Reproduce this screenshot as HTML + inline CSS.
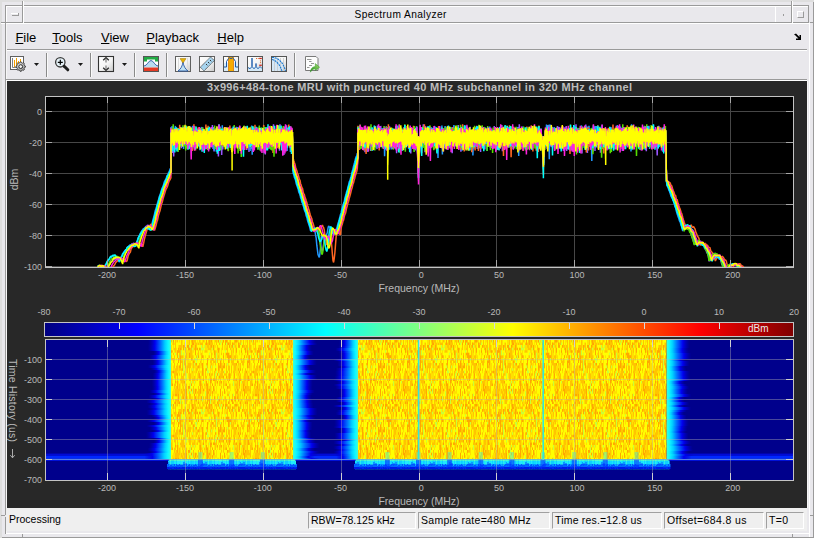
<!DOCTYPE html><html><head><meta charset="utf-8"><style>
*{margin:0;padding:0;box-sizing:border-box}
html,body{width:814px;height:538px;overflow:hidden;background:#e9e8ec;font-family:"Liberation Sans", sans-serif}
.a{position:absolute}
.menu{position:absolute;top:31px;font-size:13px;color:#000;line-height:13px}
.menu u{text-decoration:underline;text-underline-offset:1px}
.st{position:absolute;top:512px;height:17px;border-top:1px solid #a0a0a0;border-left:1px solid #a0a0a0;border-right:1px solid #fff;border-bottom:1px solid #fff;font-size:10.5px;line-height:15px;padding-left:2px;color:#000;white-space:nowrap;overflow:hidden}
</style></head><body>
<div class="a" style="left:0;top:0;width:814px;height:2px;background:#dedede"></div>
<div class="a" style="left:0;top:0;width:2px;height:538px;background:#dedede"></div>
<div class="a" style="left:5px;top:5px;width:804px;height:18px;border-top:1px solid #9a9a9a;border-left:1px solid #9a9a9a;border-bottom:1px solid #9a9a9a;"></div>
<div class="a" style="left:6px;top:6px;width:803px;height:1px;background:#fff"></div>
<div class="a" style="left:6px;top:6px;width:1px;height:16px;background:#fff"></div>
<div class="a" style="left:22px;top:1px;width:1px;height:22px;background:#9a9a9a"></div>
<div class="a" style="left:23px;top:1px;width:1px;height:22px;background:#fff"></div>
<div class="a" style="left:1px;top:22px;width:5px;height:1px;background:#9a9a9a"></div>
<div class="a" style="left:1px;top:23px;width:5px;height:1px;background:#fff"></div>
<div class="a" style="left:12px;top:15px;width:7px;height:1px;background:#9a9a9a"></div>
<div class="a" style="left:11px;top:13px;width:7px;height:1px;background:#fff"></div>
<div class="a" style="left:18px;top:13px;width:1px;height:2px;background:#9a9a9a"></div>
<div class="a" style="left:775px;top:6px;width:1px;height:16px;background:#fff"></div>
<div class="a" style="left:791px;top:1px;width:1px;height:22px;background:#9a9a9a"></div>
<div class="a" style="left:792px;top:1px;width:1px;height:22px;background:#fff"></div>
<div class="a" style="left:808px;top:5px;width:1px;height:18px;background:#9a9a9a"></div>
<div class="a" style="left:783px;top:14px;width:1px;height:2px;background:#9a9a9a"></div>
<div class="a" style="left:797px;top:11px;width:7px;height:7px;border-top:1px solid #fff;border-left:1px solid #fff;border-right:1px solid #9a9a9a;border-bottom:1px solid #9a9a9a"></div>
<div class="a" style="left:813px;top:2px;width:1px;height:536px;background:#9a9a9a"></div>
<div class="a" style="left:809px;top:23px;width:1px;height:515px;background:#fff"></div>
<div class="a" style="left:810px;top:22px;width:3px;height:1px;background:#9a9a9a"></div>
<div class="a" style="left:810px;top:515px;width:3px;height:1px;background:#9a9a9a"></div>
<div class="a" style="left:6px;top:23px;width:803px;height:1px;background:#fff"></div>
<div class="a" style="left:6px;top:24px;width:1px;height:509px;background:#f6f6f6"></div>
<div class="a" style="left:807px;top:81px;width:1px;height:427px;background:#f6f6f6"></div>
<div class="a" style="left:354.5px;top:8.5px;font-size:10.2px;line-height:11px;letter-spacing:0.4px;color:#000;white-space:nowrap">Spectrum Analyzer</div>
<div class="a" style="left:5px;top:23px;width:1px;height:492px;background:#9a9a9a"></div>
<div class="a" style="left:5px;top:517px;width:1px;height:17px;background:#9a9a9a"></div>
<div class="a" style="left:1px;top:515px;width:4px;height:1px;background:#9a9a9a"></div>
<div class="a" style="left:2px;top:537px;width:812px;height:1px;background:#9a9a9a"></div>
<div class="a" style="left:6px;top:533px;width:803px;height:1px;background:#fff"></div>
<div class="a" style="left:22px;top:534px;width:1px;height:4px;background:#9a9a9a"></div>
<div class="a" style="left:792px;top:534px;width:1px;height:4px;background:#9a9a9a"></div>
<div class="menu" style="left:15.4px"><u>F</u>ile</div>
<div class="menu" style="left:52.2px"><u>T</u>ools</div>
<div class="menu" style="left:101px"><u>V</u>iew</div>
<div class="menu" style="left:146.3px"><u>P</u>layback</div>
<div class="menu" style="left:217.3px"><u>H</u>elp</div>
<svg class="a" style="left:793px;top:33px" width="10" height="8" viewBox="0 0 10 8"><path d="M1 1.5 L3 0.5 L6.5 4 L6.5 2 L8 2 L8 7 L3 7 L3 5.5 L5.5 5.5 L2.5 2.5 Z" fill="#000"/></svg>
<div class="a" style="left:7px;top:49px;width:800px;height:1px;background:#9a9a9a"></div>
<div class="a" style="left:7px;top:50px;width:800px;height:1px;background:#fff"></div>
<div class="a" style="left:6px;top:79px;width:801px;height:1px;background:#9a9a9a"></div>
<div class="a" style="left:6px;top:80px;width:801px;height:1px;background:#fff"></div>
<div class="a" style="left:46px;top:53px;width:1px;height:24px;background:#8a8a8a"></div>
<div class="a" style="left:47px;top:53px;width:1px;height:24px;background:#fafafa"></div>
<div class="a" style="left:90px;top:53px;width:1px;height:24px;background:#8a8a8a"></div>
<div class="a" style="left:91px;top:53px;width:1px;height:24px;background:#fafafa"></div>
<div class="a" style="left:134px;top:53px;width:1px;height:24px;background:#8a8a8a"></div>
<div class="a" style="left:135px;top:53px;width:1px;height:24px;background:#fafafa"></div>
<div class="a" style="left:166px;top:53px;width:1px;height:24px;background:#8a8a8a"></div>
<div class="a" style="left:167px;top:53px;width:1px;height:24px;background:#fafafa"></div>
<div class="a" style="left:294px;top:53px;width:1px;height:24px;background:#8a8a8a"></div>
<div class="a" style="left:295px;top:53px;width:1px;height:24px;background:#fafafa"></div>
<svg class="a" style="left:0;top:51px" width="330" height="28" viewBox="0 51 330 28">
<defs><linearGradient id="bg1" x1="0" y1="0" x2="1" y2="1"><stop offset="0" stop-color="#ffffff"/><stop offset="0.55" stop-color="#f4f4f4"/><stop offset="1" stop-color="#c8c8c8"/></linearGradient></defs>
<rect x="10.5" y="56.5" width="13" height="13" fill="#fff" stroke="#606060"/>
<path d="M12.5 58V67.5H22" stroke="#808080" fill="none"/>
<path d="M14.5 60V67M16.5 58V66M18.5 61V64M20.5 59V62" stroke="#f5a000" stroke-width="1"/>
<defs><radialGradient id="gg" cx="0.4" cy="0.35" r="0.7"><stop offset="0" stop-color="#e8e8e8"/><stop offset="1" stop-color="#8a8a8a"/></radialGradient></defs>
<path d="M24.60 65.73L25.42 66.03L25.42 67.17L24.60 67.47L24.08 68.74L24.44 69.53L23.63 70.34L22.84 69.98L21.57 70.50L21.27 71.32L20.13 71.32L19.83 70.50L18.56 69.98L17.77 70.34L16.96 69.53L17.32 68.74L16.80 67.47L15.98 67.17L15.98 66.03L16.80 65.73L17.32 64.46L16.96 63.67L17.77 62.86L18.56 63.22L19.83 62.70L20.13 61.88L21.27 61.88L21.57 62.70L22.84 63.22L23.63 62.86L24.44 63.67L24.08 64.46Z" fill="url(#gg)" stroke="#2e2e2e" stroke-width="0.8" stroke-linejoin="round"/>
<circle cx="20.7" cy="66.6" r="1.9" fill="#f4f4f4" stroke="#2a2a2a" stroke-width="1"/>
<path d="M34 63H39L36.5 66Z" fill="#1a1a1a"/>
<path d="M78 63H83L80.5 66Z" fill="#1a1a1a"/>
<path d="M122 63H127L124.5 66Z" fill="#1a1a1a"/>
<circle cx="60.3" cy="62.3" r="4.7" fill="#e6f2f8" stroke="#3a3a3a" stroke-width="1.3"/>
<path d="M57.8 62.3H62.8M60.3 59.8V64.8" stroke="#000" stroke-width="1.2"/>
<path d="M64.2 66.2L67.8 69.8" stroke="#1e1e1e" stroke-width="3" stroke-linecap="round"/>
<rect x="98.5" y="56.5" width="15" height="15" fill="url(#bg1)" stroke="#333" stroke-width="1.1"/>
<path d="M106 59V62.5M106 65.5V69" stroke="#9a9a9a" stroke-width="1.6"/>
<path d="M103.2 60.2L106 57.6L108.8 60.2M103.2 67.8L106 70.4L108.8 67.8" stroke="#2a2a2a" stroke-width="1.3" fill="none"/>
<rect x="143.5" y="56.5" width="15" height="15" fill="#fff" stroke="#555"/>
<path d="M144 57H158V61.5H155V59.5H147V61.5H144Z" fill="#22aa44"/>
<path d="M144 67.5V66C147 66 148.5 60.5 151 60.5S155 66 158 66V67.5Z" fill="#b8dcf0"/>
<path d="M144 66C147 66 148.5 60.5 151 60.5S155 66 158 66" fill="none" stroke="#2a55a5" stroke-width="0.9"/>
<rect x="144" y="67.5" width="14" height="3.5" fill="#e53a25"/>
<rect x="175.5" y="56.5" width="15" height="15" fill="url(#bg1)" stroke="#606060"/>
<path d="M178.5 58V71M187.5 58V71" stroke="#dcdcdc"/>
<path d="M178 71C181 69 182.3 66 183 62C183.7 66 185 69 188 71Z" fill="#c0e2f5" stroke="#2a5aa8" stroke-width="0.9"/>
<path d="M180 58.6H186L183.4 62.5H182.6Z" fill="#e8b400" stroke="#9a6a00" stroke-width="0.5"/>
<rect x="199.5" y="56.5" width="15" height="15" fill="url(#bg1)" stroke="#606060"/>
<path d="M200.3 67.2L210.6 56.9L214.3 60.6L204 70.9Z" fill="#a8d4ee" stroke="#1a1a1a" stroke-width="0.8" stroke-dasharray="1 0.6"/>
<path d="M206 64L207.3 65.3M208 62L209.3 63.3M210 60L211.3 61.3" stroke="#222" stroke-width="0.9"/>
<rect x="223.5" y="56.5" width="15" height="15" fill="url(#bg1)" stroke="#555"/>
<rect x="224" y="63" width="14" height="8" fill="#d8ecf8"/>
<rect x="228.5" y="57" width="5" height="14" fill="#f6ab00"/>
<path d="M228.5 57V71M233.5 57V71" stroke="#e07800" stroke-width="0.8"/>
<path d="M224 67H226.5V61.5L228.5 58.5L229.5 57.8L231 58.6L232.5 57.8L233.5 58.5L235.5 61.5V67H238" stroke="#1a55a5" stroke-width="1" fill="none"/>
<rect x="247.5" y="56.5" width="15" height="15" fill="url(#bg1)" stroke="#555"/>
<rect x="248" y="67" width="14" height="4" fill="#d4e8f6"/>
<path d="M248 67.5L250 68.8L252 66.5V58V66.5L254 68.8L256 66.5V63.5V66.5L258 68.8L260 66.5L262 68.5" stroke="#1a5aaa" stroke-width="0.9" fill="none"/>
<path d="M256 58.5H257M257.8 58.5H258.8" stroke="#e07030"/>
<rect x="259.2" y="57.8" width="2.6" height="1.3" fill="#d02a20"/>
<rect x="259.2" y="64.6" width="2.6" height="1.3" fill="#d02a20"/>
<circle cx="260.5" cy="60.8" r="0.6" fill="#e07030"/><circle cx="260.5" cy="62.6" r="0.6" fill="#e07030"/>
<rect x="271.5" y="56.5" width="15" height="15" fill="url(#bg1)" stroke="#555"/>
<path d="M272 57H277C281 60 283 64 284 71H272Z" fill="#cfe6f7" opacity="0.9"/>
<path d="M274.5 58V71M277.5 58V71M280.5 58V71M283.5 58V71" stroke="#c8c8c8" stroke-width="0.8"/>
<path d="M272 57.5H274C279 58.5 283.5 63 285.5 71" stroke="#1a78d0" stroke-width="1.1" fill="none" stroke-dasharray="2 0.8"/>
<path d="M272 59.5C277 61 280 65 282 71" stroke="#1a78d0" stroke-width="1.1" fill="none" stroke-dasharray="2 0.8"/>
<path d="M305.5 56.5H316L318 58.5V70.5H305.5Z" fill="#fdfdfd" stroke="#7a7a7a"/>
<path d="M307 59.5H311.5M309 61.5H311.5M311 63.5H314M309 65.5H312M307 67.5H309.5" stroke="#8a8a8a" stroke-width="0.9"/>
<defs><linearGradient id="ga" x1="0" y1="1" x2="1" y2="0"><stop offset="0" stop-color="#1a8a1a"/><stop offset="1" stop-color="#a8e070"/></linearGradient></defs>
<path d="M310.3 72.2C310.8 68.5 312.5 66.8 315.3 66.5V63.6L319.6 67.2L315.3 70.6V68.8C313.3 68.9 311.8 70 310.3 72.2Z" fill="url(#ga)" stroke="#3a9a2a" stroke-width="0.5"/>
</svg>
<svg class="a" style="left:7px;top:81px" width="800" height="427" viewBox="7 81 800 427">
<defs>
<clipPath id="cax"><rect x="45" y="96" width="748" height="171"/></clipPath>
<clipPath id="csp"><rect x="45" y="340" width="748" height="140"/></clipPath>
<linearGradient id="jet" x1="0" x2="1" y1="0" y2="0"><stop offset="0" stop-color="#000080"/><stop offset="0.125" stop-color="#0000ff"/><stop offset="0.375" stop-color="#00ffff"/><stop offset="0.5" stop-color="#80ff80"/><stop offset="0.625" stop-color="#ffff00"/><stop offset="0.875" stop-color="#ff0000"/><stop offset="1" stop-color="#800000"/></linearGradient>
</defs>
<rect x="7" y="81" width="800" height="427" fill="#282828"/>
<text x="207" y="91" font-family='"Liberation Sans", sans-serif' font-size="11" font-weight="bold" fill="#bdbdbd" textLength="425" lengthAdjust="spacing">3x996+484-tone MRU with punctured 40 MHz subchannel in 320 MHz channel</text>
<rect x="45" y="96" width="748" height="171" fill="#000"/>
<path d="M107.5 96V267M185.5 96V267M263.5 96V267M341.5 96V267M419.5 96V267M496.5 96V267M574.5 96V267M652.5 96V267M730.5 96V267M45 111.5H793M45 142.5H793M45 173.5H793M45 204.5H793M45 235.5H793M45 266.5H793" stroke="#474747" stroke-width="1" fill="none"/>
<g clip-path="url(#cax)" fill="none" stroke-width="1.5" stroke-linejoin="bevel">
<path d="M97.7 266.3 98.4 266.7 99.2 265.3 100 266.2 100.8 266.2 101.5 266.7 102.3 266.4 103.1 267.5 103.9 268.2 104.7 268.5 105.4 269.4 106.2 271.7 107 269.9 107.8 268 108.6 265.3 109.3 265.2 110.1 262.5 110.9 262.2 111.7 261.1 112.5 260.8 113.2 259.2 114 259.4 114.8 258.7 115.6 258.9 116.3 258.3 117.1 257.3 117.9 257.4 118.7 258 119.5 259.6 120.2 258.8 121 259.8 121.8 261.5 122.6 260.9 123.4 258.5 124.1 255.9 124.9 253.3 125.7 252.1 126.5 250.4 127.2 249.8 128 248.2 128.8 246.8 129.6 245.7 130.4 245 131.1 245.2 131.9 243.7 132.7 244.4 133.5 243.2 134.3 243.5 135 244.1 135.8 243.7 136.6 244.3 137.4 244.4 138.1 247.2 138.9 244.3 139.7 239.5 140.5 236.9 141.3 235.5 142 233.2 142.8 231 143.6 230 144.4 228.5 145.2 227.9 145.9 226.2 146.7 226.7 147.5 225.1 148.3 225.4 149.1 226.1 149.8 227 150.6 229.3 151.4 229.9 152.2 226.6 152.9 223.8 153.7 221.3 154.5 217.3 155.3 214.8 156.1 211.3 156.8 208.7 157.6 205 158.4 203.4 159.2 199.9 160 197.4 160.7 195.1 161.5 193.5 162.3 191 163.1 187.6 163.8 186.6 164.6 184.6 165.4 182.5 166.2 180.1 167 178.3 167.7 177.3 168.5 175.5 169.3 172.9 170.1 171.6 170.9 169.2 171 171 171 127.4 171.6 144.9 172.1 128.2 172.6 152.9 173.2 129.6 173.7 156.4 174.3 131 174.8 143.5 175.4 131.7 175.9 142.1 176.5 130.6 177 145.6 177.6 131.4 178.1 142.5 178.6 129.4 179.2 144.1 179.7 130.8 180.3 145.1 180.8 131.1 181.4 148.2 181.9 130 182.5 146.6 183 133 183.6 142.4 184.1 127.6 184.6 143.6 185.2 125.8 185.7 143.4 186.3 132 186.8 144.7 187.4 130 187.9 147 188.5 127.5 189 142.5 189.5 131.3 190.1 147.6 190.6 126.5 191.2 142.9 191.7 131 192.3 143.5 192.8 126.5 193.4 146.1 193.9 127.9 194.5 143.5 195 128.2 195.5 142.5 196.1 129 196.6 144.8 197.2 128.6 197.7 141.9 198.3 129.2 198.8 145.8 199.4 128.7 199.9 142.3 200.4 128.9 201 147.5 201.5 127.8 202.1 142.3 202.6 127.2 203.2 144.8 203.7 131.2 204.3 145.7 204.8 129.5 205.4 144.4 205.9 133.5 206.4 146 207 130.3 207.5 142.3 208.1 128.2 208.6 144.9 209.2 130 209.7 142.4 210.3 127.7 210.8 142.9 211.4 127.5 211.9 146 212.4 125.1 213 149 213.5 127.1 214.1 151.5 214.6 129.6 215.2 143.8 215.7 128.2 216.3 142.9 216.8 129.8 217.3 144.5 217.9 129.4 218.4 156.5 219 125.1 219.5 146.3 220.1 126.6 220.6 144.5 221.2 130.3 221.7 155 222.3 128.9 222.8 149.5 223.3 128.4 223.9 144.3 224.4 128 225 142.1 225.5 131.2 226.1 148.1 226.6 132.7 227.2 149.3 227.7 129.3 228.3 142.4 228.8 127.8 229.3 144.1 229.9 130.8 230.4 146.2 231 129.8 231.5 145.7 232.1 127.9 232.6 148.3 233.2 132.2 233.7 145.7 234.2 128.8 234.8 148 235.3 129.9 235.9 142.7 236.4 126.7 237 146 237.5 130.2 238.1 142.5 238.6 129.1 239.2 147.6 239.7 126.1 240.2 146.3 240.8 130.2 241.3 142 241.9 128.7 242.4 149.6 243 127.4 243.5 146.3 244.1 130.2 244.6 144.8 245.2 130.8 245.7 146 246.2 130.4 246.8 150.1 247.3 126.9 247.9 142.1 248.4 133.4 249 152.1 249.5 128.5 250.1 143.1 250.6 131 251.1 149 251.7 130 252.2 145.7 252.8 130.6 253.3 143 253.9 132.3 254.4 147.7 255 132.8 255.5 147.1 256.1 128.3 256.6 142 257.1 127.7 257.7 144.1 258.2 131.3 258.8 144.6 259.3 129.7 259.9 148 260.4 131.2 261 145.5 261.5 129.5 262 146.2 262.6 134.6 263.1 145.8 263.7 128 264.2 153.3 264.8 129 265.3 154.4 265.9 132.7 266.4 142 267 134 267.5 147.1 268 128.5 268.6 143.4 269.1 130.8 269.7 148.6 270.2 129.5 270.8 144.1 271.3 129.9 271.9 141.9 272.4 132.9 273 145.3 273.5 124.2 274 145.7 274.6 130 275.1 142.6 275.7 133.1 276.2 144.2 276.8 126.7 277.3 145.9 277.9 131.2 278.4 141.7 278.9 130.3 279.5 150.8 280 124.2 280.6 144.9 281.1 129.3 281.7 145 282.2 129.3 282.8 144.1 283.3 132.1 283.9 155 284.4 131.2 284.9 146.7 285.5 126.5 286 146.4 286.6 125.3 287.1 142.9 287.7 127.7 288.2 143.5 288.8 129 289.3 145.7 289.9 128.3 290.4 146.2 290.9 131 291.5 146.6 292 128.7 292.6 143.2 293.1 164.2 293.1 169.9 293.7 171.8 294.4 173.2 295 176.5 295.6 177.7 296.2 180.1 296.9 182.4 297.5 184.4 298.1 186.8 298.7 189 299.4 189.5 300 192.1 300.6 195 301.2 195.8 301.8 199 302.5 200.2 303.1 202.3 303.7 204 304.3 206.7 305 207.8 305.6 210.2 306.2 212.8 306.8 215.4 307.5 217.2 308.1 219.5 308.7 220.8 309.3 222.3 309.9 224.4 310.6 226.7 311.2 229.1 311.8 231.2 312.4 229.9 313.1 229.7 313.7 229.3 314.3 229.2 314.9 228.7 315.5 228.7 316.2 228.5 316.8 227.6 317.4 227.3 318 228.1 318.7 229.6 319.3 234.1 319.9 239.2 320.5 244.3 321.2 248.2 321.8 251.3 322.4 250.9 323 248.3 323.6 244.4 324.3 239.4 324.9 235.3 325.5 234.8 326.1 237.3 326.8 237.4 327.4 239.6 328 240.8 328.6 241 329.3 240.8 329.9 238.4 330.5 234.2 331.1 230.8 331.7 230 332.4 229.4 333 228.3 333.6 229.8 334.2 232.6 334.9 232.9 335.5 234.3 336.1 232.1 336.7 232 337.4 229.3 338 227.7 338.6 224.7 339.2 223.5 339.8 220.1 340.5 218.8 341.1 215.9 341.7 214.3 342.3 211.4 343 209.5 343.6 206.9 344.2 204.3 344.8 201.7 345.5 199.5 346.1 197.4 346.7 194.5 347.3 193 347.9 191.2 348.6 187.9 349.2 186.2 349.8 182.8 350.4 181.6 351.1 180 351.7 177 352.3 173.6 352.9 172.2 353.6 169.3 354.2 167.8 354.8 165.1 355.4 163.8 356 161.2 356.7 159.1 357.3 156.3 357.9 158 357.9 131.2 358.5 147 359 129.7 359.5 149.2 360.1 133.7 360.6 148.5 361.2 130.1 361.7 142.1 362.3 131.7 362.8 143.7 363.4 130.2 363.9 146.4 364.5 131.1 365 152.2 365.5 130 366.1 142.3 366.6 132.8 367.2 143.1 367.7 128.7 368.3 146.9 368.8 129.3 369.4 142.7 369.9 126.5 370.5 150.9 371 127.7 371.5 142.4 372.1 128.5 372.6 145.9 373.2 130 373.7 145.8 374.3 129.2 374.8 147 375.4 130.8 375.9 142.6 376.4 131.6 377 149.1 377.5 125.5 378.1 143.5 378.6 133.5 379.2 143.1 379.7 125.9 380.3 147.2 380.8 125.9 381.4 143.7 381.9 133.2 382.4 144.9 383 131.1 383.5 145 384.1 128.7 384.6 147.7 385.2 130.9 385.7 146.3 386.3 126.2 386.8 143.1 387.4 127.7 387.9 146.6 388.4 129.6 389 142.7 389.5 126.2 390.1 142 390.6 128.3 391.2 144.7 391.7 128.1 392.3 149.3 392.8 129.7 393.3 141.9 393.9 131.4 394.4 143.4 395 130.1 395.5 149.5 396.1 131.5 396.6 153.3 397.2 127.8 397.7 146 398.3 131.4 398.8 144.4 399.3 128.9 399.9 143.5 400.4 131 401 146.1 401.5 131.6 402.1 147.6 402.6 131.8 403.2 145 403.7 127.2 404.2 146.2 404.8 124.7 405.3 149.9 405.9 130.1 406.4 145.9 407 133 407.5 142 408.1 129.8 408.6 145.4 409.2 127.9 409.7 150.7 410.2 128.7 410.8 153.6 411.3 130.3 411.9 145.1 412.4 133.3 413 146.2 413.5 130.2 414.1 146.8 414.6 132 415.2 150.6 415.7 130.8 416.2 142.5 416.8 133.5 417.3 146.3 417.9 154.6 418.4 170.6 418.4 136.3 418.5 172.9 418.6 136.3 419 159.2 419.5 148.6 420.1 134.3 420.6 146.4 421.1 128.3 421.7 142.8 422.2 131.2 422.8 142.3 423.3 124.2 423.9 145.6 424.4 128.9 425 152.2 425.5 126.2 426.1 145.1 426.6 130.4 427.1 150.3 427.7 134.8 428.2 146.2 428.8 126.8 429.3 143.1 429.9 127.5 430.4 142 431 127.6 431.5 142 432.1 128.3 432.6 144 433.1 129 433.7 148.8 434.2 125.9 434.8 142.1 435.3 128.9 435.9 145.4 436.4 129 437 143.2 437.5 127.8 438 143.9 438.6 128.9 439.1 143.3 439.7 133.1 440.2 145.1 440.8 135.2 441.3 145.5 441.9 129.4 442.4 143.1 443 133.6 443.5 142.1 444 130.2 444.6 148.5 445.1 131.2 445.7 145.6 446.2 127.3 446.8 149.6 447.3 130.2 447.9 143.3 448.4 131.8 448.9 142.8 449.5 133.1 450 148 450.6 129.5 451.1 141.9 451.7 130.5 452.2 153.2 452.8 126.9 453.3 144.3 453.9 131.4 454.4 144 454.9 131.7 455.5 145.2 456 130.3 456.6 143.2 457.1 129.9 457.7 142.1 458.2 124.9 458.8 142.9 459.3 130.9 459.9 142.2 460.4 128.3 460.9 151.7 461.5 129.5 462 142.1 462.6 125 463.1 144.6 463.7 130.5 464.2 147.9 464.8 125.6 465.3 146.5 465.8 129.7 466.4 145.4 466.9 131.7 467.5 144.6 468 129.7 468.6 150.6 469.1 130 469.7 143.2 470.2 126.7 470.8 146.8 471.3 129.8 471.8 142 472.4 129.7 472.9 148.4 473.5 130.3 474 148.7 474.6 127.5 475.1 144.6 475.7 134.3 476.2 143.3 476.8 125.8 477.3 149 477.8 131.8 478.4 143.1 478.9 126.9 479.5 148.1 480 130.7 480.6 152 481.1 128.7 481.7 142 482.2 128.7 482.7 144.6 483.3 130 483.8 144.2 484.4 131.2 484.9 149.5 485.5 129.9 486 143.7 486.6 129.7 487.1 142.6 487.7 130.7 488.2 145.2 488.7 131.1 489.3 143.3 489.8 127.4 490.4 148 490.9 129.8 491.5 147.9 492 129.2 492.6 146.6 493.1 132.3 493.6 147.4 494.2 126.1 494.7 142.9 495.3 131.2 495.8 142 496.4 128.1 496.9 150 497.5 130.4 498 145.5 498.6 136.1 499.1 146.4 499.6 128.9 500.2 142.4 500.7 125.9 501.3 146.1 501.8 125.1 502.4 151.2 502.9 132.1 503.5 142.1 504 131.6 504.6 144.1 505.1 126 505.6 142.5 506.2 128.4 506.7 144.7 507.3 128.2 507.8 146 508.4 128 508.9 147.9 509.5 127.8 510 144.6 510.5 126.2 511.1 144.1 511.6 129.5 512.2 141.9 512.7 132.2 513.3 143.6 513.8 129.5 514.4 143 514.9 130.8 515.5 146.2 516 128.9 516.5 147.1 517.1 132.2 517.6 145.4 518.2 126.9 518.7 145.4 519.3 124.2 519.8 146.8 520.4 128.6 520.9 149.6 521.5 128.5 522 143.1 522.5 128.9 523.1 142 523.6 128.4 524.2 142.2 524.7 128.2 525.3 143.9 525.8 130.7 526.4 149.8 526.9 130.3 527.4 143 528 130.5 528.5 147.6 529.1 126.7 529.6 142.5 530.2 132.9 530.7 142.2 531.3 128.7 531.8 147.2 532.4 129.3 532.9 141.8 533.4 128.9 534 145 534.5 129.8 535.1 145.3 535.6 136 536.2 141.8 536.7 129.4 537.3 142.9 537.8 128.8 538.3 150.3 538.9 133.2 539.4 144.2 540 130 540.5 144.8 541.1 132.6 541.6 145.2 542.2 136.3 542.7 148.4 543.3 160.4 543.3 136.3 543.4 163.9 543.5 136.3 543.8 155.3 544.3 143.2 544.9 148.3 545.4 130.9 546 144.8 546.5 132.2 547.1 149.2 547.6 124.9 548.2 143.9 548.7 129.3 549.3 149.9 549.8 125.5 550.3 144.3 550.9 124.7 551.4 145.4 552 126.7 552.5 143.9 553.1 127.6 553.6 142.2 554.2 133.8 554.7 149.3 555.2 128.2 555.8 148.5 556.3 128.4 556.9 144.6 557.4 125.9 558 144 558.5 126.8 559.1 148.2 559.6 131.4 560.2 143 560.7 128.3 561.2 145.5 561.8 131.7 562.3 145.8 562.9 133.3 563.4 151.1 564 127.5 564.5 142.3 565.1 127.2 565.6 149.6 566.2 126.1 566.7 151 567.2 132.2 567.8 143.5 568.3 132.8 568.9 147.6 569.4 129.5 570 142.4 570.5 133 571.1 144.5 571.6 130.5 572.1 150.1 572.7 130.6 573.2 143.7 573.8 132.9 574.3 146.5 574.9 132 575.4 143.5 576 124.3 576.5 146.9 577.1 129.4 577.6 144.7 578.1 128 578.7 142.5 579.2 132.3 579.8 143.1 580.3 132.1 580.9 146.2 581.4 129.2 582 153.6 582.5 128.8 583 144.2 583.6 129.6 584.1 145 584.7 127.5 585.2 143.9 585.8 124.5 586.3 150.1 586.9 126.8 587.4 153 588 130.8 588.5 144.1 589 129.5 589.6 146.7 590.1 133.4 590.7 149.4 591.2 130.6 591.8 145 592.3 128.6 592.9 151.7 593.4 128 594 144.3 594.5 126.3 595 151 595.6 129.1 596.1 142.1 596.7 130.9 597.2 143.7 597.8 125.3 598.3 147.8 598.9 131.4 599.4 141.8 599.9 129.9 600.5 152.7 601 130.4 601.6 147.6 602.1 127.8 602.7 144 603.2 129.2 603.8 145.6 604.3 129.7 604.9 141.9 605.4 128 605.9 149.4 606.5 132.8 607 143.3 607.6 130.1 608.1 149.6 608.7 128.9 609.2 144.5 609.8 132.1 610.3 145.2 610.9 127.7 611.4 142.9 611.9 132.2 612.5 144.2 613 130.1 613.6 144.3 614.1 130.7 614.7 141.7 615.2 130 615.8 142.3 616.3 129.5 616.8 143.8 617.4 132.1 617.9 143.3 618.5 128.1 619 144.8 619.6 128.3 620.1 144 620.7 132.1 621.2 142.1 621.8 128.6 622.3 150.9 622.8 130.7 623.4 149.5 623.9 130.2 624.5 146.7 625 131.5 625.6 142.2 626.1 129.9 626.7 143.7 627.2 130.8 627.8 145.3 628.3 129.6 628.8 145.3 629.4 130.2 629.9 141.8 630.5 128.1 631 143.6 631.6 136.8 632.1 144.4 632.7 130.7 633.2 144.6 633.7 129.3 634.3 147.9 634.8 134.8 635.4 142.9 635.9 126.5 636.5 144.8 637 130.6 637.6 143.7 638.1 129 638.7 143.1 639.2 131.9 639.7 149.8 640.3 130.9 640.8 150.2 641.4 132.8 641.9 143.3 642.5 132.6 643 143 643.6 128.4 644.1 142.4 644.6 128.7 645.2 144.1 645.7 129.3 646.3 151.2 646.8 126.9 647.4 142.4 647.9 129.7 648.5 144.1 649 125.7 649.6 141.9 650.1 130.6 650.6 142.5 651.2 127 651.7 148.1 652.3 128.9 652.8 146.8 653.4 125.6 653.9 148.1 654.5 129.9 655 142.6 655.6 131 656.1 147.1 656.6 134 657.2 155.6 657.7 129 658.3 144 658.8 130.8 659.4 144.9 659.9 128.6 660.5 142.7 661 131.6 661.5 142.1 662.1 128 662.6 144.6 663.2 130.4 663.7 142 664.3 130.1 664.8 149.6 665.4 130.2 665.9 144.6 666.3 170.4 666.5 181.2 667.1 185.1 667.9 186 668.6 187 669.4 190.2 670.2 191.5 671 192.4 671.7 195.7 672.5 196.6 673.3 200.2 674.1 201.8 674.9 202.9 675.6 204.9 676.4 208.5 677.2 210.5 678 213.1 678.8 215.8 679.5 218 680.3 219.4 681.1 222.6 681.9 224.5 682.7 227.7 683.4 230.1 684.2 227.9 685 228.1 685.8 227.4 686.5 228 687.3 228.7 688.1 229.3 688.9 229 689.7 230.2 690.4 231.6 691.2 234.3 692 236.9 692.8 239 693.6 241.9 694.3 244.2 695.1 242.9 695.9 241.9 696.7 241.9 697.4 241.6 698.2 240.9 699 240.6 699.8 241.2 700.6 241.2 701.3 242.5 702.1 242.8 702.9 244.3 703.7 245.6 704.5 246.3 705.2 248.6 706 249.5 706.8 252.7 707.6 253.3 708.4 256.4 709.1 261.3 709.9 258.1 710.7 257.3 711.5 256.6 712.2 255.8 713 254.6 713.8 253.2 714.6 254.6 715.4 254.1 716.1 254.7 716.9 255.8 717.7 255.4 718.5 257.2 719.3 258.9 720 258.6 720.8 260.3 721.6 263.7 722.4 265 723.1 267.9 723.9 271 724.7 270.4 725.5 268.2 726.3 268.6 727 265.9 727.8 265.8 728.6 265.8 729.4 264.5 730.2 264.3 730.9 265 731.7 265.3 732.5 264.1 733.3 264.5 734 263.7 734.8 265.4 735.6 264.2 736.4 264.5 737.2 266.3 737.9 266.7 738.7 266.5 739.5 267.9 740.3 268.2 741.1 268.9 741.8 270.2 742.6 271.1 743.4 271.1 744.2 271.1 745 271.1 745.7 271.1 746.5 271.1 747.3 271.1 748.1 271.1" stroke="#9955ff"/>
<path d="M97.7 265.1 98.4 265.8 99.2 266.2 100 266.7 100.8 267 101.5 267.7 102.3 268.1 103.1 271 103.9 270.8 104.7 267 105.4 265.2 106.2 263.9 107 262 107.8 261.4 108.6 260.1 109.3 259.3 110.1 257.2 110.9 257.6 111.7 256.8 112.5 256.5 113.2 255.8 114 256.8 114.8 257.1 115.6 257.2 116.3 257.2 117.1 258.3 117.9 259.8 118.7 261.2 119.5 262.1 120.2 259 121 257.1 121.8 256.5 122.6 253.7 123.4 253.4 124.1 251.7 124.9 250.6 125.7 250.1 126.5 249.1 127.2 247.3 128 246.7 128.8 246 129.6 245.2 130.4 245 131.1 245.6 131.9 244.9 132.7 244.9 133.5 245.7 134.3 245.3 135 245.8 135.8 245.6 136.6 242.2 137.4 240.6 138.1 237.6 138.9 236.6 139.7 234.9 140.5 233.1 141.3 231.7 142 230.8 142.8 229.3 143.6 228.6 144.4 228.4 145.2 227.3 145.9 227.8 146.7 227.7 147.5 226.9 148.3 228.3 149.1 229.2 149.8 229.4 150.6 229.5 151.4 226.9 152.2 223 152.9 220.1 153.7 217.3 154.5 214.1 155.3 210.5 156.1 208.2 156.8 206.1 157.6 202.8 158.4 200.3 159.2 196.8 160 195.1 160.7 192.8 161.5 189.9 162.3 187.7 163.1 186.6 163.8 183.6 164.6 181.3 165.4 179.9 166.2 178.5 167 175.6 167.7 175.2 168.5 172.7 169.3 171.4 170.1 169.1 170.9 167.5 171 170.8 171 127.3 171.6 144 172.1 126.1 172.6 147.4 173.2 131.6 173.7 146.3 174.3 127.7 174.8 143.3 175.4 125.9 175.9 147 176.5 129.9 177 142.6 177.6 128.1 178.1 143.2 178.6 132.2 179.2 144 179.7 127 180.3 144.7 180.8 127.1 181.4 144.1 181.9 128.2 182.5 146.1 183 130.8 183.6 149 184.1 126.8 184.6 142.1 185.2 129.1 185.7 146.6 186.3 127 186.8 143 187.4 129.2 187.9 145.1 188.5 129.5 189 142.9 189.5 131 190.1 146.1 190.6 130.3 191.2 145.4 191.7 128.7 192.3 150.2 192.8 125.8 193.4 143.7 193.9 130.8 194.5 148.7 195 133.4 195.5 144.9 196.1 132.8 196.6 143 197.2 131.6 197.7 142.1 198.3 131 198.8 142 199.4 133.8 199.9 150.3 200.4 129.5 201 148.7 201.5 126.9 202.1 143 202.6 130.1 203.2 143.6 203.7 134.6 204.3 151.8 204.8 132.6 205.4 146 205.9 129.2 206.4 143.3 207 129.5 207.5 144 208.1 130.2 208.6 143.1 209.2 128.2 209.7 149.2 210.3 129.8 210.8 144.5 211.4 131.4 211.9 147.6 212.4 131.6 213 142.5 213.5 132.5 214.1 150.6 214.6 133.2 215.2 146.7 215.7 128.9 216.3 151.7 216.8 127.4 217.3 144 217.9 126.9 218.4 141.9 219 126.1 219.5 143.8 220.1 132.9 220.6 146.2 221.2 132.6 221.7 141.8 222.3 125.3 222.8 143.9 223.3 132.5 223.9 146.9 224.4 132.7 225 144.2 225.5 133.2 226.1 144.1 226.6 129.1 227.2 145.3 227.7 132.7 228.3 144.7 228.8 131 229.3 145.7 229.9 128.9 230.4 147.2 231 129.3 231.5 146.6 232.1 131.6 232.6 142 233.2 130.3 233.7 144.8 234.2 128.3 234.8 144.9 235.3 132.8 235.9 142.1 236.4 127.6 237 147.6 237.5 127.1 238.1 143.9 238.6 137.2 239.2 142 239.7 131.1 240.2 149.3 240.8 134.6 241.3 145.5 241.9 129.4 242.4 142.1 243 128.1 243.5 142.9 244.1 132.4 244.6 144.1 245.2 127.3 245.7 145.8 246.2 127.5 246.8 144.5 247.3 133.4 247.9 142.7 248.4 129.9 249 146.2 249.5 131.4 250.1 150.9 250.6 129 251.1 141.9 251.7 125.6 252.2 154.7 252.8 128.1 253.3 151.2 253.9 126.7 254.4 143.9 255 132.3 255.5 142.7 256.1 129.8 256.6 142.3 257.1 127.6 257.7 144.7 258.2 129.7 258.8 149.5 259.3 128.1 259.9 145.2 260.4 131.9 261 143 261.5 130.4 262 142.7 262.6 131.5 263.1 143.9 263.7 134.9 264.2 142.5 264.8 131 265.3 147.6 265.9 130.4 266.4 148.1 267 127.1 267.5 148.2 268 130.5 268.6 142.4 269.1 130 269.7 147.6 270.2 133.9 270.8 142.5 271.3 132 271.9 141.9 272.4 130.1 273 143.6 273.5 127.3 274 146.8 274.6 132.1 275.1 142.8 275.7 132.3 276.2 144.9 276.8 128.3 277.3 144.2 277.9 132.2 278.4 146.7 278.9 133.4 279.5 144 280 129.3 280.6 142.1 281.1 130.9 281.7 146.3 282.2 130.4 282.8 144.9 283.3 131.1 283.9 145.9 284.4 126.6 284.9 146.8 285.5 129.7 286 146.7 286.6 130 287.1 151.1 287.7 130 288.2 144.1 288.8 130 289.3 143 289.9 133.1 290.4 151.9 290.9 129.9 291.5 142.1 292 130 292.6 146.9 293.1 164.2 293.1 173.2 293.7 174.4 294.4 177.5 295 178.6 295.6 180.4 296.2 183.7 296.9 185.4 297.5 187.3 298.1 188.3 298.7 191.9 299.4 193.3 300 194.2 300.6 197.9 301.2 198.4 301.8 202 302.5 203.2 303.1 205.4 303.7 207 304.3 209.8 305 211.5 305.6 212.8 306.2 216.1 306.8 216.8 307.5 220.3 308.1 222.2 308.7 224.1 309.3 225.6 309.9 228 310.6 230.9 311.2 230.5 311.8 229.7 312.4 230.2 313.1 230 313.7 229 314.3 229.2 314.9 230.5 315.5 234.6 316.2 238.2 316.8 245.2 317.4 249.6 318 254.5 318.7 256.1 319.3 257.5 319.9 253.3 320.5 247.5 321.2 239.4 321.8 235.9 322.4 235.9 323 236.7 323.6 236.3 324.3 238.2 324.9 239.2 325.5 238.5 326.1 237.3 326.8 233.9 327.4 232.2 328 228.1 328.6 226 329.3 227 329.9 226.9 330.5 228.9 331.1 231.2 331.7 232.8 332.4 234 333 233.4 333.6 232.9 334.2 232.5 334.9 232.3 335.5 231 336.1 230.8 336.7 229 337.4 225.9 338 223.4 338.6 221.8 339.2 219.7 339.8 217.2 340.5 214.5 341.1 213 341.7 209.7 342.3 207.7 343 205.3 343.6 203.3 344.2 201.9 344.8 198.6 345.5 195.9 346.1 193.9 346.7 191.3 347.3 190.3 347.9 187.5 348.6 184.7 349.2 181.9 349.8 181.3 350.4 178.7 351.1 176.4 351.7 174.1 352.3 171 352.9 169.2 353.6 165.9 354.2 164.1 354.8 161.8 355.4 159.1 356 156.9 356.7 156.1 357.3 153.1 357.9 158 357.9 132.1 358.5 147.8 359 129 359.5 146.9 360.1 129.5 360.6 143 361.2 129.5 361.7 142.8 362.3 132.1 362.8 146.8 363.4 130.2 363.9 145.4 364.5 126.7 365 143.9 365.5 129.7 366.1 144 366.6 131.3 367.2 152.1 367.7 129.6 368.3 144.8 368.8 131.2 369.4 145.6 369.9 134.4 370.5 143.8 371 128.6 371.5 146.7 372.1 134.3 372.6 150.9 373.2 128.7 373.7 144 374.3 131.4 374.8 142 375.4 125.9 375.9 147.7 376.4 133.3 377 143.9 377.5 130.6 378.1 142.4 378.6 131.4 379.2 142.9 379.7 134.7 380.3 145.6 380.8 130.4 381.4 145.7 381.9 128 382.4 143.4 383 130.1 383.5 145.4 384.1 129.8 384.6 156.2 385.2 133 385.7 142.8 386.3 129.3 386.8 142.8 387.4 127.2 387.9 142 388.4 132.2 389 145.6 389.5 129.2 390.1 145.7 390.6 130.8 391.2 149.6 391.7 128.6 392.3 145.4 392.8 130.7 393.3 147 393.9 129.4 394.4 144.9 395 130.3 395.5 143.1 396.1 126.1 396.6 142.1 397.2 125.5 397.7 142.3 398.3 126.4 398.8 151.6 399.3 128.9 399.9 145.8 400.4 131.4 401 144.4 401.5 127.8 402.1 145.1 402.6 129.6 403.2 145.3 403.7 131.1 404.2 147.5 404.8 127.8 405.3 147.7 405.9 130.7 406.4 143.2 407 129.8 407.5 144.9 408.1 132 408.6 149 409.2 133.4 409.7 141.9 410.2 131.3 410.8 142.4 411.3 128.3 411.9 144.3 412.4 131 413 145.4 413.5 131.1 414.1 143.1 414.6 128.9 415.2 142.4 415.7 132.2 416.2 148.8 416.8 131.7 417.3 146.9 417.9 157.2 418.4 175.5 418.4 136.3 418.5 178.1 418.6 136.3 419 162.4 419.5 147.2 420.1 129.5 420.6 147.6 421.1 127.5 421.7 145.6 422.2 134.8 422.8 146.9 423.3 128.1 423.9 145.2 424.4 129.3 425 149 425.5 128.8 426.1 144.6 426.6 128.2 427.1 147.1 427.7 130.1 428.2 144.4 428.8 128.3 429.3 147.7 429.9 127.2 430.4 148.6 431 127 431.5 142.7 432.1 131.7 432.6 145.7 433.1 132.4 433.7 148.6 434.2 132.8 434.8 146.8 435.3 126.6 435.9 142.6 436.4 127 437 148.2 437.5 130.1 438 157.9 438.6 130.9 439.1 144.4 439.7 127.5 440.2 147.3 440.8 129.2 441.3 144.8 441.9 125.4 442.4 154.6 443 128.1 443.5 142.7 444 129.6 444.6 147 445.1 125.9 445.7 146.7 446.2 129.8 446.8 144.2 447.3 130.1 447.9 145.7 448.4 126.8 448.9 143.9 449.5 129.6 450 148.3 450.6 127.5 451.1 145.1 451.7 127.2 452.2 144.3 452.8 129.3 453.3 143.8 453.9 124.9 454.4 143.1 454.9 128.3 455.5 146.2 456 130.1 456.6 144.2 457.1 130.9 457.7 146.8 458.2 132.7 458.8 142.6 459.3 134.5 459.9 146.5 460.4 131.6 460.9 142.6 461.5 129.5 462 150.7 462.6 128.3 463.1 149.3 463.7 130.5 464.2 148.8 464.8 134.1 465.3 148.1 465.8 126.6 466.4 142 466.9 131.9 467.5 144.3 468 130.2 468.6 150.4 469.1 130.6 469.7 149.7 470.2 128.9 470.8 147.1 471.3 135.9 471.8 143 472.4 131.3 472.9 155.4 473.5 131.9 474 144 474.6 128.2 475.1 143.4 475.7 131.1 476.2 143 476.8 128.2 477.3 141.9 477.8 127.8 478.4 149.3 478.9 132 479.5 142.5 480 129.6 480.6 148.5 481.1 126.8 481.7 144.5 482.2 128.9 482.7 142.1 483.3 129.1 483.8 142.5 484.4 135.1 484.9 142.1 485.5 127.6 486 142.2 486.6 134.3 487.1 151.1 487.7 130.5 488.2 145.1 488.7 133 489.3 147 489.8 126.5 490.4 144.6 490.9 130.3 491.5 142.5 492 132.3 492.6 142.8 493.1 133.6 493.6 146.4 494.2 132.6 494.7 145.3 495.3 130.1 495.8 141.8 496.4 130.5 496.9 144.8 497.5 130.7 498 146.4 498.6 130.7 499.1 144.1 499.6 128.6 500.2 148.4 500.7 125.9 501.3 142.3 501.8 129.9 502.4 143.9 502.9 131.6 503.5 143 504 130.9 504.6 143.2 505.1 132.6 505.6 142.1 506.2 132.4 506.7 142.5 507.3 128.9 507.8 147.3 508.4 127.2 508.9 143.6 509.5 133.6 510 142.9 510.5 130.2 511.1 148.9 511.6 127.6 512.2 146.8 512.7 129.2 513.3 142.6 513.8 127.4 514.4 147.7 514.9 135.3 515.5 142.7 516 129 516.5 144.4 517.1 126.9 517.6 142 518.2 131.8 518.7 156 519.3 132.1 519.8 147.8 520.4 128.5 520.9 146.9 521.5 134.3 522 147.9 522.5 126.6 523.1 144.7 523.6 130.7 524.2 146.8 524.7 127.4 525.3 147.5 525.8 129.3 526.4 143.7 526.9 127.3 527.4 147.7 528 133.1 528.5 146.5 529.1 129.8 529.6 147.3 530.2 128.3 530.7 143.3 531.3 127.5 531.8 149.6 532.4 131.3 532.9 145.4 533.4 131.5 534 145.5 534.5 130.9 535.1 142.1 535.6 130.6 536.2 143.8 536.7 133.4 537.3 144.1 537.8 129.3 538.3 145.4 538.9 130.1 539.4 148.8 540 129.3 540.5 145.1 541.1 128.6 541.6 142.2 542.2 136.3 542.7 147.7 543.3 159.1 543.3 136.3 543.4 162.4 543.5 136.3 543.8 154.2 544.3 142.8 544.9 146.2 545.4 133.8 546 145.4 546.5 124.5 547.1 146.3 547.6 128.8 548.2 143.4 548.7 124.8 549.3 159.2 549.8 124.4 550.3 141.8 550.9 127.1 551.4 146.9 552 130.3 552.5 147.7 553.1 131.6 553.6 144.3 554.2 127 554.7 144.5 555.2 133.5 555.8 145.1 556.3 128 556.9 145.7 557.4 129.6 558 143.6 558.5 128.7 559.1 146.1 559.6 129.8 560.2 142.1 560.7 129.7 561.2 144.7 561.8 127 562.3 144.6 562.9 133 563.4 148.3 564 131.2 564.5 145.8 565.1 131.9 565.6 144 566.2 130.6 566.7 145.9 567.2 128.7 567.8 144.5 568.3 130.4 568.9 143.8 569.4 132.2 570 143.1 570.5 131.3 571.1 148.3 571.6 134.3 572.1 143.7 572.7 127.6 573.2 142 573.8 127.2 574.3 147 574.9 125.7 575.4 142.4 576 128.7 576.5 146.5 577.1 129.9 577.6 151 578.1 128.4 578.7 142.3 579.2 131.5 579.8 145.2 580.3 128.7 580.9 143.1 581.4 125.4 582 142.6 582.5 130.5 583 144.4 583.6 132.9 584.1 144.4 584.7 130 585.2 149.3 585.8 126 586.3 144.6 586.9 129.3 587.4 150.7 588 126.4 588.5 144 589 125.7 589.6 144.6 590.1 130.5 590.7 146.5 591.2 131.7 591.8 160.9 592.3 131.8 592.9 145.2 593.4 127.4 594 145.1 594.5 131.7 595 144.8 595.6 126 596.1 146.9 596.7 126.1 597.2 142.9 597.8 126.8 598.3 144.8 598.9 127.6 599.4 145.2 599.9 132.7 600.5 149.7 601 131.2 601.6 143.7 602.1 124.8 602.7 141.8 603.2 129.3 603.8 145.4 604.3 133.4 604.9 145.5 605.4 130.1 605.9 142.9 606.5 130.6 607 142.6 607.6 132.1 608.1 144.8 608.7 134.6 609.2 142.9 609.8 127.9 610.3 143.8 610.9 127.1 611.4 145.8 611.9 131.3 612.5 147.7 613 130.2 613.6 145.1 614.1 130.9 614.7 148.6 615.2 132 615.8 144.3 616.3 131.6 616.8 149.4 617.4 125.1 617.9 148.4 618.5 134.6 619 144.8 619.6 126.1 620.1 146.8 620.7 126.7 621.2 141.8 621.8 128.9 622.3 145.9 622.8 129.9 623.4 148.9 623.9 129.4 624.5 146.4 625 132 625.6 145.6 626.1 134.8 626.7 146 627.2 131.3 627.8 142.9 628.3 133 628.8 145.2 629.4 128.3 629.9 145 630.5 127.6 631 151.5 631.6 124.2 632.1 145.7 632.7 130.8 633.2 146.9 633.7 130.7 634.3 142.7 634.8 127.7 635.4 146.5 635.9 132.3 636.5 145 637 130 637.6 145.3 638.1 127.9 638.7 148.2 639.2 131.3 639.7 146.6 640.3 130 640.8 148.2 641.4 130.6 641.9 144.3 642.5 132.6 643 144.3 643.6 128.5 644.1 148.9 644.6 129.5 645.2 146.7 645.7 129 646.3 149.3 646.8 128.8 647.4 144.8 647.9 126.5 648.5 142.8 649 127.6 649.6 149 650.1 134.7 650.6 143.6 651.2 132.5 651.7 143.6 652.3 128 652.8 142.3 653.4 124.7 653.9 143.8 654.5 134.9 655 143.7 655.6 133 656.1 147.1 656.6 131 657.2 143.5 657.7 126.3 658.3 142.7 658.8 125.8 659.4 146.9 659.9 129 660.5 141.8 661 130.3 661.5 144.6 662.1 131.8 662.6 151.8 663.2 130.8 663.7 143.8 664.3 132.7 664.8 142 665.4 132.3 665.9 144.7 666.3 170.4 666.5 181.2 667.1 185.9 667.9 187 668.6 189.4 669.4 191.1 670.2 193.4 671 196.3 671.7 197.2 672.5 198.6 673.3 201 674.1 202.7 674.9 206.5 675.6 207.5 676.4 211.3 677.2 214 678 216.4 678.8 218.5 679.5 221 680.3 222.4 681.1 225.5 681.9 227.3 682.7 231 683.4 228.1 684.2 226.9 685 226.7 685.8 225.3 686.5 225.1 687.3 226.3 688.1 226.8 688.9 227.6 689.7 228.3 690.4 229.3 691.2 230.7 692 233.2 692.8 235 693.6 237.3 694.3 240.5 695.1 243.8 695.9 244.3 696.7 244 697.4 244 698.2 244.1 699 244.1 699.8 243.3 700.6 243.3 701.3 242.9 702.1 243.9 702.9 245.4 703.7 245.8 704.5 248.1 705.2 248.9 706 249.6 706.8 250.8 707.6 252.2 708.4 253.5 709.1 256.8 709.9 259.3 710.7 260.9 711.5 258.9 712.2 258.1 713 256 713.8 256 714.6 255.4 715.4 256.9 716.1 256.1 716.9 256 717.7 257.4 718.5 257.4 719.3 259.2 720 258.9 720.8 260.2 721.6 261.4 722.4 264.2 723.1 264.9 723.9 267.3 724.7 270.2 725.5 269.9 726.3 269.1 727 267.4 727.8 267 728.6 265.4 729.4 266.3 730.2 265.2 730.9 264.4 731.7 265.3 732.5 265.2 733.3 264.4 734 264.3 734.8 263.8 735.6 264.5 736.4 265.8 737.2 266 737.9 265.5 738.7 267.6 739.5 268 740.3 268.8 741.1 269.2 741.8 270 742.6 271.1 743.4 271.1 744.2 271.1 745 271.1 745.7 271.1 746.5 271.1 747.3 271.1 748.1 271.1" stroke="#2299ff"/>
<path d="M97.7 269 98.4 268 99.2 266.8 100 267.3 100.8 266.1 101.5 266.6 102.3 266.4 103.1 266.6 103.9 266 104.7 265.4 105.4 266.2 106.2 266.1 107 267.3 107.8 267.5 108.6 267.8 109.3 269.4 110.1 270 110.9 271 111.7 270.7 112.5 267.7 113.2 266.4 114 265.6 114.8 264.5 115.6 262.7 116.3 261.9 117.1 261.4 117.9 260 118.7 259.9 119.5 258.9 120.2 259.5 121 259.1 121.8 258.4 122.6 259.3 123.4 258.8 124.1 259.1 124.9 259.9 125.7 260.7 126.5 261.7 127.2 260.4 128 256.5 128.8 254.4 129.6 253.2 130.4 252 131.1 248.9 131.9 247.7 132.7 246.9 133.5 245.3 134.3 245.6 135 244.6 135.8 243.9 136.6 243.7 137.4 243.4 138.1 242.2 138.9 242.7 139.7 243 140.5 243.4 141.3 243.5 142 244.4 142.8 246.7 143.6 243.4 144.4 239.2 145.2 236.1 145.9 233.6 146.7 230.7 147.5 228.3 148.3 227.3 149.1 227 149.8 226.1 150.6 224.4 151.4 224.2 152.2 225.5 152.9 226.1 153.7 227.8 154.5 230.5 155.3 228 156.1 225.3 156.8 222 157.6 219.9 158.4 215.5 159.2 213 160 210.8 160.7 207.5 161.5 204 162.3 202.1 163.1 198.6 163.8 196.3 164.6 193.8 165.4 191.1 166.2 188.8 167 187.6 167.7 185.7 168.5 182.8 169.3 180.8 170.1 179.6 170.9 177.6 171 170.9 171 129.2 171.6 143.6 172.1 128.1 172.6 147.8 173.2 130.4 173.7 144.8 174.3 131.5 174.8 141.8 175.4 131.5 175.9 143.3 176.5 130.1 177 147.6 177.6 128.7 178.1 143.9 178.6 128 179.2 141.9 179.7 124.7 180.3 146.2 180.8 130 181.4 143 181.9 131.4 182.5 143.7 183 131.4 183.6 143 184.1 130.9 184.6 144.5 185.2 131.5 185.7 147.5 186.3 130.2 186.8 143.2 187.4 126.7 187.9 145.7 188.5 130.7 189 148 189.5 132.4 190.1 141.9 190.6 129.3 191.2 144 191.7 130 192.3 151 192.8 129.6 193.4 145.2 193.9 124.2 194.5 150 195 129.9 195.5 150.5 196.1 128.7 196.6 145.1 197.2 132.5 197.7 143.5 198.3 127.3 198.8 145.5 199.4 128.2 199.9 141.8 200.4 131.7 201 141.9 201.5 130.4 202.1 142.7 202.6 131.4 203.2 146 203.7 128.9 204.3 145.8 204.8 136.2 205.4 145.5 205.9 124.4 206.4 145.3 207 128.4 207.5 145 208.1 125.8 208.6 144.9 209.2 134 209.7 142.5 210.3 130.6 210.8 142.1 211.4 128.6 211.9 144.2 212.4 132.5 213 143.3 213.5 129 214.1 144.1 214.6 128.2 215.2 142.2 215.7 129.5 216.3 143.3 216.8 129 217.3 150 217.9 127.7 218.4 143.6 219 133.7 219.5 142.7 220.1 130.2 220.6 144.6 221.2 129.9 221.7 145.2 222.3 131 222.8 146.1 223.3 131.8 223.9 145.2 224.4 127.1 225 146 225.5 131 226.1 143.8 226.6 130.6 227.2 147.4 227.7 127.5 228.3 151.3 228.8 132.1 229.3 142.1 229.9 125.5 230.4 142.2 231 129.9 231.5 150 232.1 129.6 232.6 150.9 233.2 132.5 233.7 142.1 234.2 128.8 234.8 147.6 235.3 131.2 235.9 143.7 236.4 130.2 237 141.8 237.5 129.1 238.1 143.5 238.6 131.8 239.2 148.5 239.7 127.3 240.2 142.7 240.8 131.1 241.3 149.1 241.9 133.2 242.4 147.7 243 127 243.5 148.7 244.1 133.1 244.6 149.9 245.2 129.1 245.7 145.3 246.2 129.3 246.8 148.7 247.3 131.2 247.9 143.7 248.4 131.6 249 144.5 249.5 133.3 250.1 142.7 250.6 130.8 251.1 146.6 251.7 133.6 252.2 145.3 252.8 129.6 253.3 145.7 253.9 127.4 254.4 147.9 255 124.7 255.5 144 256.1 134.8 256.6 142.7 257.1 130.4 257.7 142.6 258.2 128.3 258.8 145.8 259.3 131.6 259.9 145.2 260.4 131.3 261 143 261.5 128.8 262 142.9 262.6 131 263.1 142.2 263.7 124.9 264.2 142.7 264.8 127.8 265.3 143.9 265.9 131.5 266.4 146.3 267 127.7 267.5 146.4 268 130 268.6 145.1 269.1 126.7 269.7 144.5 270.2 130.7 270.8 145.4 271.3 127 271.9 143.7 272.4 134.8 273 153 273.5 127.5 274 142.2 274.6 128.4 275.1 141.8 275.7 133.6 276.2 142.4 276.8 130.6 277.3 148.2 277.9 130.7 278.4 146.9 278.9 131 279.5 146.7 280 126.1 280.6 145.1 281.1 133.2 281.7 146.2 282.2 127.6 282.8 143.5 283.3 129.9 283.9 147.2 284.4 131.1 284.9 142.7 285.5 133.5 286 143.9 286.6 128.4 287.1 142.2 287.7 129.3 288.2 144.4 288.8 124.5 289.3 147.6 289.9 129.1 290.4 142.1 290.9 127.7 291.5 142.9 292 130.3 292.6 142.7 293.1 164.2 293.1 158.1 293.7 160.4 294.4 162.5 295 164.2 295.6 167.2 296.2 168.9 296.9 170.9 297.5 173.4 298.1 174.5 298.7 176.7 299.4 179.5 300 180.2 300.6 183.7 301.2 185.1 301.8 187.5 302.5 188.5 303.1 191.6 303.7 193.9 304.3 194.5 305 197.4 305.6 198.7 306.2 200.8 306.8 202.5 307.5 205.5 308.1 206.7 308.7 209.3 309.3 210.8 309.9 213.8 310.6 216.1 311.2 217.2 311.8 218.7 312.4 221.9 313.1 223.4 313.7 225.4 314.3 228.4 314.9 230.6 315.5 230.2 316.2 230.9 316.8 231.2 317.4 230.3 318 229.9 318.7 229.3 319.3 229.9 319.9 230.1 320.5 228 321.2 227.4 321.8 226.3 322.4 225 323 226.6 323.6 227.4 324.3 230.3 324.9 235 325.5 239 326.1 241.3 326.8 244.9 327.4 244.5 328 243.6 328.6 241.1 329.3 238 329.9 236 330.5 235.3 331.1 239.4 331.7 245.5 332.4 254.2 333 260.6 333.6 262.4 334.2 258.7 334.9 252.5 335.5 244.9 336.1 237.4 336.7 231.5 337.4 229.2 338 230.3 338.6 230.9 339.2 233.3 339.8 234.4 340.5 234.7 341.1 228.5 341.7 225.6 342.3 224.2 343 221.1 343.6 220.1 344.2 216.9 344.8 214.7 345.5 213.3 346.1 210.7 346.7 207.7 347.3 205.7 347.9 203.1 348.6 201.2 349.2 198.3 349.8 196.4 350.4 194.2 351.1 191.4 351.7 189.1 352.3 187.2 352.9 184.2 353.6 182.6 354.2 179.9 354.8 178.2 355.4 175.4 356 173.9 356.7 171.5 357.3 168.7 357.9 158 357.9 125.7 358.5 146.5 359 133.1 359.5 150 360.1 128.7 360.6 144.9 361.2 134.4 361.7 143.2 362.3 130.4 362.8 143 363.4 131.6 363.9 150.4 364.5 126.8 365 148 365.5 134.5 366.1 154 366.6 136.4 367.2 146.7 367.7 126.6 368.3 142.8 368.8 130 369.4 142.7 369.9 129.2 370.5 142.7 371 134.5 371.5 144.4 372.1 132.2 372.6 149.5 373.2 129.8 373.7 144.3 374.3 136 374.8 142.5 375.4 131.4 375.9 144.4 376.4 130.8 377 143.7 377.5 134.7 378.1 141.8 378.6 126.7 379.2 150.5 379.7 130.5 380.3 143 380.8 129.4 381.4 143.4 381.9 132.8 382.4 146.6 383 129.9 383.5 145.1 384.1 128.1 384.6 148.4 385.2 128.5 385.7 146 386.3 133.9 386.8 142.4 387.4 128.6 387.9 146.7 388.4 124.2 389 142.7 389.5 129 390.1 143.9 390.6 132.5 391.2 142.5 391.7 127.7 392.3 143.4 392.8 128.4 393.3 146.6 393.9 129.7 394.4 141.8 395 128.8 395.5 147.1 396.1 126.8 396.6 146.1 397.2 129.7 397.7 141.9 398.3 133.8 398.8 144.5 399.3 126 399.9 143.2 400.4 130.8 401 148.3 401.5 130.3 402.1 146.6 402.6 132 403.2 142.7 403.7 129.2 404.2 146.4 404.8 131.9 405.3 143.5 405.9 129 406.4 147.6 407 125.9 407.5 144.6 408.1 132.9 408.6 142.8 409.2 132.5 409.7 141.9 410.2 132.3 410.8 144.2 411.3 128.8 411.9 141.7 412.4 130.6 413 145.6 413.5 125.7 414.1 147.3 414.6 130.7 415.2 147.8 415.7 131.3 416.2 143.9 416.8 132.5 417.3 142.4 417.9 156.7 418.4 174.5 418.4 136.3 418.5 177 418.6 136.3 419 161.7 419.5 145.7 420.1 131 420.6 147.3 421.1 127.3 421.7 153.3 422.2 126.9 422.8 146.3 423.3 131.5 423.9 144.7 424.4 124.2 425 144.6 425.5 128.8 426.1 141.8 426.6 128 427.1 152.4 427.7 128.8 428.2 144.6 428.8 134.1 429.3 146.7 429.9 126.3 430.4 142.6 431 133.7 431.5 145.1 432.1 134.7 432.6 143.3 433.1 129.9 433.7 147.8 434.2 132.9 434.8 149.4 435.3 129.5 435.9 146 436.4 129.5 437 143.7 437.5 131.4 438 142.3 438.6 126 439.1 142.6 439.7 129.9 440.2 146.9 440.8 130.6 441.3 144 441.9 132.2 442.4 142.7 443 128.6 443.5 142.2 444 128.6 444.6 144.5 445.1 131.4 445.7 147.5 446.2 134.3 446.8 143 447.3 131.9 447.9 143.7 448.4 126.9 448.9 148.5 449.5 126.5 450 146.6 450.6 129 451.1 142.7 451.7 129.9 452.2 148.6 452.8 127.3 453.3 146.5 453.9 135.1 454.4 146.9 454.9 129.8 455.5 142.5 456 128.7 456.6 145.2 457.1 128 457.7 142.8 458.2 132.6 458.8 149.1 459.3 135 459.9 143.7 460.4 130.4 460.9 149.6 461.5 127.2 462 143.8 462.6 124.2 463.1 145.1 463.7 132.1 464.2 151.4 464.8 133.5 465.3 145.3 465.8 130.7 466.4 144.1 466.9 128.9 467.5 147.3 468 128.4 468.6 142.9 469.1 131.2 469.7 142 470.2 131.6 470.8 142.7 471.3 134.8 471.8 152.3 472.4 129.2 472.9 148.3 473.5 131 474 146 474.6 130.8 475.1 150.4 475.7 126.8 476.2 142.9 476.8 130.1 477.3 142.8 477.8 131.1 478.4 150.9 478.9 127.4 479.5 143.7 480 136.5 480.6 149 481.1 132.5 481.7 143.8 482.2 131.2 482.7 143.3 483.3 130.6 483.8 142 484.4 134.3 484.9 143.8 485.5 130.7 486 145.3 486.6 130.9 487.1 146.2 487.7 134.9 488.2 143.9 488.7 132.2 489.3 145.4 489.8 129.3 490.4 142 490.9 129.3 491.5 142.6 492 129.7 492.6 142 493.1 130 493.6 142.8 494.2 129.9 494.7 148.5 495.3 127.2 495.8 145.2 496.4 128.2 496.9 150 497.5 132.1 498 148.1 498.6 131 499.1 143.7 499.6 132.9 500.2 144.7 500.7 127.8 501.3 144.4 501.8 128.1 502.4 145.2 502.9 129.8 503.5 156 504 126.7 504.6 143.7 505.1 126.7 505.6 148.8 506.2 131 506.7 142.4 507.3 128.5 507.8 145.5 508.4 131.1 508.9 143.5 509.5 125.3 510 146.8 510.5 127.2 511.1 157.3 511.6 130.9 512.2 144.8 512.7 127.4 513.3 142.8 513.8 126.8 514.4 146.6 514.9 128.2 515.5 142.6 516 129.3 516.5 141.9 517.1 128.9 517.6 144 518.2 135.1 518.7 150.9 519.3 128.2 519.8 142.7 520.4 132.5 520.9 148.9 521.5 131.2 522 146.6 522.5 132.2 523.1 151.1 523.6 129.7 524.2 144.6 524.7 131.9 525.3 146.3 525.8 133.1 526.4 145.3 526.9 126.5 527.4 144.7 528 127.9 528.5 144.4 529.1 129.6 529.6 147.8 530.2 136.5 530.7 143.2 531.3 125.3 531.8 146.7 532.4 132.4 532.9 151.6 533.4 130.4 534 145.5 534.5 129.1 535.1 147.7 535.6 132.6 536.2 150.8 536.7 133.2 537.3 142.6 537.8 129.5 538.3 152.1 538.9 125.5 539.4 143.4 540 129.9 540.5 143.2 541.1 130.9 541.6 144 542.2 136.3 542.7 153.3 543.3 170.2 543.3 136.3 543.4 175.1 543.5 136.3 543.8 162.9 544.3 146 544.9 146.3 545.4 130.2 546 147.3 546.5 131.6 547.1 144.1 547.6 126.7 548.2 146.9 548.7 131.7 549.3 145 549.8 130.2 550.3 141.8 550.9 129.5 551.4 145.2 552 127.3 552.5 144.4 553.1 129.1 553.6 144.5 554.2 133.5 554.7 147.7 555.2 131 555.8 145 556.3 129.8 556.9 146 557.4 131.9 558 148.6 558.5 127.2 559.1 142.1 559.6 130.5 560.2 145 560.7 128.2 561.2 149.2 561.8 128.5 562.3 147.1 562.9 132.8 563.4 146.3 564 132 564.5 148.9 565.1 130.2 565.6 141.9 566.2 128.2 566.7 146.3 567.2 132.4 567.8 148.3 568.3 129.7 568.9 147.4 569.4 131.2 570 154 570.5 131.5 571.1 145.9 571.6 128.4 572.1 142.9 572.7 130.1 573.2 142.4 573.8 128.5 574.3 144.6 574.9 131.6 575.4 149.3 576 131.9 576.5 148.3 577.1 129.5 577.6 151.4 578.1 129.9 578.7 146.2 579.2 130.5 579.8 143 580.3 130.4 580.9 142.8 581.4 129.3 582 143.4 582.5 128.9 583 144.7 583.6 128.7 584.1 144 584.7 126.1 585.2 146.6 585.8 129.6 586.3 152.4 586.9 131.6 587.4 144.9 588 127.3 588.5 150.6 589 128.4 589.6 146.2 590.1 130.9 590.7 143.2 591.2 130.1 591.8 145.3 592.3 131.2 592.9 148.8 593.4 133 594 142.7 594.5 132.4 595 143.3 595.6 131.5 596.1 146.6 596.7 130.4 597.2 142.3 597.8 129.8 598.3 149.2 598.9 132.6 599.4 145.8 599.9 132.4 600.5 145.5 601 129.9 601.6 143.3 602.1 129.5 602.7 149 603.2 130 603.8 153.4 604.3 128.3 604.9 145.3 605.4 133.9 605.9 143.8 606.5 133.2 607 144.9 607.6 128.6 608.1 142.9 608.7 127.7 609.2 149.2 609.8 129.5 610.3 143.3 610.9 128.5 611.4 147.6 611.9 132.9 612.5 143 613 124.6 613.6 149.9 614.1 131.3 614.7 147.3 615.2 127.7 615.8 142.1 616.3 130.2 616.8 143.1 617.4 128.4 617.9 143.4 618.5 126.5 619 141.9 619.6 130.2 620.1 147.9 620.7 129.3 621.2 145.4 621.8 130 622.3 148.6 622.8 127 623.4 143.2 623.9 130 624.5 149.2 625 128.8 625.6 146.6 626.1 129.8 626.7 141.8 627.2 125.2 627.8 142.9 628.3 131.9 628.8 145 629.4 132.2 629.9 141.9 630.5 129.1 631 143 631.6 126.5 632.1 143.2 632.7 130.6 633.2 149.5 633.7 130.3 634.3 142.5 634.8 127.1 635.4 142.2 635.9 129.2 636.5 143.6 637 130.3 637.6 144.9 638.1 131.5 638.7 144.2 639.2 128.6 639.7 143.5 640.3 133.1 640.8 145.5 641.4 127.6 641.9 144.4 642.5 130.4 643 148.8 643.6 129.7 644.1 147.2 644.6 129 645.2 143.6 645.7 128 646.3 142.1 646.8 128.1 647.4 146.3 647.9 131 648.5 144 649 134.9 649.6 142.3 650.1 130.7 650.6 143.6 651.2 134.2 651.7 142.6 652.3 133.7 652.8 148.9 653.4 131.2 653.9 144.6 654.5 131.5 655 147.8 655.6 131.7 656.1 145.8 656.6 129.1 657.2 142.7 657.7 127.5 658.3 144.2 658.8 132.5 659.4 144.3 659.9 127.1 660.5 144.1 661 127.4 661.5 143.3 662.1 132.9 662.6 143.9 663.2 131.9 663.7 146.9 664.3 127.4 664.8 146.9 665.4 129.9 665.9 152.2 666.3 170.4 667.1 181.2 667.1 181.5 667.9 181.5 668.6 182 669.4 182.2 670.2 183.1 671 185.2 671.7 185.8 672.5 188.5 673.3 190.8 674.1 192.6 674.9 195.2 675.6 195.5 676.4 199.3 677.2 199.7 678 203.3 678.8 205.4 679.5 207.4 680.3 209.6 681.1 212.3 681.9 214.1 682.7 217.3 683.4 219.8 684.2 222.3 685 224.4 685.8 227.5 686.5 228.8 687.3 228.3 688.1 226.1 688.9 227.1 689.7 225.4 690.4 226.4 691.2 224.8 692 226.9 692.8 227.4 693.6 226.6 694.3 227.8 695.1 229.2 695.9 232.4 696.7 234 697.4 236 698.2 237.1 699 238.7 699.8 243.5 700.6 245.5 701.3 244 702.1 243.4 702.9 242.3 703.7 243.7 704.5 243.7 705.2 243.3 706 244.4 706.8 245.1 707.6 245.3 708.4 247 709.1 247.6 709.9 247.4 710.7 250.6 711.5 251.8 712.2 252.5 713 255 713.8 256.6 714.6 258.6 715.4 261 716.1 259.3 716.9 258.2 717.7 256.4 718.5 256.3 719.3 255.2 720 256.6 720.8 256.4 721.6 257.3 722.4 256.1 723.1 257.3 723.9 258.2 724.7 260.2 725.5 259.9 726.3 261.2 727 264.2 727.8 265.9 728.6 266.4 729.4 269.6 730.2 270.5 730.9 268.2 731.7 267.3 732.5 267.7 733.3 266.9 734 265.1 734.8 264.8 735.6 264 736.4 264 737.2 264.8 737.9 264.1 738.7 264.2 739.5 263.6 740.3 263.9 741.1 265.2 741.8 265.9 742.6 266 743.4 267 744.2 267.9 745 269.4 745.7 270.4 746.5 270.7 747.3 271.1 748.1 271.1" stroke="#ff6622"/>
<path d="M97.7 265.8 98.4 266.5 99.2 266.2 100 265.4 100.8 266.3 101.5 266.5 102.3 266 103.1 267.9 103.9 268.1 104.7 269.4 105.4 269.5 106.2 270.4 107 267.5 107.8 266 108.6 264.2 109.3 262.6 110.1 261.1 110.9 259.9 111.7 258.8 112.5 258.4 113.2 258.6 114 257.1 114.8 257.2 115.6 256.8 116.3 256.4 117.1 256.3 117.9 257 118.7 257.6 119.5 257.7 120.2 260.2 121 260.5 121.8 262.6 122.6 259.1 123.4 257.6 124.1 255.6 124.9 253.3 125.7 252.6 126.5 250.4 127.2 249.6 128 248.1 128.8 247.6 129.6 246.8 130.4 246.2 131.1 245.1 131.9 246 132.7 245.5 133.5 245.1 134.3 244 135 243.9 135.8 245.3 136.6 245.6 137.4 246.1 138.1 246.4 138.9 242.8 139.7 240.2 140.5 237 141.3 236 142 233.5 142.8 231.6 143.6 231.2 144.4 229.7 145.2 229.4 145.9 228.5 146.7 227.5 147.5 226.9 148.3 227.4 149.1 226.4 149.8 227.3 150.6 227.4 151.4 229.5 152.2 230 152.9 226.7 153.7 223.6 154.5 220.5 155.3 217.4 156.1 214.9 156.8 211.2 157.6 208.2 158.4 205.6 159.2 203.2 160 200.5 160.7 198.1 161.5 195.9 162.3 192.8 163.1 189.9 163.8 188.2 164.6 185.4 165.4 184 166.2 182.8 167 180 167.7 179.1 168.5 176.7 169.3 173.9 170.1 172.4 170.9 171.3 171 172.9 171 128.6 171.6 142.8 172.1 128.5 172.6 145.2 173.2 124.2 173.7 147.6 174.3 129.5 174.8 148.7 175.4 129.1 175.9 148.1 176.5 131.6 177 143.6 177.6 129.6 178.1 151.9 178.6 130.4 179.2 145.5 179.7 130.2 180.3 146.4 180.8 128.8 181.4 144.5 181.9 131 182.5 143.1 183 125.3 183.6 146.2 184.1 129.6 184.6 146.3 185.2 131 185.7 150.4 186.3 125.4 186.8 148.8 187.4 130.9 187.9 146.2 188.5 127.9 189 149.1 189.5 129.3 190.1 144.5 190.6 130.3 191.2 143.6 191.7 129.9 192.3 141.9 192.8 127.8 193.4 144 193.9 127.9 194.5 144.7 195 126.2 195.5 142.2 196.1 134.5 196.6 148.3 197.2 132.6 197.7 142.4 198.3 132.3 198.8 142.1 199.4 133.1 199.9 141.8 200.4 129.3 201 142.4 201.5 127.8 202.1 144.1 202.6 127.6 203.2 142.5 203.7 129.7 204.3 150 204.8 133.9 205.4 145.5 205.9 129.5 206.4 143.4 207 129.5 207.5 150.1 208.1 129.1 208.6 144.3 209.2 128.8 209.7 143.2 210.3 135 210.8 146.7 211.4 130.6 211.9 144 212.4 130.8 213 144 213.5 133.5 214.1 144.6 214.6 125.6 215.2 148.9 215.7 130.4 216.3 142.1 216.8 128.6 217.3 143.5 217.9 130.8 218.4 142.5 219 131.6 219.5 149.2 220.1 128.1 220.6 150.3 221.2 130.3 221.7 142 222.3 128.2 222.8 141.9 223.3 132.1 223.9 147.1 224.4 133.3 225 146.4 225.5 129.9 226.1 141.7 226.6 129.8 227.2 143.6 227.7 135.7 228.3 151 228.8 128.9 229.3 143.7 229.9 130.2 230.4 142.6 231 134.3 231.5 150 232.1 128.4 232.6 147.8 233.2 131.6 233.7 142.5 234.2 125.1 234.8 147.6 235.3 130.8 235.9 142.2 236.4 129.7 237 146.6 237.5 130.1 238.1 153.5 238.6 131 239.2 143.9 239.7 129.9 240.2 142.1 240.8 131.3 241.3 156.9 241.9 130.6 242.4 144.3 243 130.7 243.5 146.2 244.1 125.5 244.6 146.2 245.2 129.8 245.7 142.7 246.2 126.1 246.8 141.9 247.3 131.9 247.9 141.7 248.4 129.7 249 145.2 249.5 134.4 250.1 147.3 250.6 126.8 251.1 146.8 251.7 129.3 252.2 145.5 252.8 126.2 253.3 145.8 253.9 128.2 254.4 141.9 255 129.6 255.5 145.4 256.1 130.4 256.6 144.8 257.1 134 257.7 149.8 258.2 127.4 258.8 145.5 259.3 125.4 259.9 150.6 260.4 129.6 261 144.6 261.5 127.4 262 141.9 262.6 134.7 263.1 142.5 263.7 126.7 264.2 150.2 264.8 127 265.3 147.6 265.9 131.9 266.4 143.9 267 128.6 267.5 142.3 268 128.7 268.6 148.7 269.1 133.9 269.7 145.9 270.2 125.7 270.8 149.7 271.3 134.8 271.9 150.4 272.4 127.3 273 142.4 273.5 130 274 156.7 274.6 129.1 275.1 145 275.7 130.3 276.2 144.6 276.8 128.6 277.3 144.3 277.9 128.3 278.4 145.4 278.9 128.3 279.5 144.3 280 126.7 280.6 143.7 281.1 132.9 281.7 143.4 282.2 129.7 282.8 142.7 283.3 126 283.9 141.9 284.4 130.1 284.9 143.1 285.5 129.3 286 144.2 286.6 131.4 287.1 144.5 287.7 133.5 288.2 144.8 288.8 132 289.3 142 289.9 129.9 290.4 144.8 290.9 132.2 291.5 144.6 292 129.5 292.6 141.7 293.1 164.2 293.1 166.8 293.7 168.9 294.4 171.9 295 172.7 295.6 175.7 296.2 177.4 296.9 179.2 297.5 182.4 298.1 184.3 298.7 185.1 299.4 188.2 300 189.3 300.6 191.9 301.2 194.2 301.8 195.1 302.5 197.7 303.1 200.7 303.7 202.4 304.3 204.5 305 205.2 305.6 207.8 306.2 210.7 306.8 212.3 307.5 214.9 308.1 217.2 308.7 218.2 309.3 220.5 309.9 222.6 310.6 223.7 311.2 225.9 311.8 227.8 312.4 230.5 313.1 229.6 313.7 229.2 314.3 229.6 314.9 228.9 315.5 229.5 316.2 229.3 316.8 228.9 317.4 227.9 318 229 318.7 231.7 319.3 235.6 319.9 242.2 320.5 246.3 321.2 251.2 321.8 254.4 322.4 253.9 323 250.6 323.6 246.5 324.3 239.8 324.9 235.6 325.5 236.1 326.1 236.2 326.8 240.1 327.4 242.7 328 244.1 328.6 245.3 329.3 243.1 329.9 239.3 330.5 235.8 331.1 232.2 331.7 228.2 332.4 227.4 333 229 333.6 230.3 334.2 232.5 334.9 233.4 335.5 233.3 336.1 233.1 336.7 231.6 337.4 230.8 338 230.3 338.6 228.3 339.2 226.3 339.8 222.9 340.5 221.2 341.1 219.5 341.7 216.6 342.3 213.3 343 211.5 343.6 209.6 344.2 208 344.8 204.4 345.5 202.5 346.1 200.9 346.7 197.7 347.3 195.2 347.9 193.9 348.6 190.3 349.2 188.7 349.8 185.6 350.4 184.7 351.1 181.7 351.7 179.6 352.3 178 352.9 175.7 353.6 173.5 354.2 169.7 354.8 167.3 355.4 166.7 356 163.7 356.7 161.1 357.3 158.9 357.9 158 357.9 132.9 358.5 145.4 359 125.9 359.5 142.2 360.1 124.6 360.6 148.8 361.2 129.5 361.7 148.6 362.3 131.5 362.8 142.6 363.4 130 363.9 147.6 364.5 134.6 365 146.5 365.5 130.6 366.1 146.8 366.6 127.7 367.2 143.5 367.7 130 368.3 144 368.8 126.6 369.4 146 369.9 129.7 370.5 143.4 371 124.2 371.5 151.1 372.1 129.4 372.6 142.9 373.2 130.6 373.7 148.6 374.3 130.4 374.8 150.5 375.4 129.8 375.9 142.1 376.4 128.8 377 144.5 377.5 131.1 378.1 146 378.6 128.7 379.2 146.6 379.7 136.5 380.3 142.2 380.8 131.1 381.4 142.9 381.9 128.8 382.4 148.4 383 133.2 383.5 147.7 384.1 126.1 384.6 141.8 385.2 132.6 385.7 144.3 386.3 126.7 386.8 143.1 387.4 127.9 387.9 142.2 388.4 132.8 389 146 389.5 132 390.1 145.3 390.6 132.3 391.2 147.1 391.7 127.8 392.3 144 392.8 132.2 393.3 149.6 393.9 134.9 394.4 146.6 395 131.1 395.5 144.4 396.1 129.7 396.6 145.5 397.2 129.6 397.7 146.2 398.3 127.7 398.8 142 399.3 124.3 399.9 152.7 400.4 127.1 401 146 401.5 128.1 402.1 145.8 402.6 129.1 403.2 147.8 403.7 127.8 404.2 145.7 404.8 124.2 405.3 151.8 405.9 131.8 406.4 145.4 407 135.6 407.5 143.4 408.1 127.2 408.6 142.1 409.2 129.4 409.7 145.7 410.2 126.8 410.8 143.8 411.3 129.8 411.9 142.4 412.4 128.5 413 149 413.5 130.5 414.1 152 414.6 126 415.2 148.1 415.7 132 416.2 141.9 416.8 131.4 417.3 142 417.9 152.7 418.4 167.1 418.4 136.3 418.5 169.2 418.6 136.3 419 156.8 419.5 142.5 420.1 132.2 420.6 147.8 421.1 129.6 421.7 149 422.2 132.7 422.8 145 423.3 126.6 423.9 147.9 424.4 133.5 425 151.1 425.5 134.3 426.1 146.1 426.6 128.3 427.1 143.2 427.7 130.4 428.2 143 428.8 129.6 429.3 142.4 429.9 125.3 430.4 143.8 431 133.1 431.5 148.1 432.1 129.9 432.6 142.5 433.1 133 433.7 150.2 434.2 129.6 434.8 148.2 435.3 130.7 435.9 143.3 436.4 130.7 437 152.4 437.5 129 438 145.5 438.6 128.7 439.1 143.6 439.7 130.6 440.2 141.9 440.8 131.3 441.3 145.5 441.9 127.8 442.4 142.5 443 131.5 443.5 146 444 130.8 444.6 142.2 445.1 127.6 445.7 143.2 446.2 129.8 446.8 145.1 447.3 126.6 447.9 142.5 448.4 129.9 448.9 143.5 449.5 132.2 450 146.3 450.6 127 451.1 149 451.7 131.1 452.2 142.1 452.8 130.8 453.3 143.5 453.9 128.1 454.4 145.3 454.9 130.9 455.5 143 456 125.2 456.6 146.6 457.1 125.4 457.7 146.3 458.2 133.1 458.8 146.4 459.3 130.9 459.9 147.9 460.4 124.7 460.9 144.7 461.5 130.4 462 147.3 462.6 126.2 463.1 145.7 463.7 128 464.2 142.8 464.8 131.8 465.3 142.7 465.8 127.3 466.4 141.9 466.9 131.5 467.5 149.2 468 130.7 468.6 144.2 469.1 131.7 469.7 150.8 470.2 128.4 470.8 143.7 471.3 131.2 471.8 148.2 472.4 131.7 472.9 144.3 473.5 132.3 474 144.2 474.6 125.7 475.1 146.6 475.7 128.7 476.2 145.1 476.8 132.2 477.3 144.5 477.8 130.1 478.4 144.3 478.9 124.8 479.5 142.7 480 129.8 480.6 144.8 481.1 131.4 481.7 143.1 482.2 125.3 482.7 145.8 483.3 133.6 483.8 144 484.4 126.9 484.9 143.1 485.5 130.3 486 145.6 486.6 128 487.1 151.1 487.7 125.9 488.2 146.2 488.7 129.6 489.3 147 489.8 133.2 490.4 150.1 490.9 132.5 491.5 145 492 131.2 492.6 153.1 493.1 127.4 493.6 147.7 494.2 130.3 494.7 143.7 495.3 129.5 495.8 145.3 496.4 130.7 496.9 142.7 497.5 129.5 498 149.6 498.6 131.6 499.1 145.3 499.6 130.9 500.2 143.2 500.7 125.5 501.3 147.1 501.8 132.4 502.4 143.8 502.9 135.2 503.5 144 504 127.8 504.6 147 505.1 128.2 505.6 143.4 506.2 125.8 506.7 148.2 507.3 130.1 507.8 147.9 508.4 132.7 508.9 142.4 509.5 129.1 510 142.6 510.5 132.5 511.1 145.5 511.6 126.5 512.2 146.9 512.7 130.9 513.3 144.6 513.8 128.8 514.4 148.4 514.9 129.8 515.5 145.9 516 126.8 516.5 149.2 517.1 131.3 517.6 142.1 518.2 128.2 518.7 147.4 519.3 131.7 519.8 149 520.4 130.4 520.9 143.6 521.5 134.3 522 144.6 522.5 132.9 523.1 145.2 523.6 126.6 524.2 146.3 524.7 128.8 525.3 150.5 525.8 134.2 526.4 146.6 526.9 128 527.4 149.7 528 127.6 528.5 149.2 529.1 130.5 529.6 142.4 530.2 128.4 530.7 142.8 531.3 129.3 531.8 145 532.4 126.4 532.9 146 533.4 128.2 534 145.9 534.5 135.2 535.1 148.7 535.6 127.9 536.2 146.6 536.7 130.5 537.3 144.9 537.8 127.6 538.3 147.4 538.9 125.9 539.4 144.7 540 128.5 540.5 143.8 541.1 130.5 541.6 146.8 542.2 136.3 542.7 150.4 543.3 164.5 543.3 136.3 543.4 168.6 543.5 136.3 543.8 158.5 544.3 144.4 544.9 150.1 545.4 132.3 546 141.9 546.5 128.3 547.1 143 547.6 130.1 548.2 148.2 548.7 128.2 549.3 144.3 549.8 130.2 550.3 144.7 550.9 129.7 551.4 144 552 130.7 552.5 147 553.1 133.2 553.6 143.1 554.2 129.1 554.7 143.4 555.2 131 555.8 149.7 556.3 127.5 556.9 147 557.4 133.3 558 148.8 558.5 129.7 559.1 148.3 559.6 131.6 560.2 142.8 560.7 131.3 561.2 146 561.8 130.5 562.3 146.2 562.9 128 563.4 145.9 564 132.5 564.5 141.7 565.1 129.5 565.6 143.3 566.2 131 566.7 143.4 567.2 129.5 567.8 142.6 568.3 128.1 568.9 143 569.4 131.1 570 142.1 570.5 124.6 571.1 141.7 571.6 130.7 572.1 144.3 572.7 132.3 573.2 143.4 573.8 132.6 574.3 141.9 574.9 127.5 575.4 144 576 128.9 576.5 154.6 577.1 127.9 577.6 142.4 578.1 131.7 578.7 142.1 579.2 127.7 579.8 148.6 580.3 127.7 580.9 142.6 581.4 126.5 582 150 582.5 127.7 583 144 583.6 128.7 584.1 147.9 584.7 128.2 585.2 144.6 585.8 132.1 586.3 143.2 586.9 129.5 587.4 147.1 588 129.8 588.5 142.9 589 129.6 589.6 142.6 590.1 129.5 590.7 143.7 591.2 127.9 591.8 145.1 592.3 130.1 592.9 154.3 593.4 129.8 594 143.1 594.5 134.2 595 142.6 595.6 129.8 596.1 143.5 596.7 132.4 597.2 144.4 597.8 125.5 598.3 144.7 598.9 130.2 599.4 147.8 599.9 130.7 600.5 145 601 129.5 601.6 157.7 602.1 129.2 602.7 143.6 603.2 128.2 603.8 147.8 604.3 130.4 604.9 147.7 605.4 130.8 605.9 143.9 606.5 129.1 607 145.1 607.6 130.8 608.1 148.6 608.7 136.5 609.2 142.6 609.8 132 610.3 153.2 610.9 134.6 611.4 152.1 611.9 131.8 612.5 142.6 613 129.5 613.6 145.3 614.1 133.4 614.7 149.3 615.2 131.7 615.8 147.6 616.3 127.4 616.8 143.5 617.4 129.8 617.9 145.6 618.5 131.5 619 143.1 619.6 127.6 620.1 143.4 620.7 132.3 621.2 143.9 621.8 129.2 622.3 144.9 622.8 124.2 623.4 145.3 623.9 130.4 624.5 145.6 625 127.2 625.6 147.4 626.1 129.5 626.7 142.5 627.2 127.3 627.8 144.2 628.3 127.1 628.8 142 629.4 129.9 629.9 148.7 630.5 132.7 631 148.9 631.6 125.9 632.1 143.3 632.7 129.7 633.2 146.6 633.7 131 634.3 145.2 634.8 128.8 635.4 142.2 635.9 131.4 636.5 156.1 637 133 637.6 142.8 638.1 126.7 638.7 143.9 639.2 127 639.7 150 640.3 130.9 640.8 145.3 641.4 132.7 641.9 144.3 642.5 131 643 149.2 643.6 127.9 644.1 144 644.6 125.7 645.2 144.4 645.7 132.8 646.3 145.2 646.8 124.2 647.4 143.1 647.9 132.3 648.5 146 649 133.6 649.6 147.2 650.1 128.4 650.6 147.6 651.2 125.1 651.7 144.1 652.3 128.1 652.8 148.5 653.4 130.2 653.9 144.2 654.5 131.3 655 143.3 655.6 129.5 656.1 141.9 656.6 128.6 657.2 142.5 657.7 131 658.3 142.6 658.8 130.5 659.4 143.2 659.9 129.3 660.5 143.8 661 131 661.5 142.6 662.1 129.1 662.6 147.3 663.2 131 663.7 147.9 664.3 126.6 664.8 145.2 665.4 126 665.9 150.4 666.3 170.4 666.5 181.2 667.1 183.3 667.9 185.2 668.6 187 669.4 188.8 670.2 188.5 671 191.8 671.7 192.7 672.5 194.9 673.3 196.8 674.1 199.6 674.9 201.7 675.6 204.2 676.4 206.8 677.2 207.9 678 211.1 678.8 212.5 679.5 215.8 680.3 218.3 681.1 220.6 681.9 223.6 682.7 225.4 683.4 227.2 684.2 231.4 685 227.9 685.8 228.9 686.5 228.6 687.3 228.9 688.1 229.5 688.9 229.5 689.7 232.3 690.4 232.9 691.2 234.8 692 237 692.8 239.6 693.6 242.2 694.3 245.1 695.1 242.7 695.9 241.3 696.7 241.7 697.4 241.9 698.2 241.2 699 240.3 699.8 241.3 700.6 241.6 701.3 242.6 702.1 242 702.9 243.4 703.7 245 704.5 246.3 705.2 248.8 706 249.7 706.8 250.8 707.6 253.7 708.4 256.3 709.1 260.9 709.9 258.4 710.7 256.1 711.5 255.3 712.2 254.9 713 254.6 713.8 253.9 714.6 253.6 715.4 253.2 716.1 254.5 716.9 253.6 717.7 255.7 718.5 255.8 719.3 256.9 720 258.2 720.8 259.7 721.6 261.8 722.4 265.3 723.1 267.5 723.9 271.1 724.7 269.1 725.5 269.1 726.3 267.5 727 266.1 727.8 265.9 728.6 264.8 729.4 265.3 730.2 264.2 730.9 264.4 731.7 264.8 732.5 264.6 733.3 263.9 734 265.3 734.8 264.2 735.6 264.7 736.4 265.2 737.2 266.3 737.9 265.5 738.7 267.4 739.5 267.7 740.3 266.6 741.1 269.4 741.8 268.3 742.6 270.2 743.4 271.1 744.2 271.1 745 271.1 745.7 271.1 746.5 271.1 747.3 271.1 748.1 271.1" stroke="#55dd00"/>
<path d="M97.7 266.4 98.4 266.4 99.2 266.8 100 265.8 100.8 267.5 101.5 267.1 102.3 269.2 103.1 270.4 103.9 270.8 104.7 267.1 105.4 265.4 106.2 263.9 107 262.1 107.8 260.3 108.6 259.6 109.3 258.6 110.1 257.3 110.9 256.3 111.7 256.4 112.5 255.4 113.2 255.2 114 255.2 114.8 255 115.6 255.5 116.3 257.1 117.1 257.7 117.9 258.3 118.7 260.3 119.5 261.4 120.2 258.9 121 257.7 121.8 256.3 122.6 254.7 123.4 252.9 124.1 252.2 124.9 251.6 125.7 249.4 126.5 249.7 127.2 247.6 128 247.1 128.8 247 129.6 245.8 130.4 246.6 131.1 246.1 131.9 246.3 132.7 246.1 133.5 245.8 134.3 246.6 135 246.2 135.8 245.9 136.6 243.1 137.4 240.9 138.1 239.1 138.9 236.5 139.7 236 140.5 233.7 141.3 233.4 142 231.4 142.8 231 143.6 230.5 144.4 228.8 145.2 229.4 145.9 227.9 146.7 228.3 147.5 228.5 148.3 228.8 149.1 227.9 149.8 229.8 150.6 230 151.4 229.6 152.2 225.8 152.9 222.7 153.7 219.4 154.5 216.7 155.3 213.6 156.1 210.7 156.8 207.5 157.6 204.5 158.4 202.4 159.2 198.9 160 196.2 160.7 194.3 161.5 191.8 162.3 189.3 163.1 187.2 163.8 185.1 164.6 184.2 165.4 181.5 166.2 179 167 177.6 167.7 175.6 168.5 174.7 169.3 173 170.1 171.1 170.9 169.2 171 171.5 171 130.2 171.6 144 172.1 129.8 172.6 151.5 173.2 131.1 173.7 142.9 174.3 133.6 174.8 152.6 175.4 127.9 175.9 149.5 176.5 127.3 177 151.4 177.6 129.7 178.1 142.6 178.6 128.8 179.2 142.9 179.7 129 180.3 144.4 180.8 132.7 181.4 145.4 181.9 132.4 182.5 141.9 183 127.5 183.6 144.1 184.1 128.1 184.6 144.6 185.2 126.9 185.7 143 186.3 126.5 186.8 144.8 187.4 129.6 187.9 149.8 188.5 128.3 189 149.2 189.5 126.1 190.1 145.2 190.6 128.8 191.2 144.9 191.7 128.3 192.3 143.4 192.8 133.2 193.4 147.2 193.9 129.3 194.5 144.8 195 131.2 195.5 149.2 196.1 126.6 196.6 144.9 197.2 130.1 197.7 146.2 198.3 131.2 198.8 146.6 199.4 128.6 199.9 147.1 200.4 128 201 144 201.5 129.7 202.1 151.7 202.6 129 203.2 142.4 203.7 133.4 204.3 153 204.8 131.4 205.4 146.9 205.9 132.6 206.4 148.2 207 127.9 207.5 148.1 208.1 128 208.6 147.9 209.2 126.7 209.7 145.1 210.3 129 210.8 142.3 211.4 127.8 211.9 145.8 212.4 128.2 213 142.6 213.5 130.6 214.1 142.1 214.6 129.8 215.2 144.2 215.7 132.3 216.3 146 216.8 129.5 217.3 153.8 217.9 131.6 218.4 150.9 219 124.2 219.5 151 220.1 128.8 220.6 144.3 221.2 128.8 221.7 143.8 222.3 128.7 222.8 142.8 223.3 132.7 223.9 145.3 224.4 132.6 225 143.9 225.5 128.2 226.1 143.6 226.6 127.6 227.2 148.8 227.7 130.6 228.3 146.8 228.8 130.9 229.3 142.6 229.9 130.2 230.4 148 231 129.5 231.5 143 232.1 129.8 232.6 142.1 233.2 126.5 233.7 144.8 234.2 129.4 234.8 143.4 235.3 128.4 235.9 144.2 236.4 133.5 237 142.9 237.5 129.6 238.1 142.1 238.6 133 239.2 145.3 239.7 130.7 240.2 149 240.8 129.1 241.3 150.3 241.9 128.1 242.4 143.2 243 128.3 243.5 156.8 244.1 127.3 244.6 142.3 245.2 126.5 245.7 146.2 246.2 127.4 246.8 141.8 247.3 125.8 247.9 141.8 248.4 129.2 249 144.6 249.5 131.3 250.1 147 250.6 133.2 251.1 145.6 251.7 131.8 252.2 145.7 252.8 126.3 253.3 144.8 253.9 128.3 254.4 143.6 255 130 255.5 143.6 256.1 126.7 256.6 145.7 257.1 130.5 257.7 144.5 258.2 129.9 258.8 144.4 259.3 128.6 259.9 142.7 260.4 127.8 261 143.5 261.5 128.8 262 146 262.6 129.4 263.1 143.3 263.7 131.8 264.2 148 264.8 134.3 265.3 145.1 265.9 127.3 266.4 150.6 267 132.5 267.5 150.6 268 124.2 268.6 146.1 269.1 133.3 269.7 144.5 270.2 132.4 270.8 143.7 271.3 129 271.9 142.9 272.4 127.3 273 143.8 273.5 133.2 274 142.5 274.6 125.7 275.1 146.4 275.7 131.9 276.2 144.7 276.8 129.3 277.3 143 277.9 129 278.4 143 278.9 125.4 279.5 141.7 280 131.9 280.6 144.3 281.1 125.6 281.7 150.4 282.2 128.7 282.8 143 283.3 131.8 283.9 143 284.4 128.2 284.9 143.9 285.5 131.6 286 145.8 286.6 127.6 287.1 147.6 287.7 134.2 288.2 143.3 288.8 127.2 289.3 142.7 289.9 126 290.4 148.3 290.9 127.6 291.5 154 292 132.7 292.6 146.2 293.1 164.2 293.1 170.4 293.7 172.4 294.4 174.7 295 177.3 295.6 178.5 296.2 180.9 296.9 183.4 297.5 185.3 298.1 187.2 298.7 189.3 299.4 190.7 300 192.7 300.6 195.9 301.2 196.3 301.8 200.1 302.5 200.9 303.1 202.5 303.7 205.4 304.3 207.4 305 209.6 305.6 211.6 306.2 212.8 306.8 214.6 307.5 217.7 308.1 218.7 308.7 222.2 309.3 223.1 309.9 226.5 310.6 227 311.2 231.2 311.8 231.1 312.4 229.3 313.1 228.7 313.7 229 314.3 229.1 314.9 227.8 315.5 228.6 316.2 229.2 316.8 230.6 317.4 232.5 318 234.5 318.7 238 319.3 239.8 319.9 241.4 320.5 241.3 321.2 240 321.8 239.2 322.4 236.4 323 236.4 323.6 236.2 324.3 237.6 324.9 242.8 325.5 246.7 326.1 250 326.8 251.5 327.4 249.3 328 244.5 328.6 237.8 329.3 232 329.9 229.4 330.5 227.1 331.1 226.7 331.7 229 332.4 231.4 333 233.2 333.6 234.6 334.2 234 334.9 233 335.5 232.7 336.1 231.1 336.7 231.7 337.4 228.4 338 225.7 338.6 224.2 339.2 221.3 339.8 218.7 340.5 217.4 341.1 215.6 341.7 213 342.3 210 343 207.3 343.6 206.2 344.2 202.5 344.8 202 345.5 198.1 346.1 196.3 346.7 193.3 347.3 191.4 347.9 188.9 348.6 186.5 349.2 184.5 349.8 183.2 350.4 180.5 351.1 178.1 351.7 176.5 352.3 172.7 352.9 171.6 353.6 169.6 354.2 167.1 354.8 165.1 355.4 162.7 356 158.9 356.7 157.9 357.3 155.9 357.9 158 357.9 127.3 358.5 147.6 359 128.2 359.5 145.6 360.1 126.7 360.6 145.2 361.2 130 361.7 144.6 362.3 128.7 362.8 150.1 363.4 130 363.9 146.6 364.5 130 365 148.3 365.5 131.3 366.1 143.5 366.6 129.5 367.2 141.7 367.7 131.4 368.3 148.8 368.8 128.7 369.4 144.6 369.9 128.5 370.5 142.2 371 131.5 371.5 143.6 372.1 127.3 372.6 147.1 373.2 129.5 373.7 142.6 374.3 125.6 374.8 142.1 375.4 129.3 375.9 142.9 376.4 130.5 377 144.1 377.5 127.8 378.1 144.1 378.6 132.6 379.2 147.8 379.7 129.9 380.3 142.1 380.8 131.9 381.4 146.6 381.9 133.7 382.4 147.2 383 128.4 383.5 147.7 384.1 127.9 384.6 147.6 385.2 132.5 385.7 149.6 386.3 131.2 386.8 142.2 387.4 136.2 387.9 144.6 388.4 130.9 389 149.8 389.5 129.2 390.1 144.7 390.6 130 391.2 144.7 391.7 132.8 392.3 141.9 392.8 128.6 393.3 142.6 393.9 128.7 394.4 145.6 395 128.7 395.5 143 396.1 126.3 396.6 142.8 397.2 130.1 397.7 146.9 398.3 131.1 398.8 152.6 399.3 129.8 399.9 148.9 400.4 132.1 401 142.6 401.5 131.7 402.1 151 402.6 130.1 403.2 144.1 403.7 130.4 404.2 144.8 404.8 125.1 405.3 147.5 405.9 130.3 406.4 145.7 407 128.6 407.5 146 408.1 132.7 408.6 142.7 409.2 130.6 409.7 152.3 410.2 128.1 410.8 141.9 411.3 133 411.9 145.7 412.4 127.9 413 142.6 413.5 133.5 414.1 142.7 414.6 131.4 415.2 144 415.7 127.7 416.2 143 416.8 126.4 417.3 142.5 417.9 157.2 418.4 175.6 418.4 136.3 418.5 178.2 418.6 136.3 419 162.5 419.5 150.7 420.1 128.2 420.6 147 421.1 132 421.7 156.1 422.2 127.5 422.8 142 423.3 131.4 423.9 143.3 424.4 133.3 425 145.1 425.5 128.5 426.1 143.8 426.6 135.6 427.1 143.5 427.7 126.4 428.2 148.1 428.8 126.3 429.3 143.8 429.9 128.5 430.4 142.7 431 130.4 431.5 143.4 432.1 131 432.6 143 433.1 127.7 433.7 142.9 434.2 128.3 434.8 146.3 435.3 134.4 435.9 147.4 436.4 133.5 437 153.4 437.5 129.9 438 148.3 438.6 132.3 439.1 142.3 439.7 131.8 440.2 144.3 440.8 129.8 441.3 148.1 441.9 127.4 442.4 144 443 130.5 443.5 146 444 133 444.6 145.8 445.1 130.2 445.7 142.8 446.2 129.7 446.8 145 447.3 128.9 447.9 144.1 448.4 125.5 448.9 145.3 449.5 129.1 450 146.5 450.6 130.8 451.1 148.4 451.7 132 452.2 144.4 452.8 132.8 453.3 142.9 453.9 130.3 454.4 147 454.9 133.8 455.5 142 456 138.8 456.6 146.6 457.1 132 457.7 142.2 458.2 127.3 458.8 144.1 459.3 128.4 459.9 145.8 460.4 129.1 460.9 144.9 461.5 127 462 147.6 462.6 131.7 463.1 147 463.7 132.6 464.2 143.2 464.8 125.2 465.3 143.8 465.8 129.4 466.4 143.7 466.9 126.4 467.5 149 468 131.6 468.6 142.4 469.1 132.5 469.7 150.3 470.2 134.7 470.8 147.4 471.3 129.8 471.8 143.1 472.4 130.3 472.9 143.6 473.5 134.2 474 147.3 474.6 130.8 475.1 144.2 475.7 127.9 476.2 146.2 476.8 126.3 477.3 146.8 477.8 126.2 478.4 143.2 478.9 128.5 479.5 145.3 480 137.9 480.6 142.6 481.1 126.8 481.7 145.6 482.2 132.9 482.7 148.4 483.3 132.4 483.8 151.3 484.4 130.8 484.9 142.8 485.5 130.1 486 144 486.6 130.3 487.1 143.3 487.7 127.5 488.2 142.7 488.7 131.4 489.3 145.1 489.8 129.5 490.4 142.3 490.9 131.9 491.5 145.5 492 130.4 492.6 146.2 493.1 131.8 493.6 145.6 494.2 130.6 494.7 144.1 495.3 130.6 495.8 151 496.4 130.8 496.9 149.4 497.5 129.6 498 149.7 498.6 128.3 499.1 150.4 499.6 127.1 500.2 146.9 500.7 129.8 501.3 143.8 501.8 129.8 502.4 142.2 502.9 130.7 503.5 141.8 504 128.5 504.6 142.8 505.1 124.9 505.6 143.9 506.2 131.6 506.7 143.5 507.3 125.8 507.8 142.6 508.4 132.4 508.9 146 509.5 126.9 510 146.5 510.5 126 511.1 146.3 511.6 131.6 512.2 143.9 512.7 129.7 513.3 149.1 513.8 132.7 514.4 143 514.9 128.8 515.5 142.7 516 131.7 516.5 146.7 517.1 129.8 517.6 146 518.2 129.2 518.7 147.3 519.3 132.5 519.8 142 520.4 129.6 520.9 143.2 521.5 129.1 522 147.1 522.5 131 523.1 143.3 523.6 129.4 524.2 143.1 524.7 131.9 525.3 148.8 525.8 127.3 526.4 147.2 526.9 134.2 527.4 145.1 528 135.8 528.5 142.2 529.1 130.7 529.6 143 530.2 127.9 530.7 144.6 531.3 129.2 531.8 149.8 532.4 126 532.9 143.6 533.4 129.7 534 143.1 534.5 127.2 535.1 142.3 535.6 132.5 536.2 144.5 536.7 126.6 537.3 158.3 537.8 132.1 538.3 144.6 538.9 126.1 539.4 146.6 540 129.2 540.5 143.7 541.1 128.9 541.6 146 542.2 136.3 542.7 154.6 543.3 172.9 543.3 136.3 543.4 178.2 543.5 136.3 543.8 165.1 544.3 146.8 544.9 143.3 545.4 131.4 546 145.4 546.5 129.3 547.1 144.9 547.6 126.5 548.2 143.9 548.7 131 549.3 142.5 549.8 128.3 550.3 145.7 550.9 129.7 551.4 146.3 552 127.4 552.5 155.4 553.1 129.7 553.6 144.4 554.2 132.8 554.7 144.5 555.2 128.3 555.8 144.4 556.3 128.1 556.9 148 557.4 128 558 141.9 558.5 127.2 559.1 145.4 559.6 127.5 560.2 149.1 560.7 130.6 561.2 151.6 561.8 127 562.3 144 562.9 133.7 563.4 141.7 564 129.1 564.5 145.5 565.1 137 565.6 142.2 566.2 129.2 566.7 148.6 567.2 132.3 567.8 149.1 568.3 130.2 568.9 149.8 569.4 128 570 146.2 570.5 124.8 571.1 145.3 571.6 132.8 572.1 150.6 572.7 133.2 573.2 142 573.8 125 574.3 146.1 574.9 128.4 575.4 144.3 576 126.9 576.5 143.2 577.1 129.2 577.6 143 578.1 132.8 578.7 146.6 579.2 131.1 579.8 153.1 580.3 127.9 580.9 146.2 581.4 130.8 582 144.8 582.5 129.6 583 141.9 583.6 127.6 584.1 143.1 584.7 132.6 585.2 150 585.8 130.5 586.3 148.8 586.9 133.8 587.4 143.3 588 132.5 588.5 142.7 589 129 589.6 142.2 590.1 132.5 590.7 143 591.2 132.8 591.8 143 592.3 131.5 592.9 148.2 593.4 125.3 594 142.3 594.5 130.6 595 145 595.6 132.7 596.1 147.5 596.7 130.8 597.2 145.1 597.8 126.2 598.3 143.3 598.9 129.5 599.4 147.8 599.9 126.7 600.5 149 601 133.5 601.6 144.9 602.1 131.7 602.7 143.1 603.2 132.2 603.8 147.3 604.3 131.6 604.9 145.2 605.4 129.2 605.9 142.6 606.5 129.7 607 148.1 607.6 132.9 608.1 144.9 608.7 130.8 609.2 149.1 609.8 126.8 610.3 145.1 610.9 128.8 611.4 149 611.9 130.3 612.5 142.9 613 130 613.6 150.7 614.1 132 614.7 145.7 615.2 131.4 615.8 145.8 616.3 128.8 616.8 145 617.4 126.8 617.9 146.3 618.5 128 619 141.8 619.6 131.5 620.1 144.7 620.7 129.8 621.2 146 621.8 131.6 622.3 142.3 622.8 128 623.4 145.1 623.9 130.2 624.5 146.6 625 127.9 625.6 149.3 626.1 133 626.7 144.1 627.2 131.9 627.8 146.4 628.3 129.5 628.8 144.9 629.4 128.1 629.9 148.3 630.5 129.3 631 148.5 631.6 130.5 632.1 149.8 632.7 128.1 633.2 145.6 633.7 129 634.3 142.8 634.8 130.5 635.4 142 635.9 131.4 636.5 142.1 637 134 637.6 143.3 638.1 129.9 638.7 148.8 639.2 129.5 639.7 143 640.3 130.6 640.8 141.8 641.4 134.9 641.9 149.8 642.5 130.6 643 145.6 643.6 126.8 644.1 143 644.6 129 645.2 149.7 645.7 126.6 646.3 144.1 646.8 132.9 647.4 145.7 647.9 125.9 648.5 146.9 649 134.1 649.6 145.1 650.1 129.8 650.6 144.5 651.2 131.3 651.7 145.8 652.3 125.9 652.8 147.5 653.4 124.2 653.9 146.3 654.5 129.7 655 149.7 655.6 129.7 656.1 143 656.6 132.1 657.2 142.6 657.7 131.5 658.3 148.6 658.8 129.1 659.4 142.9 659.9 128.4 660.5 145.7 661 130.7 661.5 141.9 662.1 131 662.6 145.7 663.2 127.2 663.7 153.6 664.3 131.3 664.8 146 665.4 130.2 665.9 142.2 666.3 170.4 666.5 181.2 667.1 184.8 667.9 186.6 668.6 187.6 669.4 189.7 670.2 191.5 671 193.8 671.7 195.5 672.5 198.8 673.3 200.3 674.1 203.1 674.9 203.5 675.6 207.4 676.4 209.3 677.2 211.9 678 214 678.8 215 679.5 218 680.3 220.6 681.1 222.9 681.9 226.9 682.7 229.3 683.4 228.3 684.2 226.2 685 225.5 685.8 225.6 686.5 225.8 687.3 224.8 688.1 225 688.9 226.7 689.7 225.3 690.4 226.9 691.2 229 692 229.5 692.8 230.1 693.6 233.1 694.3 234.1 695.1 237.6 695.9 240 696.7 242.4 697.4 246.3 698.2 243.8 699 244 699.8 244.5 700.6 242.9 701.3 243.5 702.1 245.1 702.9 245.4 703.7 244.4 704.5 246.8 705.2 247.9 706 248.1 706.8 248.2 707.6 249.6 708.4 252.7 709.1 253.8 709.9 254.8 710.7 256.5 711.5 258.5 712.2 261.4 713 258.7 713.8 258.7 714.6 258.2 715.4 257.9 716.1 256 716.9 256.5 717.7 257.4 718.5 256.8 719.3 257.6 720 258.5 720.8 260.2 721.6 259.8 722.4 261.6 723.1 262.4 723.9 264 724.7 266 725.5 266.8 726.3 269 727 271 727.8 269.1 728.6 267.4 729.4 267.7 730.2 266.9 730.9 266.6 731.7 264.3 732.5 263.7 733.3 264.7 734 265.2 734.8 264.7 735.6 264.2 736.4 264.7 737.2 264.8 737.9 266.5 738.7 265.6 739.5 267.7 740.3 266.4 741.1 267.7 741.8 269.7 742.6 271.1 743.4 270.7 744.2 271.1 745 271.1 745.7 271.1 746.5 271.1 747.3 271.1 748.1 271.1" stroke="#00ffff"/>
<path d="M97.7 267.1 98.4 267 99.2 266.4 100 266.6 100.8 265.4 101.5 265.3 102.3 265.9 103.1 265.8 103.9 266.2 104.7 265.8 105.4 267.2 106.2 268 107 268.5 107.8 268.2 108.6 269.9 109.3 272.6 110.1 269.8 110.9 267.8 111.7 265.5 112.5 263.9 113.2 262.9 114 261.6 114.8 261.1 115.6 260.4 116.3 259.7 117.1 258.7 117.9 259 118.7 258.9 119.5 258.7 120.2 258.7 121 258.2 121.8 258.3 122.6 258.8 123.4 260.5 124.1 261.3 124.9 261.9 125.7 259.2 126.5 256.5 127.2 254.8 128 253.4 128.8 251.5 129.6 249 130.4 247.7 131.1 247.9 131.9 246.1 132.7 244.5 133.5 244.7 134.3 244.4 135 243.7 135.8 243.6 136.6 242.4 137.4 243.7 138.1 243.4 138.9 243.4 139.7 244.1 140.5 245.1 141.3 246.7 142 242.1 142.8 238.8 143.6 236 144.4 233.7 145.2 231.4 145.9 228.9 146.7 228.1 147.5 226.6 148.3 226.4 149.1 226.3 149.8 225.6 150.6 225.9 151.4 225.9 152.2 227.1 152.9 229.5 153.7 230.1 154.5 225.8 155.3 222.8 156.1 220.2 156.8 217.6 157.6 213.4 158.4 211.1 159.2 207.2 160 205.2 160.7 202.9 161.5 199.6 162.3 197.8 163.1 194.1 163.8 192.2 164.6 189.8 165.4 187.2 166.2 186.4 167 183 167.7 181.9 168.5 179.9 169.3 178.2 170.1 176.4 170.9 173.6 171 171.8 171 128.2 171.6 144.1 172.1 129.7 172.6 144.6 173.2 131.8 173.7 143.7 174.3 129.1 174.8 144.7 175.4 129.5 175.9 148.4 176.5 129.1 177 147.3 177.6 130.5 178.1 142.2 178.6 130.4 179.2 144.3 179.7 130.4 180.3 144.3 180.8 129.4 181.4 143.7 181.9 128.7 182.5 142.9 183 134.3 183.6 144.8 184.1 127 184.6 143.1 185.2 133.8 185.7 143.6 186.3 130.9 186.8 145 187.4 129.9 187.9 149.1 188.5 133.4 189 143.4 189.5 132.5 190.1 145.7 190.6 135.5 191.2 159.6 191.7 130.5 192.3 143.5 192.8 131.9 193.4 146.7 193.9 126.1 194.5 150.8 195 131.4 195.5 147.4 196.1 130 196.6 145.5 197.2 131 197.7 142.9 198.3 131.2 198.8 143.1 199.4 127 199.9 145.5 200.4 128.2 201 143.9 201.5 130.5 202.1 147.1 202.6 131.2 203.2 151.2 203.7 133.3 204.3 142.7 204.8 133.2 205.4 149.2 205.9 133.4 206.4 148.9 207 130.4 207.5 143.3 208.1 132 208.6 151.5 209.2 132.7 209.7 144.8 210.3 129.1 210.8 147.2 211.4 126.9 211.9 146.9 212.4 129.9 213 144.9 213.5 133.2 214.1 143.5 214.6 129.8 215.2 145.6 215.7 131.2 216.3 146.8 216.8 128.5 217.3 149.9 217.9 134 218.4 144.3 219 124.5 219.5 147.4 220.1 129.4 220.6 144.9 221.2 131.1 221.7 141.8 222.3 130.5 222.8 143.1 223.3 133 223.9 143.8 224.4 131.8 225 143 225.5 127.1 226.1 144.2 226.6 130.3 227.2 144.3 227.7 130.5 228.3 147.4 228.8 127.2 229.3 142.6 229.9 130.9 230.4 144 231 129.9 231.5 143.7 232.1 130.9 232.6 145.2 233.2 131.7 233.7 142.5 234.2 127.8 234.8 154.1 235.3 130.8 235.9 146.6 236.4 131.4 237 146.1 237.5 128.8 238.1 147.4 238.6 132.9 239.2 142.6 239.7 125.5 240.2 141.9 240.8 130.2 241.3 153.8 241.9 131.8 242.4 149.5 243 128.1 243.5 146.1 244.1 127.9 244.6 150.1 245.2 126.5 245.7 142.1 246.2 127.7 246.8 144.5 247.3 131.9 247.9 142.7 248.4 131.6 249 141.8 249.5 131.4 250.1 143.9 250.6 128.1 251.1 142.7 251.7 130.3 252.2 143.7 252.8 133.1 253.3 152.1 253.9 129.2 254.4 150.5 255 129.9 255.5 145.6 256.1 127.7 256.6 141.8 257.1 128.6 257.7 144.9 258.2 132.3 258.8 143.5 259.3 128.7 259.9 144.8 260.4 130.2 261 151.4 261.5 130.8 262 152.9 262.6 128 263.1 143.5 263.7 129.5 264.2 152.4 264.8 132.1 265.3 153.6 265.9 128.8 266.4 142.5 267 128.6 267.5 148 268 128.5 268.6 146.9 269.1 125.9 269.7 144.7 270.2 127.4 270.8 145.6 271.3 127.4 271.9 147.1 272.4 126.7 273 144.4 273.5 131.6 274 142.1 274.6 129 275.1 144.6 275.7 130.9 276.2 153.6 276.8 124.8 277.3 144.5 277.9 129.5 278.4 141.8 278.9 134.1 279.5 142.3 280 130.8 280.6 142.7 281.1 129 281.7 143.3 282.2 128.5 282.8 155.7 283.3 129.8 283.9 147.8 284.4 127.3 284.9 153.5 285.5 124.2 286 151.6 286.6 132.7 287.1 143.4 287.7 130.8 288.2 143.6 288.8 129.5 289.3 143.7 289.9 133.2 290.4 147.1 290.9 126.2 291.5 141.9 292 127.8 292.6 143.5 293.1 164.2 293.1 162.3 293.7 164.3 294.4 166.2 295 168.2 295.6 171.9 296.2 173.2 296.9 176 297.5 176.8 298.1 180.1 298.7 181.9 299.4 183.3 300 186 300.6 188.2 301.2 188.8 301.8 190.9 302.5 194.3 303.1 195.5 303.7 197.1 304.3 199.2 305 201.1 305.6 203 306.2 205.4 306.8 207.7 307.5 210.2 308.1 212.6 308.7 214.3 309.3 216.1 309.9 218.7 310.6 219.1 311.2 222 311.8 224.6 312.4 226.6 313.1 228.4 313.7 231.3 314.3 231.4 314.9 230.2 315.5 230.5 316.2 229.4 316.8 230.1 317.4 228.5 318 228.8 318.7 228.6 319.3 227.4 319.9 226.2 320.5 225.4 321.2 226.3 321.8 228.5 322.4 231.2 323 233 323.6 236.1 324.3 237.7 324.9 239.2 325.5 238.4 326.1 238.4 326.8 237.2 327.4 236.8 328 236.2 328.6 236.4 329.3 238.2 329.9 239.3 330.5 242.6 331.1 243.9 331.7 242 332.4 240.9 333 237.5 333.6 234.4 334.2 230.6 334.9 229.7 335.5 229.2 336.1 230.7 336.7 230.9 337.4 233.5 338 234.1 338.6 232.5 339.2 230.9 339.8 228.7 340.5 226.1 341.1 224.2 341.7 221.4 342.3 219.9 343 217.6 343.6 214.4 344.2 212.6 344.8 210.8 345.5 207.8 346.1 204.4 346.7 203.5 347.3 199.9 347.9 198.7 348.6 195.7 349.2 193.4 349.8 191.6 350.4 188.6 351.1 186.3 351.7 185.3 352.3 182.2 352.9 179.2 353.6 177.7 354.2 175.6 354.8 173.4 355.4 171 356 168.7 356.7 166.9 357.3 164.6 357.9 158 357.9 128.9 358.5 145.6 359 129.6 359.5 145.6 360.1 124.8 360.6 145.4 361.2 126.8 361.7 144.7 362.3 127.3 362.8 150.1 363.4 132.1 363.9 143.7 364.5 125.7 365 141.8 365.5 125.5 366.1 144.5 366.6 129.6 367.2 143.9 367.7 126.8 368.3 151.8 368.8 129.8 369.4 144.6 369.9 128.8 370.5 143 371 132.1 371.5 146.4 372.1 131.8 372.6 143.9 373.2 129.4 373.7 142.3 374.3 129.8 374.8 144.1 375.4 128.6 375.9 144.5 376.4 130.6 377 145.2 377.5 129.5 378.1 143.2 378.6 124.2 379.2 147.8 379.7 126.4 380.3 147.1 380.8 129.3 381.4 146.5 381.9 133.5 382.4 145.4 383 129.1 383.5 148.9 384.1 127.8 384.6 144.1 385.2 130.4 385.7 144.5 386.3 127.8 386.8 150.7 387.4 129.9 387.9 142.4 388.4 128.4 389 143.5 389.5 130.9 390.1 147.2 390.6 131.4 391.2 147.6 391.7 130.2 392.3 145.8 392.8 132.2 393.3 146.9 393.9 129.8 394.4 148.4 395 129.9 395.5 145.6 396.1 124.2 396.6 151.2 397.2 128.6 397.7 142 398.3 129.9 398.8 148.7 399.3 124.7 399.9 143.9 400.4 128.5 401 154.8 401.5 130.8 402.1 142.7 402.6 131.6 403.2 146 403.7 128.6 404.2 148.2 404.8 129.4 405.3 144.9 405.9 132.8 406.4 144.1 407 127.8 407.5 144.2 408.1 131.3 408.6 147.2 409.2 128.2 409.7 147.1 410.2 125.6 410.8 145.5 411.3 127.1 411.9 146.4 412.4 127.7 413 148.9 413.5 134.3 414.1 149.1 414.6 129.8 415.2 149.1 415.7 132.8 416.2 147.9 416.8 126.7 417.3 152.6 417.9 160.3 418.4 181.3 418.4 136.3 418.5 184.4 418.6 136.3 419 166.3 419.5 145.3 420.1 124.8 420.6 142.2 421.1 127.1 421.7 142.8 422.2 130.5 422.8 143.1 423.3 131.7 423.9 141.9 424.4 129.3 425 144.8 425.5 126.7 426.1 144.4 426.6 129.6 427.1 141.7 427.7 131.4 428.2 156.6 428.8 128.6 429.3 141.9 429.9 134.4 430.4 161 431 128.6 431.5 147.2 432.1 132.2 432.6 146.7 433.1 129 433.7 143.4 434.2 126.1 434.8 142.4 435.3 128.9 435.9 142.4 436.4 129.9 437 146.2 437.5 132.2 438 148 438.6 132 439.1 142.9 439.7 126.1 440.2 147.9 440.8 132.7 441.3 143.7 441.9 128.7 442.4 148.9 443 129.5 443.5 151.5 444 130.3 444.6 143.5 445.1 132.4 445.7 147.1 446.2 131.7 446.8 143.7 447.3 128.9 447.9 150.1 448.4 129.2 448.9 142.4 449.5 128.3 450 141.9 450.6 129 451.1 152.3 451.7 129.5 452.2 143.3 452.8 132.1 453.3 144.5 453.9 131 454.4 149 454.9 131.2 455.5 144.2 456 130.8 456.6 143.1 457.1 130.4 457.7 142.5 458.2 130.2 458.8 150.1 459.3 130.1 459.9 146.3 460.4 128.1 460.9 144 461.5 127.8 462 146.1 462.6 131 463.1 144.3 463.7 129.8 464.2 146.6 464.8 129.3 465.3 149.2 465.8 130.9 466.4 146.1 466.9 124.8 467.5 146.6 468 129.6 468.6 148.5 469.1 127.8 469.7 148.1 470.2 129.6 470.8 142.1 471.3 130.7 471.8 145 472.4 133 472.9 145.7 473.5 131.4 474 145.4 474.6 129.5 475.1 142.2 475.7 129.6 476.2 146.6 476.8 132.9 477.3 146.5 477.8 130.3 478.4 142.4 478.9 128.3 479.5 143.9 480 128.3 480.6 147.3 481.1 127.4 481.7 143.5 482.2 128.2 482.7 142.4 483.3 127.1 483.8 145.2 484.4 129.9 484.9 142.3 485.5 128.9 486 142.5 486.6 131.2 487.1 142.5 487.7 127.9 488.2 144.5 488.7 127.5 489.3 145.7 489.8 129.3 490.4 146.4 490.9 127.8 491.5 144.7 492 131.2 492.6 149 493.1 132.3 493.6 148.6 494.2 131.6 494.7 143 495.3 127.1 495.8 152.2 496.4 131.3 496.9 143.5 497.5 127 498 146.3 498.6 129.4 499.1 141.9 499.6 132.7 500.2 148.8 500.7 124.2 501.3 146.4 501.8 130.3 502.4 143.8 502.9 126.8 503.5 143.9 504 133 504.6 149.9 505.1 131.4 505.6 144.2 506.2 131.9 506.7 160 507.3 127.7 507.8 145 508.4 128.7 508.9 145.9 509.5 130.6 510 142.4 510.5 129.2 511.1 143.1 511.6 131.2 512.2 146.3 512.7 124.3 513.3 149.7 513.8 130.7 514.4 144.6 514.9 128.1 515.5 146.2 516 132.9 516.5 144.5 517.1 131.4 517.6 144.2 518.2 128.9 518.7 150.4 519.3 128.5 519.8 144.8 520.4 130.6 520.9 146.7 521.5 126.5 522 145.5 522.5 131 523.1 150.7 523.6 130.3 524.2 144.5 524.7 131.1 525.3 144.5 525.8 133.2 526.4 154.6 526.9 133 527.4 145.9 528 132.5 528.5 143.5 529.1 129.5 529.6 150.3 530.2 132.6 530.7 146.7 531.3 126.3 531.8 143.4 532.4 130.4 532.9 148.2 533.4 133.5 534 143.3 534.5 124.2 535.1 144.3 535.6 128 536.2 144.5 536.7 128.3 537.3 146.2 537.8 131.2 538.3 143.5 538.9 130.4 539.4 147.1 540 129.5 540.5 150.3 541.1 128.9 541.6 142.6 542.2 136.3 542.7 149.5 543.3 162.7 543.3 136.3 543.4 166.5 543.5 136.3 543.8 157.1 544.3 143.9 544.9 142.4 545.4 127.4 546 144.6 546.5 131.4 547.1 142.6 547.6 129.7 548.2 143.4 548.7 126.7 549.3 143.2 549.8 130.8 550.3 142.8 550.9 129.7 551.4 146.4 552 132.1 552.5 144.2 553.1 128.1 553.6 144.8 554.2 131.7 554.7 151 555.2 131.6 555.8 143.1 556.3 128.2 556.9 148.4 557.4 127.6 558 153.9 558.5 133.7 559.1 142.6 559.6 127.2 560.2 144.1 560.7 133.1 561.2 145.5 561.8 126.4 562.3 142.4 562.9 126.3 563.4 143.9 564 129.4 564.5 156.1 565.1 132.5 565.6 142.8 566.2 128 566.7 149 567.2 129.3 567.8 142.1 568.3 125.7 568.9 142.4 569.4 130.4 570 150.7 570.5 132.2 571.1 142.2 571.6 131.2 572.1 151.4 572.7 127.5 573.2 151.9 573.8 131.7 574.3 155.9 574.9 133.9 575.4 150.7 576 128.5 576.5 142.2 577.1 130.3 577.6 152.8 578.1 129.7 578.7 149.1 579.2 131.7 579.8 142 580.3 125.7 580.9 153.4 581.4 132.5 582 146.1 582.5 126.4 583 143 583.6 130.4 584.1 146.3 584.7 125.5 585.2 143.3 585.8 128.6 586.3 145 586.9 129.6 587.4 145.5 588 131.5 588.5 143.1 589 130.8 589.6 143.2 590.1 132.7 590.7 149.7 591.2 132.4 591.8 145.9 592.3 130.4 592.9 144.7 593.4 124.2 594 143.1 594.5 130.9 595 147.3 595.6 132.4 596.1 144.7 596.7 132.5 597.2 143.8 597.8 131.1 598.3 145.2 598.9 133.9 599.4 147.4 599.9 132.9 600.5 143.4 601 132.2 601.6 146.8 602.1 124.4 602.7 143 603.2 129.6 603.8 144.1 604.3 129.5 604.9 142.6 605.4 127 605.9 145.4 606.5 128.7 607 150.5 607.6 133.3 608.1 145.5 608.7 129.4 609.2 146.3 609.8 136.6 610.3 142 610.9 132.5 611.4 144.8 611.9 130.1 612.5 144.1 613 130.3 613.6 143.7 614.1 133.4 614.7 143.2 615.2 130.7 615.8 149.4 616.3 125.8 616.8 148.6 617.4 131.2 617.9 145 618.5 125.7 619 146.4 619.6 124.2 620.1 152.5 620.7 129.2 621.2 141.8 621.8 128 622.3 148.9 622.8 131.1 623.4 151 623.9 126.9 624.5 145.6 625 130.2 625.6 146.1 626.1 129.7 626.7 143.9 627.2 129.1 627.8 147.5 628.3 133.2 628.8 143.6 629.4 127.4 629.9 145.9 630.5 133.9 631 146 631.6 127.7 632.1 146 632.7 130.6 633.2 141.9 633.7 124.5 634.3 149.5 634.8 131.3 635.4 141.9 635.9 130.1 636.5 141.8 637 131.7 637.6 143.7 638.1 127.7 638.7 145.6 639.2 128.4 639.7 147.1 640.3 130.3 640.8 144.9 641.4 134.8 641.9 150.7 642.5 124.5 643 142.7 643.6 126.7 644.1 143.2 644.6 131.2 645.2 145.6 645.7 126.4 646.3 149.3 646.8 129.7 647.4 143.2 647.9 132.6 648.5 145.5 649 129.5 649.6 143.1 650.1 133.3 650.6 142.5 651.2 130.3 651.7 149.5 652.3 128.5 652.8 144.4 653.4 130.6 653.9 148.7 654.5 129.3 655 145 655.6 126.9 656.1 147 656.6 129.6 657.2 143.9 657.7 133.5 658.3 144.2 658.8 126.5 659.4 143.8 659.9 132.9 660.5 141.7 661 128.9 661.5 150.4 662.1 132.6 662.6 143.4 663.2 129.7 663.7 142.6 664.3 124.2 664.8 151.7 665.4 130.1 665.9 146.6 666.3 170.4 666.7 181.2 667.1 181.1 667.9 181.2 668.6 182.6 669.4 185.1 670.2 186 671 187.7 671.7 189.1 672.5 190.9 673.3 194.5 674.1 196.6 674.9 198.1 675.6 199 676.4 202.7 677.2 203.4 678 206 678.8 208.6 679.5 210.6 680.3 213 681.1 215.9 681.9 217.8 682.7 219.8 683.4 223.3 684.2 226.9 685 228.6 685.8 228.5 686.5 228 687.3 225.9 688.1 225.7 688.9 226.9 689.7 227.6 690.4 228.3 691.2 229.1 692 230.2 692.8 230.9 693.6 231.2 694.3 233.1 695.1 235.5 695.9 237.7 696.7 239.8 697.4 242.7 698.2 244.9 699 244.5 699.8 242.3 700.6 241.4 701.3 243.4 702.1 242.1 702.9 242.6 703.7 243.3 704.5 244.4 705.2 245.3 706 246 706.8 245.7 707.6 248.1 708.4 249 709.1 249.7 709.9 252.1 710.7 253.9 711.5 255.8 712.2 258.3 713 258.7 713.8 258.4 714.6 255.9 715.4 255.1 716.1 255.8 716.9 255.2 717.7 256.3 718.5 255.1 719.3 255 720 255.1 720.8 257.2 721.6 258 722.4 258.7 723.1 259.4 723.9 261 724.7 263.1 725.5 265 726.3 266.6 727 270.6 727.8 270.5 728.6 269.4 729.4 268.9 730.2 265.9 730.9 265.7 731.7 266.1 732.5 264.5 733.3 265.4 734 265.5 734.8 264 735.6 265 736.4 264.7 737.2 265.1 737.9 263.9 738.7 264.9 739.5 265 740.3 266.5 741.1 266.6 741.8 267.3 742.6 267.4 743.4 269.9 744.2 270.1 745 269.9 745.7 271.1 746.5 271.1 747.3 271.1 748.1 271.1" stroke="#ff22dd"/>
<path d="M97.7 265.8 98.4 266.6 99.2 265.6 100 265.2 100.8 266.4 101.5 266.6 102.3 265.5 103.1 265.8 103.9 267 104.7 267.2 105.4 269 106.2 270 107 273.3 107.8 269.5 108.6 266.8 109.3 264.7 110.1 264.2 110.9 262.1 111.7 261.8 112.5 260.6 113.2 259.1 114 257.8 114.8 258.6 115.6 257.3 116.3 257.5 117.1 257.3 117.9 257.4 118.7 257.3 119.5 257.5 120.2 258 121 259.6 121.8 261 122.6 264 123.4 260.2 124.1 257.1 124.9 255.5 125.7 253.3 126.5 252.3 127.2 250.5 128 250.1 128.8 248.6 129.6 248.2 130.4 246.4 131.1 246 131.9 244.9 132.7 245.5 133.5 245.1 134.3 244 135 243.8 135.8 244.9 136.6 243.8 137.4 245.1 138.1 246.2 138.9 248.3 139.7 242.2 140.5 240.4 141.3 237.8 142 235.6 142.8 233.8 143.6 231.2 144.4 230.3 145.2 229.8 145.9 227.8 146.7 227.9 147.5 227.4 148.3 225.9 149.1 227.2 149.8 226.7 150.6 227.2 151.4 228.2 152.2 229.6 152.9 228.4 153.7 225.8 154.5 223.3 155.3 220.3 156.1 216 156.8 213.5 157.6 210.8 158.4 207.9 159.2 204.5 160 202.4 160.7 199 161.5 197 162.3 195.1 163.1 192.2 163.8 189.3 164.6 187 165.4 185.2 166.2 183.7 167 182.1 167.7 179.6 168.5 178.4 169.3 176.2 170.1 173.5 170.9 172.1 171 171.4 171 132.5 171.5 144.2 172 129.5 172.5 142.6 173 129.6 173.5 145.7 174 132.3 174.5 144.9 175 129 175.5 141 176 130.6 176.5 142.8 177 128.9 177.5 141.2 178 131.5 178.5 143.8 179 130.2 179.5 150.1 180 129.5 180.5 142.4 181 127.3 181.5 141 182 128 182.5 146.6 183 127.5 183.5 141.3 184 130.1 184.5 144 185 124.8 185.5 141.3 186 127.9 186.5 141.8 187 131.5 187.5 144.3 188 126.5 188.5 142.4 189 125.9 189.5 141.8 190 128.2 190.5 143.8 190.9 127.2 191.4 147.1 191.9 131.1 192.4 143.5 192.9 131.4 193.4 145.2 193.9 136.1 194.4 141.8 194.9 130.5 195.4 142 195.9 131.9 196.4 144.3 196.9 131.6 197.4 148.4 197.9 132.2 198.4 141.8 198.9 129.7 199.4 143.5 199.9 129.6 200.4 149.4 200.9 130.4 201.4 145 201.9 133.3 202.4 144.6 202.9 130.8 203.4 142.7 203.9 129.1 204.4 144.4 204.9 130.5 205.4 145.2 205.9 131.1 206.4 145 206.9 127.5 207.4 143.2 207.9 134.6 208.4 143.6 208.9 131.1 209.4 148.6 209.9 130.9 210.4 143 210.9 128.8 211.4 141.9 211.9 130.3 212.4 141.8 212.9 130.4 213.4 144.6 213.9 130.9 214.4 143.6 214.9 129.8 215.4 145.9 215.9 129.5 216.4 147 216.9 126.3 217.4 145.3 217.9 130.9 218.4 146.1 218.9 129 219.4 142.5 219.9 130.1 220.4 141 220.9 129.8 221.4 145.1 221.9 131.1 222.3 144.2 222.8 130.5 223.3 144.9 223.8 130.6 224.3 146.6 224.8 127.3 225.3 149.4 225.8 130.5 226.3 145.6 226.8 127.6 227.3 143.4 227.8 128.2 228.3 143.9 228.8 131.6 229.3 143.2 229.8 129.5 230.3 144.2 230.8 128.7 231.3 142.6 231.8 152.2 232 136.3 232.1 170.4 232.1 136.3 232.3 152.2 232.8 130 233.3 144.8 233.8 128.8 234.3 144.3 234.8 128.6 235.3 141.1 235.8 127.9 236.3 144.1 236.8 129.5 237.3 148.5 237.8 130.5 238.3 144.4 238.8 127.6 239.3 144.1 239.8 130.3 240.3 151 240.8 128.7 241.3 141.9 241.8 128.8 242.3 142.1 242.8 127.9 243.3 141.7 243.8 126.3 244.3 144 244.8 129.6 245.3 142.6 245.8 127.2 246.3 145.4 246.8 128.7 247.3 148 247.8 129.3 248.3 144.1 248.8 127.7 249.3 144.2 249.8 127.6 250.3 142.5 250.8 129.8 251.3 143.8 251.8 129.9 252.3 144 252.8 130.1 253.2 144.4 253.7 133 254.2 145.2 254.7 129.8 255.2 142.2 255.7 132 256.2 147.2 256.7 130.3 257.2 142.2 257.7 132.4 258.2 147.1 258.7 132.3 259.2 144.1 259.7 128 260.2 141.9 260.7 132.1 261.2 146 261.7 134.2 262.2 148.8 262.7 128.1 263.2 143.4 263.7 129.9 264.2 142.4 264.7 131 265.2 143 265.7 132.4 266.2 142.9 266.7 129.7 267.2 144.1 267.7 128.2 268.2 142.3 268.7 130.8 269.2 142.5 269.7 131.8 270.2 143.9 270.7 131.7 271.2 145.1 271.7 125.9 272.2 143.8 272.7 129.2 273.2 146.5 273.7 133.5 274.2 141.1 274.7 129.9 275.2 148.7 275.7 133 276.2 142.4 276.7 129 277.2 142.9 277.7 125.1 278.2 141.2 278.7 132.9 279.2 148.7 279.7 128.7 280.2 142.6 280.7 133.9 281.2 141.5 281.7 132.3 282.2 141.6 282.7 129.5 283.2 141.3 283.7 129.6 284.2 141.5 284.6 129.6 285.1 143.5 285.6 131.6 286.1 142.1 286.6 130.6 287.1 142.7 287.6 131.5 288.1 145.5 288.6 132.3 289.1 145.7 289.6 131.3 290.1 145.4 290.6 131.3 291.1 144.8 291.6 129.9 292.1 150.6 292.6 132 293.1 164.2 293.1 166.1 293.7 167.5 294.4 170.4 295 171.6 295.6 174.2 296.2 175.4 296.9 177.2 297.5 179.2 298.1 181.3 298.7 184.8 299.4 186.3 300 188.2 300.6 190 301.2 192.3 301.8 193.6 302.5 196.7 303.1 198.6 303.7 200.9 304.3 201.7 305 205.2 305.6 206.1 306.2 209.1 306.8 210.6 307.5 212.5 308.1 214.3 308.7 215.7 309.3 218.5 309.9 221.1 310.6 223.2 311.2 224.4 311.8 227.5 312.4 228.9 313.1 230.3 313.7 229.6 314.3 230 314.9 229.1 315.5 229.6 316.2 229.2 316.8 227.8 317.4 228.1 318 227.6 318.7 228.9 319.3 229.1 319.9 230.1 320.5 231.4 321.2 233.3 321.8 235 322.4 235.8 323 235.9 323.6 234.7 324.3 235.3 324.9 235.8 325.5 236 326.1 235.7 326.8 237.9 327.4 241.7 328 245.6 328.6 248.3 329.3 247.7 329.9 245.3 330.5 241.7 331.1 235.8 331.7 230.7 332.4 228.2 333 228.5 333.6 229.3 334.2 229.9 334.9 232.8 335.5 234.1 336.1 234 336.7 234 337.4 231.1 338 230.5 338.6 229 339.2 227.5 339.8 225.3 340.5 223.5 341.1 220.9 341.7 218.3 342.3 215.2 343 213.8 343.6 210.5 344.2 208.5 344.8 206.1 345.5 203.9 346.1 203 346.7 199.1 347.3 196.7 347.9 195.9 348.6 193 349.2 189.8 349.8 188 350.4 185.8 351.1 184.5 351.7 182 352.3 179 352.9 176.2 353.6 173.8 354.2 172.4 354.8 170.2 355.4 168.3 356 165.5 356.7 164 357.3 160.2 357.9 158 357.9 132.6 358.4 145.2 358.9 128.2 359.4 141.2 359.9 129.9 360.4 141.5 360.9 129.7 361.4 145.9 361.9 130 362.4 142.8 362.9 130.6 363.4 146.8 363.9 129.8 364.4 143.1 364.9 129.8 365.4 141.6 365.9 129.5 366.4 142.3 366.9 133.2 367.4 147.7 367.9 129.6 368.4 148.4 368.9 126.8 369.4 143.8 369.9 131 370.4 142.8 370.9 129.5 371.4 144.5 371.9 130.3 372.4 141.8 372.9 131.3 373.4 149.9 373.9 133.3 374.4 147.3 374.9 126.7 375.4 142.7 375.9 129.2 376.4 142.9 376.9 131 377.4 144.2 377.8 130 378.3 142.5 378.8 127.9 379.3 141.9 379.8 131.1 380.3 143.2 380.8 131.3 381.3 146.8 381.8 130.1 382.3 141.3 382.8 132.4 383.3 141.3 383.8 130.4 384.3 146.4 384.8 129.3 385.3 145.9 385.8 129.6 386.3 147.2 386.8 132.7 387.3 147.9 387.6 136.3 387.7 179.7 387.7 136.3 387.8 165.2 388.3 141.9 388.8 134.4 389.3 143.9 389.8 129.3 390.3 143.1 390.8 127.6 391.3 146.5 391.8 130 392.3 142.4 392.8 131.7 393.3 141.8 393.8 129.4 394.3 141.3 394.8 129.4 395.3 143.3 395.8 129.7 396.3 142.3 396.8 129.2 397.3 143.4 397.8 129.8 398.3 142.6 398.8 127.8 399.3 142.3 399.8 130.5 400.3 141.4 400.8 125.3 401.3 141.8 401.8 129.5 402.3 144.8 402.8 133 403.3 150.2 403.8 129.7 404.3 147.7 404.8 128.3 405.3 144.6 405.8 129.8 406.3 146.9 406.8 129.8 407.3 143.7 407.8 124.5 408.3 145.1 408.8 128.2 409.2 147.9 409.7 129.5 410.2 146.6 410.7 128 411.2 143.3 411.7 135.3 412.2 144.8 412.7 134.1 413.2 142.8 413.7 130.2 414.2 143.5 414.7 129 415.2 143.6 415.7 131 416.2 145.6 416.7 133 417.2 145.9 417.7 148.2 418.2 161 418.4 136.3 418.5 168.1 418.6 136.3 418.7 162.6 419.2 149.8 419.7 137.1 420.2 142 420.7 131.4 421.2 146.5 421.7 130.2 422.2 141.6 422.7 130 423.2 143.1 423.7 131.4 424.2 141.1 424.7 130.1 425.2 144.5 425.7 127.5 426.2 154.8 426.7 130.2 427.2 143.2 427.7 127.2 428.2 142 428.7 127.9 429.2 145.7 429.7 130.5 430.2 143.7 430.7 132.6 431.2 142.6 431.7 129.4 432.2 143.1 432.7 132 433.2 142.3 433.7 130.1 434.2 142.7 434.7 131.5 435.2 141.7 435.7 132.3 436.2 148.3 436.7 128 437.2 148.7 437.7 128 438.2 143.7 438.7 128.7 439.2 144.4 439.7 130.7 440.1 145.3 440.6 131.8 441.1 147.9 441.6 132 442.1 141.9 442.6 130.2 443.1 151.6 443.6 132.5 444.1 144.1 444.6 130.8 445.1 141.3 445.6 129.8 446.1 149.3 446.6 132.7 447.1 145.9 447.6 126.3 448.1 145.7 448.6 130.2 449.1 141.6 449.6 126.8 450.1 144.9 450.6 130.1 451.1 141.8 451.6 131.2 452.1 141.8 452.6 131.2 453.1 146.1 453.6 131 454.1 143.5 454.6 130.8 455.1 142 455.6 126.3 456.1 145.8 456.6 127.5 457.1 149 457.6 130.3 458.1 143.2 458.6 129.9 459.1 145.5 459.6 128.2 460.1 142.9 460.6 132.3 461.1 144 461.6 134.4 462.1 141.8 462.6 128.4 463.1 150.1 463.6 132.2 464.1 144.2 464.6 132.3 465.1 143 465.6 132.8 466.1 150.5 466.6 129.1 467.1 146.7 467.6 130.1 468.1 150.4 468.6 131.4 469.1 143.5 469.6 127.3 470.1 146.8 470.6 129.9 471.1 141.4 471.5 130 472 147.3 472.5 129.5 473 141.2 473.5 127.2 474 142.1 474.5 131 475 142.9 475.5 130.1 476 142.7 476.5 130.9 477 143.5 477.5 129.3 478 141.2 478.5 129.7 479 144 479.5 125.3 480 143.4 480.5 125.7 481 143.5 481.5 129.8 482 142.7 482.5 128.1 483 146.1 483.5 132.3 484 144.4 484.5 129.7 485 143.7 485.5 128.6 486 141.8 486.5 129.4 487 141.3 487.5 132.2 488 146.8 488.5 128 489 141.6 489.5 131.3 490 141.6 490.5 130.4 491 145.6 491.5 131.4 492 142.3 492.5 131.3 493 142.8 493.5 130.4 494 144.3 494.5 130.4 495 143.4 495.5 131.9 496 145.3 496.5 128 497 142 497.5 129.7 498 141.6 498.5 128.3 499 147.4 499.5 132.5 500 148.1 500.5 130.7 501 145.4 501.5 128 502 142.7 502.4 131.9 502.9 142.4 503.4 127.3 503.9 145.9 504.4 129.1 504.9 146.2 505.4 130.9 505.9 142.8 506.4 128.1 506.9 145.1 507.4 132.7 507.9 146.6 508.4 132.1 508.9 144.4 509.4 129.4 509.9 144.1 510.4 129.3 510.9 141.1 511.4 131.4 511.9 143.4 512.4 129.2 512.9 142.3 513.4 131 513.9 143.4 514.4 131.4 514.9 141.2 515.4 127.7 515.9 142.1 516.4 135.9 516.9 142.4 517.4 129.8 517.9 152.6 518.4 128.9 518.9 146.1 519.4 129.1 519.9 149.8 520.4 128.2 520.9 141.8 521.4 134.4 521.9 142.4 522.4 128 522.9 143.8 523.4 131.8 523.9 147.5 524.4 132.2 524.9 142.5 525.4 129.5 525.9 147.1 526.4 130.8 526.9 144.1 527.4 131.3 527.9 143.8 528.4 128.7 528.9 141.3 529.4 126.8 529.9 142 530.4 128.7 530.9 148.8 531.4 128.2 531.9 142.4 532.4 126.1 532.9 143.7 533.4 131.9 533.8 142.6 534.3 125.5 534.8 142.5 535.3 126.5 535.8 143.3 536.3 128.2 536.8 141.4 537.3 134 537.8 142.4 538.3 132.6 538.8 141.7 539.3 130.6 539.8 148.7 540.3 132.6 540.8 150.8 541.3 134.2 541.8 143.5 542.3 140.1 542.8 152.3 543.3 164.5 543.3 136.3 543.4 166.8 543.5 136.3 543.8 156.9 544.3 144.7 544.8 144.7 545.3 129.9 545.8 144.7 546.3 128.4 546.8 146.2 547.3 130.7 547.8 151.6 548.3 135.5 548.8 141.5 549.3 130.7 549.8 141.2 550.3 135.3 550.8 144.7 551.3 125.1 551.8 145.6 552.3 133 552.8 144.9 553.3 131.5 553.8 144.9 554.3 131.7 554.8 141.6 555.3 131.8 555.8 143.4 556.3 128.3 556.8 148.7 557.3 133.4 557.8 144.3 558.3 129.7 558.8 143.2 559.3 130.3 559.8 147.7 560.3 129.8 560.8 148.3 561.3 128.9 561.8 142.1 562.3 125.1 562.8 148.7 563.3 131.1 563.8 143.1 564.3 132.1 564.7 147 565.2 129.1 565.7 145.9 566.2 131.8 566.7 142.1 567.2 130.1 567.7 142.1 568.2 128.8 568.7 144.4 569.2 131.5 569.7 146.4 570.2 129.9 570.7 145.8 571.2 127.5 571.7 144.3 572.2 134.4 572.7 141.7 573.2 128.9 573.7 143.7 574.2 131.6 574.7 143.7 575.2 130.4 575.7 151.4 576.2 131.2 576.7 141.3 577.2 132.9 577.7 147.2 578.2 130.2 578.7 144.3 579.2 130.3 579.7 150.5 580.2 129.9 580.7 144.3 581.2 128.3 581.7 143.1 582.2 128.7 582.7 142.3 583.2 129.1 583.7 141.9 584.2 128.4 584.7 142.9 585.2 127.5 585.7 149.8 586.2 128.5 586.7 147.9 587.2 130 587.7 143.8 588.2 130 588.7 144 589.2 132.1 589.7 142 590.2 130.8 590.7 142.8 591.2 129.9 591.7 141.3 592.2 129.2 592.7 141.3 593.2 129.9 593.7 141.8 594.2 133.3 594.7 146.4 595.2 129.5 595.7 146.1 596.1 133.3 596.6 141.3 597.1 133.4 597.6 141.9 598.1 131.9 598.6 150.1 599.1 131.1 599.6 144.5 600.1 127.9 600.6 144.3 601.1 128.8 601.6 141.5 602.1 130.5 602.6 143.8 603.1 128.2 603.6 144.5 604.1 131.2 604.6 142.6 605.1 128.6 605.6 159.2 605.6 136.3 605.7 165 605.8 136.3 606.1 140.1 606.6 146 607.1 130.4 607.6 145.1 608.1 132.2 608.6 148.3 609.1 128.7 609.6 144.5 610.1 132.6 610.6 144.5 611.1 130 611.6 147.7 612.1 129.5 612.6 141.4 613.1 129.8 613.6 142.7 614.1 132.2 614.6 142.8 615.1 128.7 615.6 144.8 616.1 127.8 616.6 141.7 617.1 128.2 617.6 150.5 618.1 128.7 618.6 144.9 619.1 130.5 619.6 141.1 620.1 130 620.6 147.1 621.1 131.9 621.6 144.2 622.1 130.9 622.6 141.2 623.1 131 623.6 144 624.1 129.3 624.6 145.8 625.1 128.5 625.6 145.2 626.1 127.2 626.6 143.5 627 130.8 627.5 141.5 628 131.3 628.5 145.1 629 126.7 629.5 149.2 630 127.5 630.5 142.5 631 125.6 631.5 143.7 632 129.5 632.5 148.5 633 125.3 633.5 143.6 634 128.4 634.5 142.6 635 131.2 635.5 146.7 636 126.7 636.5 143.5 637 128.1 637.5 141 638 130.7 638.5 147.2 639 132.6 639.5 143.1 640 127.4 640.5 144.5 641 128.4 641.5 144.2 642 129.3 642.5 149.5 643 132.4 643.5 141.4 644 133.3 644.5 141.8 645 129.4 645.5 148.1 646 133.2 646.5 141.6 647 128.3 647.5 142.1 648 130.5 648.5 146.4 649 129.2 649.5 142.9 650 131.6 650.5 141.9 651 128.8 651.5 141 652 126 652.5 142.6 653 129.1 653.5 144.2 654 131.9 654.5 141.8 655 130.8 655.5 143.8 656 130.5 656.5 143.5 657 130.1 657.5 142.9 658 126.6 658.4 144.5 658.9 133.4 659.4 144.1 659.9 129.9 660.4 144.1 660.9 129.8 661.4 147.4 661.9 130.9 662.4 142.8 662.9 129.2 663.4 145.5 663.9 131.5 664.4 141.4 664.9 128.7 665.4 144.3 665.9 130.3 666.3 170.4 666.5 181.2 667.1 180.5 667.9 181.9 668.6 184.9 669.4 185.9 670.2 188.9 671 189.9 671.7 191.4 672.5 193.4 673.3 196.5 674.1 198.3 674.9 200.3 675.6 201.5 676.4 204.3 677.2 206.8 678 209.5 678.8 210.2 679.5 213.9 680.3 216.5 681.1 217.5 681.9 220.9 682.7 223.2 683.4 226.2 684.2 229 685 229.3 685.8 228.3 686.5 227.6 687.3 227.4 688.1 227.4 688.9 228.4 689.7 227.8 690.4 228.9 691.2 231.2 692 231.9 692.8 232.2 693.6 235.7 694.3 237.1 695.1 239.5 695.9 241.8 696.7 244.9 697.4 244.5 698.2 243.6 699 241.7 699.8 243.1 700.6 242.7 701.3 242.8 702.1 243.1 702.9 242.1 703.7 244.2 704.5 244.5 705.2 246 706 247.9 706.8 248.2 707.6 250.1 708.4 251.7 709.1 252.3 709.9 255.1 710.7 257.3 711.5 260.7 712.2 258.4 713 256.8 713.8 255.8 714.6 254.9 715.4 255.5 716.1 255.8 716.9 255.3 717.7 255.6 718.5 255.6 719.3 255.5 720 256 720.8 258.4 721.6 259.1 722.4 261.3 723.1 261.6 723.9 263.4 724.7 265.6 725.5 268.4 726.3 271 727 268.5 727.8 267.9 728.6 268.1 729.4 266.1 730.2 265 730.9 265.6 731.7 265 732.5 264.7 733.3 265.4 734 263.6 734.8 263.8 735.6 263.6 736.4 263.7 737.2 265.7 737.9 265.6 738.7 265.3 739.5 265.4 740.3 267 741.1 267.8 741.8 267.4 742.6 268.4 743.4 269.7 744.2 270.6 745 271.1 745.7 271.1 746.5 271.1 747.3 271.1 748.1 271.1" stroke="#ffff00"/>
</g>
<path d="M107.5 267V260M107.5 96V103M185.5 267V260M185.5 96V103M263.5 267V260M263.5 96V103M341.5 267V260M341.5 96V103M419.5 267V260M419.5 96V103M496.5 267V260M496.5 96V103M574.5 267V260M574.5 96V103M652.5 267V260M652.5 96V103M730.5 267V260M730.5 96V103M45 111.5H52M793 111.5H786M45 142.5H52M793 142.5H786M45 173.5H52M793 173.5H786M45 204.5H52M793 204.5H786M45 235.5H52M793 235.5H786M45 266.5H52M793 266.5H786" stroke="#a8a8a8" stroke-width="1" fill="none"/>
<rect x="45.5" y="96.5" width="748" height="171" fill="none" stroke="#c4c4c4" stroke-width="1"/>
<g font-family='"Liberation Sans", sans-serif' font-size="9" fill="#b9b9b9"><text x="107.0" y="278" text-anchor="middle">-200</text><text x="184.9" y="278" text-anchor="middle">-150</text><text x="262.8" y="278" text-anchor="middle">-100</text><text x="340.6" y="278" text-anchor="middle">-50</text><text x="421.2" y="278" text-anchor="middle">0</text><text x="499.1" y="278" text-anchor="middle">50</text><text x="577.0" y="278" text-anchor="middle">100</text><text x="654.8" y="278" text-anchor="middle">150</text><text x="732.7" y="278" text-anchor="middle">200</text><text x="42" y="114.8" text-anchor="end">0</text><text x="42" y="145.8" text-anchor="end">-20</text><text x="42" y="176.8" text-anchor="end">-40</text><text x="42" y="207.8" text-anchor="end">-60</text><text x="42" y="238.8" text-anchor="end">-80</text><text x="42" y="269.8" text-anchor="end">-100</text></g>
<text x="419" y="292" text-anchor="middle" font-family='"Liberation Sans", sans-serif' font-size="10.5" fill="#b9b9b9">Frequency (MHz)</text>
<text transform="translate(17.5 179.5) rotate(-90)" text-anchor="middle" font-family='"Liberation Sans", sans-serif' font-size="10.5" fill="#b9b9b9">dBm</text>
<g font-family='"Liberation Sans", sans-serif' font-size="9" fill="#b9b9b9"><text x="44.0" y="315" text-anchor="middle">-80</text><text x="119.0" y="315" text-anchor="middle">-70</text><text x="194.0" y="315" text-anchor="middle">-60</text><text x="269.0" y="315" text-anchor="middle">-50</text><text x="344.0" y="315" text-anchor="middle">-40</text><text x="419.0" y="315" text-anchor="middle">-30</text><text x="494.0" y="315" text-anchor="middle">-20</text><text x="569.0" y="315" text-anchor="middle">-10</text><text x="644.0" y="315" text-anchor="middle">0</text><text x="719.0" y="315" text-anchor="middle">10</text><text x="794.0" y="315" text-anchor="middle">20</text></g>
<rect x="44.5" y="322.5" width="749" height="14" fill="url(#jet)" stroke="#c4c4c4" stroke-width="1"/>
<path d="M119.5 323V329M194.5 323V329M269.5 323V329M344.5 323V329M419.5 323V329M494.5 323V329M569.5 323V329M644.5 323V329M719.5 323V329" stroke="#d8d8d8" stroke-width="1"/>
<text x="748" y="332" font-family='"Liberation Sans", sans-serif' font-size="10" fill="#e8e8e8">dBm</text>
<g clip-path="url(#csp)">
<rect x="45" y="340" width="748" height="140" fill="#00008c"/>
<defs>
<pattern id="tex" patternUnits="userSpaceOnUse" x="0" y="340" width="80" height="64.00">
<rect width="80" height="64.00" fill="#ffe000"/>
<path d="M0 0.00h1v2.56h-1zM3 0.00h1v2.56h-1zM7 0.00h1v2.56h-1zM9 0.00h1v2.56h-1zM11 0.00h1v2.56h-1zM15 0.00h1v2.56h-1zM17 0.00h1v2.56h-1zM21 0.00h1v2.56h-1zM29 0.00h1v2.56h-1zM31 0.00h1v2.56h-1zM33 0.00h1v2.56h-1zM34 0.00h1v2.56h-1zM35 0.00h1v2.56h-1zM39 0.00h1v2.56h-1zM43 0.00h1v2.56h-1zM48 0.00h1v2.56h-1zM50 0.00h1v2.56h-1zM55 0.00h1v2.56h-1zM56 0.00h1v2.56h-1zM67 0.00h1v2.56h-1zM70 0.00h1v2.56h-1zM74 0.00h1v2.56h-1zM77 0.00h1v2.56h-1zM0 2.56h1v2.56h-1zM3 2.56h1v2.56h-1zM7 2.56h1v2.56h-1zM9 2.56h1v2.56h-1zM13 2.56h1v2.56h-1zM15 2.56h1v2.56h-1zM21 2.56h1v2.56h-1zM25 2.56h1v2.56h-1zM29 2.56h1v2.56h-1zM35 2.56h1v2.56h-1zM36 2.56h1v2.56h-1zM38 2.56h1v2.56h-1zM40 2.56h1v2.56h-1zM41 2.56h1v2.56h-1zM42 2.56h1v2.56h-1zM45 2.56h1v2.56h-1zM47 2.56h1v2.56h-1zM48 2.56h1v2.56h-1zM50 2.56h1v2.56h-1zM51 2.56h1v2.56h-1zM52 2.56h1v2.56h-1zM56 2.56h1v2.56h-1zM59 2.56h1v2.56h-1zM67 2.56h1v2.56h-1zM69 2.56h1v2.56h-1zM70 2.56h1v2.56h-1zM73 2.56h1v2.56h-1zM74 2.56h1v2.56h-1zM79 2.56h1v2.56h-1zM3 5.12h1v2.56h-1zM4 5.12h1v2.56h-1zM6 5.12h1v2.56h-1zM7 5.12h1v2.56h-1zM9 5.12h1v2.56h-1zM10 5.12h1v2.56h-1zM15 5.12h1v2.56h-1zM19 5.12h1v2.56h-1zM20 5.12h1v2.56h-1zM21 5.12h1v2.56h-1zM24 5.12h1v2.56h-1zM25 5.12h1v2.56h-1zM32 5.12h1v2.56h-1zM36 5.12h1v2.56h-1zM47 5.12h1v2.56h-1zM48 5.12h1v2.56h-1zM50 5.12h1v2.56h-1zM57 5.12h1v2.56h-1zM62 5.12h1v2.56h-1zM67 5.12h1v2.56h-1zM71 5.12h1v2.56h-1zM75 5.12h1v2.56h-1zM1 7.68h1v2.56h-1zM4 7.68h1v2.56h-1zM7 7.68h1v2.56h-1zM9 7.68h1v2.56h-1zM10 7.68h1v2.56h-1zM14 7.68h1v2.56h-1zM15 7.68h1v2.56h-1zM19 7.68h1v2.56h-1zM21 7.68h1v2.56h-1zM25 7.68h1v2.56h-1zM30 7.68h1v2.56h-1zM31 7.68h1v2.56h-1zM34 7.68h1v2.56h-1zM36 7.68h1v2.56h-1zM40 7.68h1v2.56h-1zM48 7.68h1v2.56h-1zM49 7.68h1v2.56h-1zM50 7.68h1v2.56h-1zM57 7.68h1v2.56h-1zM59 7.68h1v2.56h-1zM62 7.68h1v2.56h-1zM66 7.68h1v2.56h-1zM67 7.68h1v2.56h-1zM70 7.68h1v2.56h-1zM73 7.68h1v2.56h-1zM10 10.24h1v2.56h-1zM12 10.24h1v2.56h-1zM15 10.24h1v2.56h-1zM20 10.24h1v2.56h-1zM25 10.24h1v2.56h-1zM30 10.24h1v2.56h-1zM31 10.24h1v2.56h-1zM38 10.24h1v2.56h-1zM45 10.24h1v2.56h-1zM46 10.24h1v2.56h-1zM55 10.24h1v2.56h-1zM67 10.24h1v2.56h-1zM71 10.24h1v2.56h-1zM73 10.24h1v2.56h-1zM13 12.80h1v2.56h-1zM19 12.80h1v2.56h-1zM20 12.80h1v2.56h-1zM26 12.80h1v2.56h-1zM30 12.80h1v2.56h-1zM31 12.80h1v2.56h-1zM38 12.80h1v2.56h-1zM41 12.80h1v2.56h-1zM51 12.80h1v2.56h-1zM55 12.80h1v2.56h-1zM61 12.80h1v2.56h-1zM63 12.80h1v2.56h-1zM71 12.80h1v2.56h-1zM6 15.36h1v2.56h-1zM8 15.36h1v2.56h-1zM11 15.36h1v2.56h-1zM14 15.36h1v2.56h-1zM19 15.36h1v2.56h-1zM21 15.36h1v2.56h-1zM22 15.36h1v2.56h-1zM25 15.36h1v2.56h-1zM26 15.36h1v2.56h-1zM30 15.36h1v2.56h-1zM31 15.36h1v2.56h-1zM32 15.36h1v2.56h-1zM36 15.36h1v2.56h-1zM41 15.36h1v2.56h-1zM43 15.36h1v2.56h-1zM49 15.36h1v2.56h-1zM51 15.36h1v2.56h-1zM54 15.36h1v2.56h-1zM55 15.36h1v2.56h-1zM58 15.36h1v2.56h-1zM71 15.36h1v2.56h-1zM74 15.36h1v2.56h-1zM75 15.36h1v2.56h-1zM1 17.92h1v2.56h-1zM3 17.92h1v2.56h-1zM8 17.92h1v2.56h-1zM11 17.92h1v2.56h-1zM12 17.92h1v2.56h-1zM13 17.92h1v2.56h-1zM14 17.92h1v2.56h-1zM19 17.92h1v2.56h-1zM25 17.92h1v2.56h-1zM32 17.92h1v2.56h-1zM41 17.92h1v2.56h-1zM51 17.92h1v2.56h-1zM53 17.92h1v2.56h-1zM55 17.92h1v2.56h-1zM57 17.92h1v2.56h-1zM61 17.92h1v2.56h-1zM63 17.92h1v2.56h-1zM69 17.92h1v2.56h-1zM71 17.92h1v2.56h-1zM73 17.92h1v2.56h-1zM75 17.92h1v2.56h-1zM1 20.48h1v2.56h-1zM2 20.48h1v2.56h-1zM3 20.48h1v2.56h-1zM13 20.48h1v2.56h-1zM21 20.48h1v2.56h-1zM22 20.48h1v2.56h-1zM24 20.48h1v2.56h-1zM25 20.48h1v2.56h-1zM34 20.48h1v2.56h-1zM40 20.48h1v2.56h-1zM50 20.48h1v2.56h-1zM51 20.48h1v2.56h-1zM53 20.48h1v2.56h-1zM54 20.48h1v2.56h-1zM55 20.48h1v2.56h-1zM57 20.48h1v2.56h-1zM63 20.48h1v2.56h-1zM69 20.48h1v2.56h-1zM71 20.48h1v2.56h-1zM72 20.48h1v2.56h-1zM73 20.48h1v2.56h-1zM78 20.48h1v2.56h-1zM0 23.04h1v2.56h-1zM2 23.04h1v2.56h-1zM3 23.04h1v2.56h-1zM14 23.04h1v2.56h-1zM17 23.04h1v2.56h-1zM22 23.04h1v2.56h-1zM24 23.04h1v2.56h-1zM28 23.04h1v2.56h-1zM29 23.04h1v2.56h-1zM30 23.04h1v2.56h-1zM33 23.04h1v2.56h-1zM35 23.04h1v2.56h-1zM39 23.04h1v2.56h-1zM41 23.04h1v2.56h-1zM46 23.04h1v2.56h-1zM51 23.04h1v2.56h-1zM55 23.04h1v2.56h-1zM61 23.04h1v2.56h-1zM72 23.04h1v2.56h-1zM73 23.04h1v2.56h-1zM74 23.04h1v2.56h-1zM75 23.04h1v2.56h-1zM78 23.04h1v2.56h-1zM0 25.60h1v2.56h-1zM8 25.60h1v2.56h-1zM9 25.60h1v2.56h-1zM14 25.60h1v2.56h-1zM16 25.60h1v2.56h-1zM17 25.60h1v2.56h-1zM22 25.60h1v2.56h-1zM27 25.60h1v2.56h-1zM28 25.60h1v2.56h-1zM29 25.60h1v2.56h-1zM30 25.60h1v2.56h-1zM33 25.60h1v2.56h-1zM37 25.60h1v2.56h-1zM39 25.60h1v2.56h-1zM47 25.60h1v2.56h-1zM50 25.60h1v2.56h-1zM61 25.60h1v2.56h-1zM62 25.60h1v2.56h-1zM66 25.60h1v2.56h-1zM68 25.60h1v2.56h-1zM69 25.60h1v2.56h-1zM71 25.60h1v2.56h-1zM74 25.60h1v2.56h-1zM75 25.60h1v2.56h-1zM2 28.16h1v2.56h-1zM5 28.16h1v2.56h-1zM15 28.16h1v2.56h-1zM16 28.16h1v2.56h-1zM17 28.16h1v2.56h-1zM19 28.16h1v2.56h-1zM20 28.16h1v2.56h-1zM21 28.16h1v2.56h-1zM27 28.16h1v2.56h-1zM29 28.16h1v2.56h-1zM36 28.16h1v2.56h-1zM37 28.16h1v2.56h-1zM43 28.16h1v2.56h-1zM45 28.16h1v2.56h-1zM59 28.16h1v2.56h-1zM61 28.16h1v2.56h-1zM66 28.16h1v2.56h-1zM68 28.16h1v2.56h-1zM69 28.16h1v2.56h-1zM71 28.16h1v2.56h-1zM74 28.16h1v2.56h-1zM75 28.16h1v2.56h-1zM5 30.72h1v2.56h-1zM11 30.72h1v2.56h-1zM12 30.72h1v2.56h-1zM14 30.72h1v2.56h-1zM15 30.72h1v2.56h-1zM16 30.72h1v2.56h-1zM27 30.72h1v2.56h-1zM29 30.72h1v2.56h-1zM32 30.72h1v2.56h-1zM36 30.72h1v2.56h-1zM38 30.72h1v2.56h-1zM43 30.72h1v2.56h-1zM45 30.72h1v2.56h-1zM54 30.72h1v2.56h-1zM58 30.72h1v2.56h-1zM61 30.72h1v2.56h-1zM62 30.72h1v2.56h-1zM63 30.72h1v2.56h-1zM66 30.72h1v2.56h-1zM67 30.72h1v2.56h-1zM69 30.72h1v2.56h-1zM71 30.72h1v2.56h-1zM73 30.72h1v2.56h-1zM74 30.72h1v2.56h-1zM0 33.28h1v2.56h-1zM4 33.28h1v2.56h-1zM5 33.28h1v2.56h-1zM7 33.28h1v2.56h-1zM11 33.28h1v2.56h-1zM14 33.28h1v2.56h-1zM15 33.28h1v2.56h-1zM16 33.28h1v2.56h-1zM19 33.28h1v2.56h-1zM21 33.28h1v2.56h-1zM23 33.28h1v2.56h-1zM24 33.28h1v2.56h-1zM29 33.28h1v2.56h-1zM30 33.28h1v2.56h-1zM38 33.28h1v2.56h-1zM43 33.28h1v2.56h-1zM45 33.28h1v2.56h-1zM51 33.28h1v2.56h-1zM52 33.28h1v2.56h-1zM54 33.28h1v2.56h-1zM60 33.28h1v2.56h-1zM61 33.28h1v2.56h-1zM62 33.28h1v2.56h-1zM64 33.28h1v2.56h-1zM65 33.28h1v2.56h-1zM66 33.28h1v2.56h-1zM68 33.28h1v2.56h-1zM70 33.28h1v2.56h-1zM78 33.28h1v2.56h-1zM0 35.84h1v2.56h-1zM4 35.84h1v2.56h-1zM5 35.84h1v2.56h-1zM7 35.84h1v2.56h-1zM14 35.84h1v2.56h-1zM15 35.84h1v2.56h-1zM17 35.84h1v2.56h-1zM21 35.84h1v2.56h-1zM22 35.84h1v2.56h-1zM23 35.84h1v2.56h-1zM29 35.84h1v2.56h-1zM30 35.84h1v2.56h-1zM34 35.84h1v2.56h-1zM38 35.84h1v2.56h-1zM40 35.84h1v2.56h-1zM43 35.84h1v2.56h-1zM45 35.84h1v2.56h-1zM46 35.84h1v2.56h-1zM50 35.84h1v2.56h-1zM54 35.84h1v2.56h-1zM56 35.84h1v2.56h-1zM60 35.84h1v2.56h-1zM61 35.84h1v2.56h-1zM62 35.84h1v2.56h-1zM68 35.84h1v2.56h-1zM70 35.84h1v2.56h-1zM79 35.84h1v2.56h-1zM4 38.40h1v2.56h-1zM5 38.40h1v2.56h-1zM7 38.40h1v2.56h-1zM9 38.40h1v2.56h-1zM11 38.40h1v2.56h-1zM15 38.40h1v2.56h-1zM17 38.40h1v2.56h-1zM20 38.40h1v2.56h-1zM21 38.40h1v2.56h-1zM22 38.40h1v2.56h-1zM23 38.40h1v2.56h-1zM29 38.40h1v2.56h-1zM30 38.40h1v2.56h-1zM32 38.40h1v2.56h-1zM33 38.40h1v2.56h-1zM34 38.40h1v2.56h-1zM37 38.40h1v2.56h-1zM40 38.40h1v2.56h-1zM55 38.40h1v2.56h-1zM56 38.40h1v2.56h-1zM60 38.40h1v2.56h-1zM67 38.40h1v2.56h-1zM73 38.40h1v2.56h-1zM74 38.40h1v2.56h-1zM75 38.40h1v2.56h-1zM2 40.96h1v2.56h-1zM3 40.96h1v2.56h-1zM4 40.96h1v2.56h-1zM7 40.96h1v2.56h-1zM10 40.96h1v2.56h-1zM11 40.96h1v2.56h-1zM21 40.96h1v2.56h-1zM22 40.96h1v2.56h-1zM23 40.96h1v2.56h-1zM39 40.96h1v2.56h-1zM51 40.96h1v2.56h-1zM55 40.96h1v2.56h-1zM59 40.96h1v2.56h-1zM60 40.96h1v2.56h-1zM63 40.96h1v2.56h-1zM68 40.96h1v2.56h-1zM77 40.96h1v2.56h-1zM4 43.52h1v2.56h-1zM7 43.52h1v2.56h-1zM10 43.52h1v2.56h-1zM11 43.52h1v2.56h-1zM14 43.52h1v2.56h-1zM15 43.52h1v2.56h-1zM19 43.52h1v2.56h-1zM22 43.52h1v2.56h-1zM26 43.52h1v2.56h-1zM39 43.52h1v2.56h-1zM41 43.52h1v2.56h-1zM44 43.52h1v2.56h-1zM50 43.52h1v2.56h-1zM55 43.52h1v2.56h-1zM59 43.52h1v2.56h-1zM63 43.52h1v2.56h-1zM65 43.52h1v2.56h-1zM69 43.52h1v2.56h-1zM75 43.52h1v2.56h-1zM76 43.52h1v2.56h-1zM77 43.52h1v2.56h-1zM6 46.08h1v2.56h-1zM7 46.08h1v2.56h-1zM8 46.08h1v2.56h-1zM10 46.08h1v2.56h-1zM14 46.08h1v2.56h-1zM16 46.08h1v2.56h-1zM19 46.08h1v2.56h-1zM23 46.08h1v2.56h-1zM25 46.08h1v2.56h-1zM26 46.08h1v2.56h-1zM33 46.08h1v2.56h-1zM38 46.08h1v2.56h-1zM42 46.08h1v2.56h-1zM46 46.08h1v2.56h-1zM50 46.08h1v2.56h-1zM61 46.08h1v2.56h-1zM63 46.08h1v2.56h-1zM68 46.08h1v2.56h-1zM69 46.08h1v2.56h-1zM76 46.08h1v2.56h-1zM77 46.08h1v2.56h-1zM79 46.08h1v2.56h-1zM1 48.64h1v2.56h-1zM5 48.64h1v2.56h-1zM6 48.64h1v2.56h-1zM7 48.64h1v2.56h-1zM8 48.64h1v2.56h-1zM9 48.64h1v2.56h-1zM10 48.64h1v2.56h-1zM15 48.64h1v2.56h-1zM16 48.64h1v2.56h-1zM17 48.64h1v2.56h-1zM18 48.64h1v2.56h-1zM19 48.64h1v2.56h-1zM21 48.64h1v2.56h-1zM23 48.64h1v2.56h-1zM24 48.64h1v2.56h-1zM25 48.64h1v2.56h-1zM33 48.64h1v2.56h-1zM36 48.64h1v2.56h-1zM38 48.64h1v2.56h-1zM39 48.64h1v2.56h-1zM46 48.64h1v2.56h-1zM48 48.64h1v2.56h-1zM50 48.64h1v2.56h-1zM54 48.64h1v2.56h-1zM75 48.64h1v2.56h-1zM78 48.64h1v2.56h-1zM0 51.20h1v2.56h-1zM5 51.20h1v2.56h-1zM6 51.20h1v2.56h-1zM10 51.20h1v2.56h-1zM15 51.20h1v2.56h-1zM16 51.20h1v2.56h-1zM17 51.20h1v2.56h-1zM18 51.20h1v2.56h-1zM21 51.20h1v2.56h-1zM22 51.20h1v2.56h-1zM24 51.20h1v2.56h-1zM25 51.20h1v2.56h-1zM29 51.20h1v2.56h-1zM33 51.20h1v2.56h-1zM37 51.20h1v2.56h-1zM38 51.20h1v2.56h-1zM39 51.20h1v2.56h-1zM46 51.20h1v2.56h-1zM50 51.20h1v2.56h-1zM62 51.20h1v2.56h-1zM75 51.20h1v2.56h-1zM0 53.76h1v2.56h-1zM2 53.76h1v2.56h-1zM7 53.76h1v2.56h-1zM13 53.76h1v2.56h-1zM17 53.76h1v2.56h-1zM22 53.76h1v2.56h-1zM23 53.76h1v2.56h-1zM24 53.76h1v2.56h-1zM29 53.76h1v2.56h-1zM30 53.76h1v2.56h-1zM38 53.76h1v2.56h-1zM39 53.76h1v2.56h-1zM46 53.76h1v2.56h-1zM49 53.76h1v2.56h-1zM50 53.76h1v2.56h-1zM52 53.76h1v2.56h-1zM62 53.76h1v2.56h-1zM67 53.76h1v2.56h-1zM68 53.76h1v2.56h-1zM72 53.76h1v2.56h-1zM75 53.76h1v2.56h-1zM77 53.76h1v2.56h-1zM78 53.76h1v2.56h-1zM9 56.32h1v2.56h-1zM10 56.32h1v2.56h-1zM12 56.32h1v2.56h-1zM22 56.32h1v2.56h-1zM25 56.32h1v2.56h-1zM29 56.32h1v2.56h-1zM30 56.32h1v2.56h-1zM34 56.32h1v2.56h-1zM38 56.32h1v2.56h-1zM43 56.32h1v2.56h-1zM45 56.32h1v2.56h-1zM46 56.32h1v2.56h-1zM49 56.32h1v2.56h-1zM57 56.32h1v2.56h-1zM65 56.32h1v2.56h-1zM69 56.32h1v2.56h-1zM72 56.32h1v2.56h-1zM78 56.32h1v2.56h-1zM1 58.88h1v2.56h-1zM6 58.88h1v2.56h-1zM7 58.88h1v2.56h-1zM8 58.88h1v2.56h-1zM9 58.88h1v2.56h-1zM10 58.88h1v2.56h-1zM15 58.88h1v2.56h-1zM16 58.88h1v2.56h-1zM17 58.88h1v2.56h-1zM25 58.88h1v2.56h-1zM26 58.88h1v2.56h-1zM34 58.88h1v2.56h-1zM35 58.88h1v2.56h-1zM38 58.88h1v2.56h-1zM41 58.88h1v2.56h-1zM45 58.88h1v2.56h-1zM48 58.88h1v2.56h-1zM51 58.88h1v2.56h-1zM54 58.88h1v2.56h-1zM58 58.88h1v2.56h-1zM63 58.88h1v2.56h-1zM65 58.88h1v2.56h-1zM66 58.88h1v2.56h-1zM69 58.88h1v2.56h-1zM74 58.88h1v2.56h-1zM6 61.44h1v2.56h-1zM14 61.44h1v2.56h-1zM17 61.44h1v2.56h-1zM18 61.44h1v2.56h-1zM21 61.44h1v2.56h-1zM25 61.44h1v2.56h-1zM26 61.44h1v2.56h-1zM31 61.44h1v2.56h-1zM34 61.44h1v2.56h-1zM42 61.44h1v2.56h-1zM45 61.44h1v2.56h-1zM46 61.44h1v2.56h-1zM53 61.44h1v2.56h-1zM54 61.44h1v2.56h-1zM58 61.44h1v2.56h-1zM61 61.44h1v2.56h-1zM65 61.44h1v2.56h-1zM66 61.44h1v2.56h-1zM69 61.44h1v2.56h-1zM73 61.44h1v2.56h-1z" fill="#ffc400"/>
<path d="M2 0.00h1v2.56h-1zM4 0.00h1v2.56h-1zM8 0.00h1v2.56h-1zM14 0.00h1v2.56h-1zM18 0.00h1v2.56h-1zM20 0.00h1v2.56h-1zM23 0.00h1v2.56h-1zM24 0.00h1v2.56h-1zM25 0.00h1v2.56h-1zM26 0.00h1v2.56h-1zM30 0.00h1v2.56h-1zM36 0.00h1v2.56h-1zM38 0.00h1v2.56h-1zM41 0.00h1v2.56h-1zM45 0.00h1v2.56h-1zM47 0.00h1v2.56h-1zM53 0.00h1v2.56h-1zM64 0.00h1v2.56h-1zM68 0.00h1v2.56h-1zM71 0.00h1v2.56h-1zM72 0.00h1v2.56h-1zM73 0.00h1v2.56h-1zM79 0.00h1v2.56h-1zM2 2.56h1v2.56h-1zM4 2.56h1v2.56h-1zM6 2.56h1v2.56h-1zM8 2.56h1v2.56h-1zM11 2.56h1v2.56h-1zM16 2.56h1v2.56h-1zM17 2.56h1v2.56h-1zM18 2.56h1v2.56h-1zM19 2.56h1v2.56h-1zM20 2.56h1v2.56h-1zM23 2.56h1v2.56h-1zM26 2.56h1v2.56h-1zM30 2.56h1v2.56h-1zM43 2.56h1v2.56h-1zM44 2.56h1v2.56h-1zM53 2.56h1v2.56h-1zM55 2.56h1v2.56h-1zM57 2.56h1v2.56h-1zM58 2.56h1v2.56h-1zM61 2.56h1v2.56h-1zM63 2.56h1v2.56h-1zM64 2.56h1v2.56h-1zM71 2.56h1v2.56h-1zM77 2.56h1v2.56h-1zM0 5.12h1v2.56h-1zM1 5.12h1v2.56h-1zM8 5.12h1v2.56h-1zM12 5.12h1v2.56h-1zM14 5.12h1v2.56h-1zM16 5.12h1v2.56h-1zM17 5.12h1v2.56h-1zM26 5.12h1v2.56h-1zM30 5.12h1v2.56h-1zM37 5.12h1v2.56h-1zM38 5.12h1v2.56h-1zM39 5.12h1v2.56h-1zM40 5.12h1v2.56h-1zM43 5.12h1v2.56h-1zM56 5.12h1v2.56h-1zM58 5.12h1v2.56h-1zM59 5.12h1v2.56h-1zM60 5.12h1v2.56h-1zM61 5.12h1v2.56h-1zM63 5.12h1v2.56h-1zM68 5.12h1v2.56h-1zM77 5.12h1v2.56h-1zM0 7.68h1v2.56h-1zM2 7.68h1v2.56h-1zM3 7.68h1v2.56h-1zM12 7.68h1v2.56h-1zM17 7.68h1v2.56h-1zM22 7.68h1v2.56h-1zM27 7.68h1v2.56h-1zM38 7.68h1v2.56h-1zM44 7.68h1v2.56h-1zM55 7.68h1v2.56h-1zM56 7.68h1v2.56h-1zM60 7.68h1v2.56h-1zM63 7.68h1v2.56h-1zM68 7.68h1v2.56h-1zM69 7.68h1v2.56h-1zM74 7.68h1v2.56h-1zM77 7.68h1v2.56h-1zM78 7.68h1v2.56h-1zM79 7.68h1v2.56h-1zM0 10.24h1v2.56h-1zM2 10.24h1v2.56h-1zM3 10.24h1v2.56h-1zM4 10.24h1v2.56h-1zM13 10.24h1v2.56h-1zM22 10.24h1v2.56h-1zM23 10.24h1v2.56h-1zM24 10.24h1v2.56h-1zM34 10.24h1v2.56h-1zM36 10.24h1v2.56h-1zM37 10.24h1v2.56h-1zM39 10.24h1v2.56h-1zM41 10.24h1v2.56h-1zM43 10.24h1v2.56h-1zM48 10.24h1v2.56h-1zM49 10.24h1v2.56h-1zM52 10.24h1v2.56h-1zM60 10.24h1v2.56h-1zM62 10.24h1v2.56h-1zM63 10.24h1v2.56h-1zM64 10.24h1v2.56h-1zM66 10.24h1v2.56h-1zM68 10.24h1v2.56h-1zM69 10.24h1v2.56h-1zM70 10.24h1v2.56h-1zM74 10.24h1v2.56h-1zM77 10.24h1v2.56h-1zM78 10.24h1v2.56h-1zM0 12.80h1v2.56h-1zM3 12.80h1v2.56h-1zM4 12.80h1v2.56h-1zM6 12.80h1v2.56h-1zM9 12.80h1v2.56h-1zM10 12.80h1v2.56h-1zM12 12.80h1v2.56h-1zM14 12.80h1v2.56h-1zM18 12.80h1v2.56h-1zM22 12.80h1v2.56h-1zM24 12.80h1v2.56h-1zM25 12.80h1v2.56h-1zM33 12.80h1v2.56h-1zM34 12.80h1v2.56h-1zM36 12.80h1v2.56h-1zM39 12.80h1v2.56h-1zM43 12.80h1v2.56h-1zM44 12.80h1v2.56h-1zM45 12.80h1v2.56h-1zM46 12.80h1v2.56h-1zM47 12.80h1v2.56h-1zM48 12.80h1v2.56h-1zM50 12.80h1v2.56h-1zM53 12.80h1v2.56h-1zM60 12.80h1v2.56h-1zM62 12.80h1v2.56h-1zM64 12.80h1v2.56h-1zM70 12.80h1v2.56h-1zM74 12.80h1v2.56h-1zM77 12.80h1v2.56h-1zM78 12.80h1v2.56h-1zM0 15.36h1v2.56h-1zM2 15.36h1v2.56h-1zM3 15.36h1v2.56h-1zM5 15.36h1v2.56h-1zM12 15.36h1v2.56h-1zM13 15.36h1v2.56h-1zM15 15.36h1v2.56h-1zM16 15.36h1v2.56h-1zM24 15.36h1v2.56h-1zM34 15.36h1v2.56h-1zM35 15.36h1v2.56h-1zM39 15.36h1v2.56h-1zM40 15.36h1v2.56h-1zM44 15.36h1v2.56h-1zM46 15.36h1v2.56h-1zM47 15.36h1v2.56h-1zM50 15.36h1v2.56h-1zM52 15.36h1v2.56h-1zM53 15.36h1v2.56h-1zM60 15.36h1v2.56h-1zM61 15.36h1v2.56h-1zM62 15.36h1v2.56h-1zM64 15.36h1v2.56h-1zM78 15.36h1v2.56h-1zM79 15.36h1v2.56h-1zM2 17.92h1v2.56h-1zM5 17.92h1v2.56h-1zM6 17.92h1v2.56h-1zM10 17.92h1v2.56h-1zM15 17.92h1v2.56h-1zM17 17.92h1v2.56h-1zM29 17.92h1v2.56h-1zM30 17.92h1v2.56h-1zM33 17.92h1v2.56h-1zM38 17.92h1v2.56h-1zM39 17.92h1v2.56h-1zM40 17.92h1v2.56h-1zM42 17.92h1v2.56h-1zM44 17.92h1v2.56h-1zM45 17.92h1v2.56h-1zM46 17.92h1v2.56h-1zM49 17.92h1v2.56h-1zM54 17.92h1v2.56h-1zM62 17.92h1v2.56h-1zM64 17.92h1v2.56h-1zM66 17.92h1v2.56h-1zM67 17.92h1v2.56h-1zM76 17.92h1v2.56h-1zM78 17.92h1v2.56h-1zM79 17.92h1v2.56h-1zM0 20.48h1v2.56h-1zM5 20.48h1v2.56h-1zM6 20.48h1v2.56h-1zM11 20.48h1v2.56h-1zM12 20.48h1v2.56h-1zM15 20.48h1v2.56h-1zM16 20.48h1v2.56h-1zM17 20.48h1v2.56h-1zM19 20.48h1v2.56h-1zM26 20.48h1v2.56h-1zM31 20.48h1v2.56h-1zM35 20.48h1v2.56h-1zM37 20.48h1v2.56h-1zM38 20.48h1v2.56h-1zM39 20.48h1v2.56h-1zM42 20.48h1v2.56h-1zM44 20.48h1v2.56h-1zM45 20.48h1v2.56h-1zM46 20.48h1v2.56h-1zM48 20.48h1v2.56h-1zM49 20.48h1v2.56h-1zM52 20.48h1v2.56h-1zM58 20.48h1v2.56h-1zM59 20.48h1v2.56h-1zM62 20.48h1v2.56h-1zM64 20.48h1v2.56h-1zM65 20.48h1v2.56h-1zM66 20.48h1v2.56h-1zM67 20.48h1v2.56h-1zM70 20.48h1v2.56h-1zM74 20.48h1v2.56h-1zM75 20.48h1v2.56h-1zM76 20.48h1v2.56h-1zM79 20.48h1v2.56h-1zM1 23.04h1v2.56h-1zM4 23.04h1v2.56h-1zM5 23.04h1v2.56h-1zM6 23.04h1v2.56h-1zM12 23.04h1v2.56h-1zM13 23.04h1v2.56h-1zM15 23.04h1v2.56h-1zM16 23.04h1v2.56h-1zM18 23.04h1v2.56h-1zM19 23.04h1v2.56h-1zM21 23.04h1v2.56h-1zM26 23.04h1v2.56h-1zM37 23.04h1v2.56h-1zM38 23.04h1v2.56h-1zM44 23.04h1v2.56h-1zM45 23.04h1v2.56h-1zM48 23.04h1v2.56h-1zM49 23.04h1v2.56h-1zM54 23.04h1v2.56h-1zM56 23.04h1v2.56h-1zM57 23.04h1v2.56h-1zM65 23.04h1v2.56h-1zM69 23.04h1v2.56h-1zM70 23.04h1v2.56h-1zM77 23.04h1v2.56h-1zM1 25.60h1v2.56h-1zM2 25.60h1v2.56h-1zM4 25.60h1v2.56h-1zM5 25.60h1v2.56h-1zM6 25.60h1v2.56h-1zM12 25.60h1v2.56h-1zM15 25.60h1v2.56h-1zM21 25.60h1v2.56h-1zM24 25.60h1v2.56h-1zM31 25.60h1v2.56h-1zM44 25.60h1v2.56h-1zM45 25.60h1v2.56h-1zM48 25.60h1v2.56h-1zM49 25.60h1v2.56h-1zM53 25.60h1v2.56h-1zM54 25.60h1v2.56h-1zM56 25.60h1v2.56h-1zM57 25.60h1v2.56h-1zM65 25.60h1v2.56h-1zM67 25.60h1v2.56h-1zM70 25.60h1v2.56h-1zM72 25.60h1v2.56h-1zM1 28.16h1v2.56h-1zM3 28.16h1v2.56h-1zM4 28.16h1v2.56h-1zM6 28.16h1v2.56h-1zM8 28.16h1v2.56h-1zM12 28.16h1v2.56h-1zM24 28.16h1v2.56h-1zM28 28.16h1v2.56h-1zM30 28.16h1v2.56h-1zM34 28.16h1v2.56h-1zM38 28.16h1v2.56h-1zM40 28.16h1v2.56h-1zM41 28.16h1v2.56h-1zM44 28.16h1v2.56h-1zM48 28.16h1v2.56h-1zM49 28.16h1v2.56h-1zM53 28.16h1v2.56h-1zM54 28.16h1v2.56h-1zM57 28.16h1v2.56h-1zM60 28.16h1v2.56h-1zM63 28.16h1v2.56h-1zM64 28.16h1v2.56h-1zM65 28.16h1v2.56h-1zM67 28.16h1v2.56h-1zM70 28.16h1v2.56h-1zM72 28.16h1v2.56h-1zM0 30.72h1v2.56h-1zM1 30.72h1v2.56h-1zM3 30.72h1v2.56h-1zM10 30.72h1v2.56h-1zM20 30.72h1v2.56h-1zM22 30.72h1v2.56h-1zM28 30.72h1v2.56h-1zM30 30.72h1v2.56h-1zM37 30.72h1v2.56h-1zM44 30.72h1v2.56h-1zM46 30.72h1v2.56h-1zM49 30.72h1v2.56h-1zM51 30.72h1v2.56h-1zM53 30.72h1v2.56h-1zM57 30.72h1v2.56h-1zM65 30.72h1v2.56h-1zM68 30.72h1v2.56h-1zM70 30.72h1v2.56h-1zM72 30.72h1v2.56h-1zM1 33.28h1v2.56h-1zM2 33.28h1v2.56h-1zM3 33.28h1v2.56h-1zM8 33.28h1v2.56h-1zM12 33.28h1v2.56h-1zM13 33.28h1v2.56h-1zM18 33.28h1v2.56h-1zM20 33.28h1v2.56h-1zM22 33.28h1v2.56h-1zM27 33.28h1v2.56h-1zM34 33.28h1v2.56h-1zM36 33.28h1v2.56h-1zM40 33.28h1v2.56h-1zM44 33.28h1v2.56h-1zM46 33.28h1v2.56h-1zM48 33.28h1v2.56h-1zM53 33.28h1v2.56h-1zM56 33.28h1v2.56h-1zM63 33.28h1v2.56h-1zM67 33.28h1v2.56h-1zM72 33.28h1v2.56h-1zM75 33.28h1v2.56h-1zM1 35.84h1v2.56h-1zM2 35.84h1v2.56h-1zM13 35.84h1v2.56h-1zM16 35.84h1v2.56h-1zM18 35.84h1v2.56h-1zM19 35.84h1v2.56h-1zM20 35.84h1v2.56h-1zM24 35.84h1v2.56h-1zM25 35.84h1v2.56h-1zM27 35.84h1v2.56h-1zM36 35.84h1v2.56h-1zM42 35.84h1v2.56h-1zM44 35.84h1v2.56h-1zM47 35.84h1v2.56h-1zM48 35.84h1v2.56h-1zM52 35.84h1v2.56h-1zM53 35.84h1v2.56h-1zM57 35.84h1v2.56h-1zM64 35.84h1v2.56h-1zM65 35.84h1v2.56h-1zM71 35.84h1v2.56h-1zM72 35.84h1v2.56h-1zM75 35.84h1v2.56h-1zM76 35.84h1v2.56h-1zM2 38.40h1v2.56h-1zM13 38.40h1v2.56h-1zM14 38.40h1v2.56h-1zM16 38.40h1v2.56h-1zM19 38.40h1v2.56h-1zM25 38.40h1v2.56h-1zM27 38.40h1v2.56h-1zM28 38.40h1v2.56h-1zM31 38.40h1v2.56h-1zM38 38.40h1v2.56h-1zM44 38.40h1v2.56h-1zM47 38.40h1v2.56h-1zM52 38.40h1v2.56h-1zM57 38.40h1v2.56h-1zM59 38.40h1v2.56h-1zM61 38.40h1v2.56h-1zM62 38.40h1v2.56h-1zM66 38.40h1v2.56h-1zM70 38.40h1v2.56h-1zM71 38.40h1v2.56h-1zM72 38.40h1v2.56h-1zM0 40.96h1v2.56h-1zM8 40.96h1v2.56h-1zM9 40.96h1v2.56h-1zM13 40.96h1v2.56h-1zM14 40.96h1v2.56h-1zM19 40.96h1v2.56h-1zM25 40.96h1v2.56h-1zM26 40.96h1v2.56h-1zM27 40.96h1v2.56h-1zM28 40.96h1v2.56h-1zM29 40.96h1v2.56h-1zM36 40.96h1v2.56h-1zM37 40.96h1v2.56h-1zM38 40.96h1v2.56h-1zM42 40.96h1v2.56h-1zM44 40.96h1v2.56h-1zM47 40.96h1v2.56h-1zM49 40.96h1v2.56h-1zM52 40.96h1v2.56h-1zM53 40.96h1v2.56h-1zM58 40.96h1v2.56h-1zM62 40.96h1v2.56h-1zM67 40.96h1v2.56h-1zM69 40.96h1v2.56h-1zM70 40.96h1v2.56h-1zM71 40.96h1v2.56h-1zM72 40.96h1v2.56h-1zM0 43.52h1v2.56h-1zM8 43.52h1v2.56h-1zM9 43.52h1v2.56h-1zM13 43.52h1v2.56h-1zM16 43.52h1v2.56h-1zM21 43.52h1v2.56h-1zM27 43.52h1v2.56h-1zM28 43.52h1v2.56h-1zM32 43.52h1v2.56h-1zM33 43.52h1v2.56h-1zM35 43.52h1v2.56h-1zM36 43.52h1v2.56h-1zM37 43.52h1v2.56h-1zM38 43.52h1v2.56h-1zM43 43.52h1v2.56h-1zM49 43.52h1v2.56h-1zM51 43.52h1v2.56h-1zM53 43.52h1v2.56h-1zM56 43.52h1v2.56h-1zM58 43.52h1v2.56h-1zM62 43.52h1v2.56h-1zM67 43.52h1v2.56h-1zM68 43.52h1v2.56h-1zM71 43.52h1v2.56h-1zM0 46.08h1v2.56h-1zM11 46.08h1v2.56h-1zM12 46.08h1v2.56h-1zM13 46.08h1v2.56h-1zM21 46.08h1v2.56h-1zM24 46.08h1v2.56h-1zM27 46.08h1v2.56h-1zM31 46.08h1v2.56h-1zM32 46.08h1v2.56h-1zM34 46.08h1v2.56h-1zM35 46.08h1v2.56h-1zM36 46.08h1v2.56h-1zM37 46.08h1v2.56h-1zM39 46.08h1v2.56h-1zM43 46.08h1v2.56h-1zM52 46.08h1v2.56h-1zM55 46.08h1v2.56h-1zM57 46.08h1v2.56h-1zM58 46.08h1v2.56h-1zM59 46.08h1v2.56h-1zM60 46.08h1v2.56h-1zM62 46.08h1v2.56h-1zM64 46.08h1v2.56h-1zM65 46.08h1v2.56h-1zM66 46.08h1v2.56h-1zM71 46.08h1v2.56h-1zM72 46.08h1v2.56h-1zM73 46.08h1v2.56h-1zM0 48.64h1v2.56h-1zM11 48.64h1v2.56h-1zM12 48.64h1v2.56h-1zM27 48.64h1v2.56h-1zM30 48.64h1v2.56h-1zM37 48.64h1v2.56h-1zM45 48.64h1v2.56h-1zM52 48.64h1v2.56h-1zM55 48.64h1v2.56h-1zM57 48.64h1v2.56h-1zM58 48.64h1v2.56h-1zM59 48.64h1v2.56h-1zM61 48.64h1v2.56h-1zM62 48.64h1v2.56h-1zM63 48.64h1v2.56h-1zM65 48.64h1v2.56h-1zM68 48.64h1v2.56h-1zM69 48.64h1v2.56h-1zM71 48.64h1v2.56h-1zM72 48.64h1v2.56h-1zM73 48.64h1v2.56h-1zM79 48.64h1v2.56h-1zM3 51.20h1v2.56h-1zM11 51.20h1v2.56h-1zM27 51.20h1v2.56h-1zM31 51.20h1v2.56h-1zM44 51.20h1v2.56h-1zM57 51.20h1v2.56h-1zM58 51.20h1v2.56h-1zM59 51.20h1v2.56h-1zM61 51.20h1v2.56h-1zM63 51.20h1v2.56h-1zM66 51.20h1v2.56h-1zM70 51.20h1v2.56h-1zM71 51.20h1v2.56h-1zM72 51.20h1v2.56h-1zM73 51.20h1v2.56h-1zM74 51.20h1v2.56h-1zM1 53.76h1v2.56h-1zM3 53.76h1v2.56h-1zM5 53.76h1v2.56h-1zM6 53.76h1v2.56h-1zM10 53.76h1v2.56h-1zM11 53.76h1v2.56h-1zM21 53.76h1v2.56h-1zM27 53.76h1v2.56h-1zM28 53.76h1v2.56h-1zM31 53.76h1v2.56h-1zM32 53.76h1v2.56h-1zM33 53.76h1v2.56h-1zM35 53.76h1v2.56h-1zM37 53.76h1v2.56h-1zM41 53.76h1v2.56h-1zM43 53.76h1v2.56h-1zM44 53.76h1v2.56h-1zM51 53.76h1v2.56h-1zM53 53.76h1v2.56h-1zM55 53.76h1v2.56h-1zM56 53.76h1v2.56h-1zM59 53.76h1v2.56h-1zM61 53.76h1v2.56h-1zM63 53.76h1v2.56h-1zM64 53.76h1v2.56h-1zM65 53.76h1v2.56h-1zM66 53.76h1v2.56h-1zM70 53.76h1v2.56h-1zM71 53.76h1v2.56h-1zM74 53.76h1v2.56h-1zM1 56.32h1v2.56h-1zM5 56.32h1v2.56h-1zM7 56.32h1v2.56h-1zM11 56.32h1v2.56h-1zM14 56.32h1v2.56h-1zM15 56.32h1v2.56h-1zM16 56.32h1v2.56h-1zM28 56.32h1v2.56h-1zM33 56.32h1v2.56h-1zM44 56.32h1v2.56h-1zM51 56.32h1v2.56h-1zM53 56.32h1v2.56h-1zM56 56.32h1v2.56h-1zM63 56.32h1v2.56h-1zM66 56.32h1v2.56h-1zM67 56.32h1v2.56h-1zM68 56.32h1v2.56h-1zM70 56.32h1v2.56h-1zM71 56.32h1v2.56h-1zM73 56.32h1v2.56h-1zM3 58.88h1v2.56h-1zM12 58.88h1v2.56h-1zM14 58.88h1v2.56h-1zM19 58.88h1v2.56h-1zM22 58.88h1v2.56h-1zM23 58.88h1v2.56h-1zM28 58.88h1v2.56h-1zM29 58.88h1v2.56h-1zM33 58.88h1v2.56h-1zM37 58.88h1v2.56h-1zM39 58.88h1v2.56h-1zM44 58.88h1v2.56h-1zM46 58.88h1v2.56h-1zM56 58.88h1v2.56h-1zM62 58.88h1v2.56h-1zM67 58.88h1v2.56h-1zM68 58.88h1v2.56h-1zM70 58.88h1v2.56h-1zM73 58.88h1v2.56h-1zM76 58.88h1v2.56h-1zM77 58.88h1v2.56h-1zM8 61.44h1v2.56h-1zM12 61.44h1v2.56h-1zM13 61.44h1v2.56h-1zM23 61.44h1v2.56h-1zM27 61.44h1v2.56h-1zM28 61.44h1v2.56h-1zM33 61.44h1v2.56h-1zM41 61.44h1v2.56h-1zM48 61.44h1v2.56h-1zM56 61.44h1v2.56h-1zM64 61.44h1v2.56h-1zM67 61.44h1v2.56h-1zM70 61.44h1v2.56h-1zM71 61.44h1v2.56h-1zM74 61.44h1v2.56h-1zM78 61.44h1v2.56h-1z" fill="#ffff00"/>
<path d="M12 0.00h1v2.56h-1zM59 0.00h1v2.56h-1zM61 0.00h1v2.56h-1zM1 2.56h1v2.56h-1zM60 2.56h1v2.56h-1zM66 2.56h1v2.56h-1zM29 5.12h1v2.56h-1zM41 5.12h1v2.56h-1zM44 5.12h1v2.56h-1zM73 5.12h1v2.56h-1zM8 7.68h1v2.56h-1zM24 7.68h1v2.56h-1zM32 7.68h1v2.56h-1zM41 7.68h1v2.56h-1zM42 7.68h1v2.56h-1zM43 7.68h1v2.56h-1zM52 7.68h1v2.56h-1zM21 10.24h1v2.56h-1zM65 10.24h1v2.56h-1zM15 12.80h1v2.56h-1zM21 12.80h1v2.56h-1zM23 12.80h1v2.56h-1zM49 12.80h1v2.56h-1zM56 12.80h1v2.56h-1zM10 15.36h1v2.56h-1zM18 15.36h1v2.56h-1zM37 15.36h1v2.56h-1zM56 15.36h1v2.56h-1zM7 17.92h1v2.56h-1zM23 17.92h1v2.56h-1zM35 17.92h1v2.56h-1zM36 17.92h1v2.56h-1zM56 17.92h1v2.56h-1zM60 17.92h1v2.56h-1zM70 17.92h1v2.56h-1zM23 20.48h1v2.56h-1zM36 20.48h1v2.56h-1zM56 20.48h1v2.56h-1zM23 23.04h1v2.56h-1zM34 23.04h1v2.56h-1zM67 23.04h1v2.56h-1zM23 25.60h1v2.56h-1zM46 25.60h1v2.56h-1zM51 25.60h1v2.56h-1zM55 25.60h1v2.56h-1zM23 28.16h1v2.56h-1zM32 28.16h1v2.56h-1zM47 28.16h1v2.56h-1zM23 30.72h1v2.56h-1zM47 30.72h1v2.56h-1zM48 30.72h1v2.56h-1zM56 30.72h1v2.56h-1zM64 30.72h1v2.56h-1zM26 33.28h1v2.56h-1zM55 33.28h1v2.56h-1zM58 33.28h1v2.56h-1zM26 35.84h1v2.56h-1zM55 35.84h1v2.56h-1zM18 38.40h1v2.56h-1zM49 38.40h1v2.56h-1zM1 40.96h1v2.56h-1zM31 40.96h1v2.56h-1zM34 40.96h1v2.56h-1zM43 40.96h1v2.56h-1zM73 40.96h1v2.56h-1zM30 43.52h1v2.56h-1zM73 43.52h1v2.56h-1zM30 46.08h1v2.56h-1zM29 48.64h1v2.56h-1zM32 48.64h1v2.56h-1zM28 51.20h1v2.56h-1zM30 51.20h1v2.56h-1zM32 51.20h1v2.56h-1zM45 51.20h1v2.56h-1zM45 53.76h1v2.56h-1zM69 53.76h1v2.56h-1zM73 53.76h1v2.56h-1zM20 56.32h1v2.56h-1zM42 56.32h1v2.56h-1zM50 56.32h1v2.56h-1zM58 56.32h1v2.56h-1zM62 56.32h1v2.56h-1zM20 58.88h1v2.56h-1zM42 58.88h1v2.56h-1zM50 58.88h1v2.56h-1zM57 58.88h1v2.56h-1zM20 61.44h1v2.56h-1zM22 61.44h1v2.56h-1zM50 61.44h1v2.56h-1z" fill="#c8ff38"/>
<path d="M13 0.00h1v2.56h-1zM32 0.00h1v2.56h-1zM46 0.00h1v2.56h-1zM49 0.00h1v2.56h-1zM51 0.00h1v2.56h-1zM58 0.00h1v2.56h-1zM63 0.00h1v2.56h-1zM65 0.00h1v2.56h-1zM66 0.00h1v2.56h-1zM75 0.00h1v2.56h-1zM76 0.00h1v2.56h-1zM32 2.56h1v2.56h-1zM33 2.56h1v2.56h-1zM46 2.56h1v2.56h-1zM49 2.56h1v2.56h-1zM62 2.56h1v2.56h-1zM65 2.56h1v2.56h-1zM68 2.56h1v2.56h-1zM72 2.56h1v2.56h-1zM78 2.56h1v2.56h-1zM2 5.12h1v2.56h-1zM23 5.12h1v2.56h-1zM27 5.12h1v2.56h-1zM28 5.12h1v2.56h-1zM31 5.12h1v2.56h-1zM35 5.12h1v2.56h-1zM51 5.12h1v2.56h-1zM53 5.12h1v2.56h-1zM69 5.12h1v2.56h-1zM72 5.12h1v2.56h-1zM78 5.12h1v2.56h-1zM79 5.12h1v2.56h-1zM5 7.68h1v2.56h-1zM18 7.68h1v2.56h-1zM20 7.68h1v2.56h-1zM23 7.68h1v2.56h-1zM28 7.68h1v2.56h-1zM29 7.68h1v2.56h-1zM35 7.68h1v2.56h-1zM37 7.68h1v2.56h-1zM39 7.68h1v2.56h-1zM53 7.68h1v2.56h-1zM58 7.68h1v2.56h-1zM76 7.68h1v2.56h-1zM1 10.24h1v2.56h-1zM5 10.24h1v2.56h-1zM7 10.24h1v2.56h-1zM11 10.24h1v2.56h-1zM17 10.24h1v2.56h-1zM18 10.24h1v2.56h-1zM19 10.24h1v2.56h-1zM35 10.24h1v2.56h-1zM54 10.24h1v2.56h-1zM58 10.24h1v2.56h-1zM76 10.24h1v2.56h-1zM7 12.80h1v2.56h-1zM17 12.80h1v2.56h-1zM29 12.80h1v2.56h-1zM35 12.80h1v2.56h-1zM54 12.80h1v2.56h-1zM66 12.80h1v2.56h-1zM67 12.80h1v2.56h-1zM68 12.80h1v2.56h-1zM4 15.36h1v2.56h-1zM9 15.36h1v2.56h-1zM17 15.36h1v2.56h-1zM20 15.36h1v2.56h-1zM29 15.36h1v2.56h-1zM38 15.36h1v2.56h-1zM42 15.36h1v2.56h-1zM63 15.36h1v2.56h-1zM67 15.36h1v2.56h-1zM68 15.36h1v2.56h-1zM69 15.36h1v2.56h-1zM70 15.36h1v2.56h-1zM9 17.92h1v2.56h-1zM18 17.92h1v2.56h-1zM20 17.92h1v2.56h-1zM31 17.92h1v2.56h-1zM47 17.92h1v2.56h-1zM52 17.92h1v2.56h-1zM68 17.92h1v2.56h-1zM7 20.48h1v2.56h-1zM8 20.48h1v2.56h-1zM9 20.48h1v2.56h-1zM18 20.48h1v2.56h-1zM20 20.48h1v2.56h-1zM33 20.48h1v2.56h-1zM47 20.48h1v2.56h-1zM60 20.48h1v2.56h-1zM68 20.48h1v2.56h-1zM77 20.48h1v2.56h-1zM7 23.04h1v2.56h-1zM9 23.04h1v2.56h-1zM20 23.04h1v2.56h-1zM25 23.04h1v2.56h-1zM36 23.04h1v2.56h-1zM42 23.04h1v2.56h-1zM47 23.04h1v2.56h-1zM58 23.04h1v2.56h-1zM60 23.04h1v2.56h-1zM64 23.04h1v2.56h-1zM76 23.04h1v2.56h-1zM7 25.60h1v2.56h-1zM19 25.60h1v2.56h-1zM20 25.60h1v2.56h-1zM25 25.60h1v2.56h-1zM38 25.60h1v2.56h-1zM42 25.60h1v2.56h-1zM58 25.60h1v2.56h-1zM59 25.60h1v2.56h-1zM60 25.60h1v2.56h-1zM63 25.60h1v2.56h-1zM64 25.60h1v2.56h-1zM0 28.16h1v2.56h-1zM22 28.16h1v2.56h-1zM42 28.16h1v2.56h-1zM46 28.16h1v2.56h-1zM55 28.16h1v2.56h-1zM58 28.16h1v2.56h-1zM62 28.16h1v2.56h-1zM78 28.16h1v2.56h-1zM6 30.72h1v2.56h-1zM13 30.72h1v2.56h-1zM42 30.72h1v2.56h-1zM79 30.72h1v2.56h-1zM10 33.28h1v2.56h-1zM17 33.28h1v2.56h-1zM39 33.28h1v2.56h-1zM42 33.28h1v2.56h-1zM49 33.28h1v2.56h-1zM57 33.28h1v2.56h-1zM69 33.28h1v2.56h-1zM74 33.28h1v2.56h-1zM8 35.84h1v2.56h-1zM39 35.84h1v2.56h-1zM59 35.84h1v2.56h-1zM63 35.84h1v2.56h-1zM66 35.84h1v2.56h-1zM69 35.84h1v2.56h-1zM74 35.84h1v2.56h-1zM0 38.40h1v2.56h-1zM8 38.40h1v2.56h-1zM43 38.40h1v2.56h-1zM50 38.40h1v2.56h-1zM51 38.40h1v2.56h-1zM53 38.40h1v2.56h-1zM54 38.40h1v2.56h-1zM69 38.40h1v2.56h-1zM76 38.40h1v2.56h-1zM79 38.40h1v2.56h-1zM15 40.96h1v2.56h-1zM17 40.96h1v2.56h-1zM24 40.96h1v2.56h-1zM40 40.96h1v2.56h-1zM46 40.96h1v2.56h-1zM50 40.96h1v2.56h-1zM57 40.96h1v2.56h-1zM61 40.96h1v2.56h-1zM79 40.96h1v2.56h-1zM3 43.52h1v2.56h-1zM12 43.52h1v2.56h-1zM17 43.52h1v2.56h-1zM31 43.52h1v2.56h-1zM40 43.52h1v2.56h-1zM46 43.52h1v2.56h-1zM47 43.52h1v2.56h-1zM52 43.52h1v2.56h-1zM66 43.52h1v2.56h-1zM79 43.52h1v2.56h-1zM3 46.08h1v2.56h-1zM5 46.08h1v2.56h-1zM17 46.08h1v2.56h-1zM28 46.08h1v2.56h-1zM29 46.08h1v2.56h-1zM40 46.08h1v2.56h-1zM47 46.08h1v2.56h-1zM53 46.08h1v2.56h-1zM67 46.08h1v2.56h-1zM3 48.64h1v2.56h-1zM4 48.64h1v2.56h-1zM26 48.64h1v2.56h-1zM31 48.64h1v2.56h-1zM35 48.64h1v2.56h-1zM40 48.64h1v2.56h-1zM43 48.64h1v2.56h-1zM47 48.64h1v2.56h-1zM49 48.64h1v2.56h-1zM53 48.64h1v2.56h-1zM60 48.64h1v2.56h-1zM64 48.64h1v2.56h-1zM77 48.64h1v2.56h-1zM4 51.20h1v2.56h-1zM26 51.20h1v2.56h-1zM35 51.20h1v2.56h-1zM40 51.20h1v2.56h-1zM47 51.20h1v2.56h-1zM48 51.20h1v2.56h-1zM52 51.20h1v2.56h-1zM60 51.20h1v2.56h-1zM64 51.20h1v2.56h-1zM76 51.20h1v2.56h-1zM77 51.20h1v2.56h-1zM4 53.76h1v2.56h-1zM15 53.76h1v2.56h-1zM16 53.76h1v2.56h-1zM18 53.76h1v2.56h-1zM26 53.76h1v2.56h-1zM34 53.76h1v2.56h-1zM47 53.76h1v2.56h-1zM60 53.76h1v2.56h-1zM6 56.32h1v2.56h-1zM18 56.32h1v2.56h-1zM23 56.32h1v2.56h-1zM26 56.32h1v2.56h-1zM35 56.32h1v2.56h-1zM41 56.32h1v2.56h-1zM47 56.32h1v2.56h-1zM54 56.32h1v2.56h-1zM74 56.32h1v2.56h-1zM75 56.32h1v2.56h-1zM77 56.32h1v2.56h-1zM18 58.88h1v2.56h-1zM31 58.88h1v2.56h-1zM36 58.88h1v2.56h-1zM47 58.88h1v2.56h-1zM49 58.88h1v2.56h-1zM59 58.88h1v2.56h-1zM71 58.88h1v2.56h-1zM72 58.88h1v2.56h-1zM75 58.88h1v2.56h-1zM78 58.88h1v2.56h-1zM0 61.44h1v2.56h-1zM5 61.44h1v2.56h-1zM7 61.44h1v2.56h-1zM15 61.44h1v2.56h-1zM19 61.44h1v2.56h-1zM38 61.44h1v2.56h-1zM47 61.44h1v2.56h-1zM49 61.44h1v2.56h-1zM57 61.44h1v2.56h-1zM68 61.44h1v2.56h-1zM72 61.44h1v2.56h-1z" fill="#ffa800"/>
</pattern>
<linearGradient id="fl" x1="0" x2="1"><stop offset="0" stop-color="#0000c0" stop-opacity="0"/><stop offset="0.3" stop-color="#0000f0"/><stop offset="0.55" stop-color="#0070ff"/><stop offset="0.74" stop-color="#00d0ff"/><stop offset="0.88" stop-color="#10f8ff"/><stop offset="1" stop-color="#40ffd0"/></linearGradient>
<linearGradient id="fr" x1="1" x2="0"><stop offset="0" stop-color="#0000c0" stop-opacity="0"/><stop offset="0.3" stop-color="#0000f0"/><stop offset="0.55" stop-color="#0070ff"/><stop offset="0.74" stop-color="#00d0ff"/><stop offset="0.88" stop-color="#10f8ff"/><stop offset="1" stop-color="#40ffd0"/></linearGradient>
<linearGradient id="hb" x1="0" x2="1"><stop offset="0" stop-color="#0030f0"/><stop offset="1" stop-color="#0038ff"/></linearGradient>
<pattern id="bf" patternUnits="userSpaceOnUse" x="0" y="459" width="38" height="10">
<rect x="0" y="0" width="1" height="7" fill="#00d8ff"/><rect x="0" y="7" width="1" height="3" fill="#0040ff"/>
<rect x="1" y="0" width="1" height="6" fill="#00c0ff"/><rect x="1" y="6" width="1" height="3" fill="#0040ff"/>
<rect x="2" y="0" width="1" height="7" fill="#00d8ff"/><rect x="2" y="7" width="1" height="3" fill="#0040ff"/>
<rect x="3" y="0" width="1" height="6" fill="#00d8ff"/><rect x="3" y="6" width="1" height="2" fill="#0040ff"/>
<rect x="4" y="0" width="1" height="6" fill="#20e8ff"/><rect x="4" y="6" width="1" height="3" fill="#0040ff"/>
<rect x="5" y="0" width="1" height="5" fill="#00c0ff"/><rect x="5" y="5" width="1" height="2" fill="#0040ff"/>
<rect x="6" y="0" width="1" height="6" fill="#00d8ff"/><rect x="6" y="6" width="1" height="3" fill="#0040ff"/>
<rect x="7" y="0" width="1" height="7" fill="#20e8ff"/><rect x="7" y="7" width="1" height="3" fill="#0040ff"/>
<rect x="8" y="0" width="1" height="7" fill="#00c0ff"/><rect x="8" y="7" width="1" height="2" fill="#0040ff"/>
<rect x="9" y="0" width="1" height="7" fill="#40ffd0"/><rect x="9" y="7" width="1" height="3" fill="#0040ff"/>
<rect x="10" y="0" width="1" height="6" fill="#20e8ff"/><rect x="10" y="6" width="1" height="2" fill="#0040ff"/>
<rect x="11" y="0" width="1" height="5" fill="#00d8ff"/><rect x="11" y="5" width="1" height="2" fill="#0040ff"/>
<rect x="12" y="0" width="1" height="3" fill="#20e8ff"/><rect x="12" y="3" width="1" height="3" fill="#0040ff"/>
<rect x="13" y="0" width="1" height="4" fill="#10ffe8"/><rect x="13" y="4" width="1" height="3" fill="#0040ff"/>
<rect x="14" y="0" width="1" height="4" fill="#00d8ff"/><rect x="14" y="4" width="1" height="2" fill="#0040ff"/>
<rect x="15" y="0" width="1" height="3" fill="#00c0ff"/><rect x="15" y="3" width="1" height="2" fill="#0040ff"/>
<rect x="16" y="0" width="1" height="3" fill="#00d8ff"/><rect x="16" y="3" width="1" height="3" fill="#0040ff"/>
<rect x="17" y="0" width="1" height="7" fill="#00c0ff"/><rect x="17" y="7" width="1" height="2" fill="#0040ff"/>
<rect x="18" y="0" width="1" height="6" fill="#40ffd0"/><rect x="18" y="6" width="1" height="3" fill="#0040ff"/>
<rect x="19" y="0" width="1" height="6" fill="#00c0ff"/><rect x="19" y="6" width="1" height="3" fill="#0040ff"/>
<rect x="20" y="0" width="1" height="7" fill="#00c0ff"/><rect x="20" y="7" width="1" height="3" fill="#0040ff"/>
<rect x="21" y="0" width="1" height="7" fill="#00c0ff"/><rect x="21" y="7" width="1" height="3" fill="#0040ff"/>
<rect x="22" y="0" width="1" height="5" fill="#20e8ff"/><rect x="22" y="5" width="1" height="2" fill="#0040ff"/>
<rect x="23" y="0" width="1" height="7" fill="#10ffe8"/><rect x="23" y="7" width="1" height="2" fill="#0040ff"/>
<rect x="24" y="0" width="1" height="5" fill="#00c0ff"/><rect x="24" y="5" width="1" height="3" fill="#0040ff"/>
<rect x="25" y="0" width="1" height="6" fill="#30f4ff"/><rect x="25" y="6" width="1" height="3" fill="#0040ff"/>
<rect x="26" y="0" width="1" height="6" fill="#30f4ff"/><rect x="26" y="6" width="1" height="3" fill="#0040ff"/>
<rect x="27" y="0" width="1" height="5" fill="#30f4ff"/><rect x="27" y="5" width="1" height="2" fill="#0040ff"/>
<rect x="28" y="0" width="1" height="6" fill="#10ffe8"/><rect x="28" y="6" width="1" height="3" fill="#0040ff"/>
<rect x="29" y="0" width="1" height="6" fill="#40ffd0"/><rect x="29" y="6" width="1" height="3" fill="#0040ff"/>
<rect x="30" y="0" width="1" height="6" fill="#30f4ff"/><rect x="30" y="6" width="1" height="2" fill="#0040ff"/>
<rect x="31" y="0" width="1" height="3" fill="#20e8ff"/><rect x="31" y="3" width="1" height="2" fill="#0040ff"/>
<rect x="32" y="0" width="1" height="3" fill="#00c0ff"/><rect x="32" y="3" width="1" height="3" fill="#0040ff"/>
<rect x="33" y="0" width="1" height="4" fill="#20e8ff"/><rect x="33" y="4" width="1" height="2" fill="#0040ff"/>
<rect x="34" y="0" width="1" height="4" fill="#10ffe8"/><rect x="34" y="4" width="1" height="3" fill="#0040ff"/>
<rect x="35" y="0" width="1" height="7" fill="#30f4ff"/><rect x="35" y="7" width="1" height="3" fill="#0040ff"/>
<rect x="36" y="0" width="1" height="6" fill="#00d8ff"/><rect x="36" y="6" width="1" height="2" fill="#0040ff"/>
<rect x="37" y="0" width="1" height="5" fill="#30f4ff"/><rect x="37" y="5" width="1" height="3" fill="#0040ff"/>
</pattern>
</defs>
<rect x="45" y="453.6" width="748" height="2.1" fill="#000ad8"/><rect x="45" y="455.7" width="748" height="3" fill="#0028ff"/><rect x="45" y="458.7" width="748" height="1.3" fill="#2060ff"/><rect x="45" y="460" width="748" height="1" fill="#0010d8"/>
<rect x="148.1" y="340" width="22.9" height="3" fill="url(#fl)"/>
<rect x="293" y="340" width="23.4" height="3" fill="url(#fr)"/>
<rect x="148.1" y="343" width="22.9" height="2" fill="url(#fl)"/>
<rect x="293" y="343" width="24.4" height="2" fill="url(#fr)"/>
<rect x="147.8" y="345" width="23.2" height="6" fill="url(#fl)"/>
<rect x="293" y="345" width="19.0" height="6" fill="url(#fr)"/>
<rect x="153.1" y="351" width="17.9" height="4" fill="url(#fl)"/>
<rect x="293" y="351" width="20.8" height="4" fill="url(#fr)"/>
<rect x="149.4" y="355" width="21.6" height="5" fill="url(#fl)"/>
<rect x="293" y="355" width="17.1" height="5" fill="url(#fr)"/>
<rect x="152.5" y="360" width="18.5" height="5" fill="url(#fl)"/>
<rect x="293" y="360" width="23.9" height="5" fill="url(#fr)"/>
<rect x="147.9" y="365" width="23.1" height="3" fill="url(#fl)"/>
<rect x="293" y="365" width="17.6" height="3" fill="url(#fr)"/>
<rect x="150.4" y="368" width="20.6" height="2" fill="url(#fl)"/>
<rect x="293" y="368" width="18.1" height="2" fill="url(#fr)"/>
<rect x="154.0" y="370" width="17.0" height="3" fill="url(#fl)"/>
<rect x="293" y="370" width="23.2" height="3" fill="url(#fr)"/>
<rect x="152.7" y="373" width="18.3" height="2" fill="url(#fl)"/>
<rect x="293" y="373" width="18.3" height="2" fill="url(#fr)"/>
<rect x="152.4" y="375" width="18.6" height="3" fill="url(#fl)"/>
<rect x="293" y="375" width="24.0" height="3" fill="url(#fr)"/>
<rect x="152.5" y="378" width="18.5" height="2" fill="url(#fl)"/>
<rect x="293" y="378" width="24.7" height="2" fill="url(#fr)"/>
<rect x="151.6" y="380" width="19.4" height="6" fill="url(#fl)"/>
<rect x="293" y="380" width="19.9" height="6" fill="url(#fr)"/>
<rect x="151.9" y="386" width="19.1" height="4" fill="url(#fl)"/>
<rect x="293" y="386" width="19.7" height="4" fill="url(#fr)"/>
<rect x="149.3" y="390" width="21.7" height="3" fill="url(#fl)"/>
<rect x="293" y="390" width="21.8" height="3" fill="url(#fr)"/>
<rect x="153.5" y="393" width="17.5" height="2" fill="url(#fl)"/>
<rect x="293" y="393" width="19.8" height="2" fill="url(#fr)"/>
<rect x="148.4" y="395" width="22.6" height="3" fill="url(#fl)"/>
<rect x="293" y="395" width="18.5" height="3" fill="url(#fr)"/>
<rect x="152.6" y="398" width="18.4" height="2" fill="url(#fl)"/>
<rect x="293" y="398" width="19.0" height="2" fill="url(#fr)"/>
<rect x="146.4" y="400" width="24.6" height="3" fill="url(#fl)"/>
<rect x="293" y="400" width="19.9" height="3" fill="url(#fr)"/>
<rect x="149.6" y="403" width="21.4" height="2" fill="url(#fl)"/>
<rect x="293" y="403" width="20.4" height="2" fill="url(#fr)"/>
<rect x="147.3" y="405" width="23.7" height="3" fill="url(#fl)"/>
<rect x="293" y="405" width="20.6" height="3" fill="url(#fr)"/>
<rect x="149.0" y="408" width="22.0" height="2" fill="url(#fl)"/>
<rect x="293" y="408" width="24.6" height="2" fill="url(#fr)"/>
<rect x="146.6" y="410" width="24.4" height="5" fill="url(#fl)"/>
<rect x="293" y="410" width="24.5" height="5" fill="url(#fr)"/>
<rect x="151.2" y="415" width="19.8" height="2" fill="url(#fl)"/>
<rect x="293" y="415" width="21.2" height="2" fill="url(#fr)"/>
<rect x="153.1" y="417" width="17.9" height="3" fill="url(#fl)"/>
<rect x="293" y="417" width="23.0" height="3" fill="url(#fr)"/>
<rect x="147.1" y="420" width="23.9" height="2" fill="url(#fl)"/>
<rect x="293" y="420" width="17.3" height="2" fill="url(#fr)"/>
<rect x="153.3" y="422" width="17.7" height="3" fill="url(#fl)"/>
<rect x="293" y="422" width="19.7" height="3" fill="url(#fr)"/>
<rect x="146.7" y="425" width="24.3" height="2" fill="url(#fl)"/>
<rect x="293" y="425" width="19.7" height="2" fill="url(#fr)"/>
<rect x="149.6" y="427" width="21.4" height="3" fill="url(#fl)"/>
<rect x="293" y="427" width="19.5" height="3" fill="url(#fr)"/>
<rect x="152.6" y="430" width="18.4" height="2" fill="url(#fl)"/>
<rect x="293" y="430" width="17.6" height="2" fill="url(#fr)"/>
<rect x="146.0" y="432" width="25.0" height="6" fill="url(#fl)"/>
<rect x="293" y="432" width="18.3" height="6" fill="url(#fr)"/>
<rect x="153.7" y="438" width="17.3" height="5" fill="url(#fl)"/>
<rect x="293" y="438" width="22.9" height="5" fill="url(#fr)"/>
<rect x="149.1" y="443" width="21.9" height="3" fill="url(#fl)"/>
<rect x="293" y="443" width="26.9" height="3" fill="url(#fr)"/>
<rect x="148.8" y="446" width="22.2" height="2" fill="url(#fl)"/>
<rect x="293" y="446" width="26.9" height="2" fill="url(#fr)"/>
<rect x="147.5" y="448" width="23.5" height="3" fill="url(#fl)"/>
<rect x="293" y="448" width="22.0" height="3" fill="url(#fr)"/>
<rect x="149.2" y="451" width="21.8" height="2" fill="url(#fl)"/>
<rect x="293" y="451" width="26.5" height="2" fill="url(#fr)"/>
<rect x="144.2" y="453" width="26.8" height="3" fill="url(#fl)"/>
<rect x="293" y="453" width="25.1" height="3" fill="url(#fr)"/>
<rect x="144.6" y="456" width="26.4" height="2" fill="url(#fl)"/>
<rect x="293" y="456" width="21.7" height="2" fill="url(#fr)"/>
<rect x="144.4" y="458" width="26.6" height="1" fill="url(#fl)"/>
<rect x="293" y="458" width="26.2" height="1" fill="url(#fr)"/>
<rect x="338.8" y="340" width="19.2" height="6" fill="url(#fl)"/>
<rect x="666.5" y="340" width="23.3" height="6" fill="url(#fr)"/>
<rect x="338.1" y="346" width="19.9" height="2" fill="url(#fl)"/>
<rect x="666.5" y="346" width="23.3" height="2" fill="url(#fr)"/>
<rect x="335.4" y="348" width="22.6" height="3" fill="url(#fl)"/>
<rect x="666.5" y="348" width="22.3" height="3" fill="url(#fr)"/>
<rect x="338.1" y="351" width="19.9" height="2" fill="url(#fl)"/>
<rect x="666.5" y="351" width="22.6" height="2" fill="url(#fr)"/>
<rect x="338.9" y="353" width="19.1" height="6" fill="url(#fl)"/>
<rect x="666.5" y="353" width="24.8" height="6" fill="url(#fr)"/>
<rect x="333.3" y="359" width="24.7" height="2" fill="url(#fl)"/>
<rect x="666.5" y="359" width="19.7" height="2" fill="url(#fr)"/>
<rect x="337.2" y="361" width="20.8" height="5" fill="url(#fl)"/>
<rect x="666.5" y="361" width="23.2" height="5" fill="url(#fr)"/>
<rect x="338.8" y="366" width="19.2" height="2" fill="url(#fl)"/>
<rect x="666.5" y="366" width="19.3" height="2" fill="url(#fr)"/>
<rect x="335.6" y="368" width="22.4" height="3" fill="url(#fl)"/>
<rect x="666.5" y="368" width="19.9" height="3" fill="url(#fr)"/>
<rect x="335.1" y="371" width="22.9" height="5" fill="url(#fl)"/>
<rect x="666.5" y="371" width="23.6" height="5" fill="url(#fr)"/>
<rect x="334.3" y="376" width="23.7" height="3" fill="url(#fl)"/>
<rect x="666.5" y="376" width="24.0" height="3" fill="url(#fr)"/>
<rect x="333.2" y="379" width="24.8" height="2" fill="url(#fl)"/>
<rect x="666.5" y="379" width="24.7" height="2" fill="url(#fr)"/>
<rect x="336.8" y="381" width="21.2" height="3" fill="url(#fl)"/>
<rect x="666.5" y="381" width="18.3" height="3" fill="url(#fr)"/>
<rect x="333.5" y="384" width="24.5" height="2" fill="url(#fl)"/>
<rect x="666.5" y="384" width="20.8" height="2" fill="url(#fr)"/>
<rect x="335.2" y="386" width="22.8" height="3" fill="url(#fl)"/>
<rect x="666.5" y="386" width="22.8" height="3" fill="url(#fr)"/>
<rect x="338.6" y="389" width="19.4" height="5" fill="url(#fl)"/>
<rect x="666.5" y="389" width="21.4" height="5" fill="url(#fr)"/>
<rect x="338.8" y="394" width="19.2" height="3" fill="url(#fl)"/>
<rect x="666.5" y="394" width="25.0" height="3" fill="url(#fr)"/>
<rect x="336.0" y="397" width="22.0" height="5" fill="url(#fl)"/>
<rect x="666.5" y="397" width="18.4" height="5" fill="url(#fr)"/>
<rect x="339.6" y="402" width="18.4" height="3" fill="url(#fl)"/>
<rect x="666.5" y="402" width="22.7" height="3" fill="url(#fr)"/>
<rect x="333.2" y="405" width="24.8" height="2" fill="url(#fl)"/>
<rect x="666.5" y="405" width="18.3" height="2" fill="url(#fr)"/>
<rect x="340.1" y="407" width="17.9" height="3" fill="url(#fl)"/>
<rect x="666.5" y="407" width="24.7" height="3" fill="url(#fr)"/>
<rect x="336.6" y="410" width="21.4" height="2" fill="url(#fl)"/>
<rect x="666.5" y="410" width="20.3" height="2" fill="url(#fr)"/>
<rect x="335.7" y="412" width="22.3" height="3" fill="url(#fl)"/>
<rect x="666.5" y="412" width="17.6" height="3" fill="url(#fr)"/>
<rect x="341.0" y="415" width="17.0" height="5" fill="url(#fl)"/>
<rect x="666.5" y="415" width="20.2" height="5" fill="url(#fr)"/>
<rect x="334.1" y="420" width="23.9" height="6" fill="url(#fl)"/>
<rect x="666.5" y="420" width="22.5" height="6" fill="url(#fr)"/>
<rect x="333.3" y="426" width="24.7" height="2" fill="url(#fl)"/>
<rect x="666.5" y="426" width="21.4" height="2" fill="url(#fr)"/>
<rect x="338.6" y="428" width="19.4" height="3" fill="url(#fl)"/>
<rect x="666.5" y="428" width="21.1" height="3" fill="url(#fr)"/>
<rect x="338.7" y="431" width="19.3" height="2" fill="url(#fl)"/>
<rect x="666.5" y="431" width="19.8" height="2" fill="url(#fr)"/>
<rect x="334.5" y="433" width="23.5" height="6" fill="url(#fl)"/>
<rect x="666.5" y="433" width="22.1" height="6" fill="url(#fr)"/>
<rect x="339.9" y="439" width="18.1" height="2" fill="url(#fl)"/>
<rect x="666.5" y="439" width="21.8" height="2" fill="url(#fr)"/>
<rect x="333.3" y="441" width="24.7" height="3" fill="url(#fl)"/>
<rect x="666.5" y="441" width="24.7" height="3" fill="url(#fr)"/>
<rect x="337.0" y="444" width="21.0" height="2" fill="url(#fl)"/>
<rect x="666.5" y="444" width="21.6" height="2" fill="url(#fr)"/>
<rect x="333.2" y="446" width="24.8" height="3" fill="url(#fl)"/>
<rect x="666.5" y="446" width="26.3" height="3" fill="url(#fr)"/>
<rect x="335.3" y="449" width="22.7" height="2" fill="url(#fl)"/>
<rect x="666.5" y="449" width="26.8" height="2" fill="url(#fr)"/>
<rect x="333.4" y="451" width="24.6" height="3" fill="url(#fl)"/>
<rect x="666.5" y="451" width="22.6" height="3" fill="url(#fr)"/>
<rect x="335.1" y="454" width="22.9" height="2" fill="url(#fl)"/>
<rect x="666.5" y="454" width="26.9" height="2" fill="url(#fr)"/>
<rect x="336.3" y="456" width="21.7" height="3" fill="url(#fl)"/>
<rect x="666.5" y="456" width="24.7" height="3" fill="url(#fr)"/>
<rect x="171" y="340" width="122" height="119" fill="url(#tex)"/>
<rect x="169" y="459.5" width="126" height="1.5" fill="#70ffa8"/>
<rect x="168" y="461" width="128" height="3" fill="#18dcff"/>
<rect x="167" y="464" width="130" height="3" fill="#0068ff"/>
<rect x="167" y="467" width="130" height="2" fill="#0018e8"/>
<rect x="168" y="459.5" width="128" height="10" fill="url(#bf)" opacity="0.45"/>
<path d="M198.4 452h4v7h-4zM229.6 452h4v7h-4zM260.8 452h4v7h-4z" fill="#50f0c0" opacity="0.5"/>
<path d="M197.9 459.5h5v8h-5zM229.1 459.5h5v8h-5zM260.2 459.5h5v8h-5z" fill="#0030ff" opacity="0.6"/>
<rect x="358" y="340" width="308.5" height="119" fill="url(#tex)"/>
<rect x="356" y="459.5" width="312.5" height="1.5" fill="#70ffa8"/>
<rect x="355" y="461" width="314.5" height="3" fill="#18dcff"/>
<rect x="354" y="464" width="316.5" height="3" fill="#0068ff"/>
<rect x="354" y="467" width="316.5" height="2" fill="#0018e8"/>
<rect x="355" y="459.5" width="314.5" height="10" fill="url(#bf)" opacity="0.45"/>
<path d="M385.4 452h4v7h-4zM416.5 452h4v7h-4zM447.6 452h4v7h-4zM478.8 452h4v7h-4zM509.9 452h4v7h-4zM541.1 452h4v7h-4zM572.2 452h4v7h-4zM603.4 452h4v7h-4zM634.5 452h4v7h-4z" fill="#50f0c0" opacity="0.5"/>
<path d="M384.9 459.5h5v8h-5zM416.0 459.5h5v8h-5zM447.1 459.5h5v8h-5zM478.3 459.5h5v8h-5zM509.4 459.5h5v8h-5zM540.6 459.5h5v8h-5zM571.8 459.5h5v8h-5zM602.9 459.5h5v8h-5zM634.0 459.5h5v8h-5z" fill="#0030ff" opacity="0.6"/>
<rect x="417.8" y="340" width="1.6" height="120" fill="#30e8d8"/>
<rect x="542.4" y="340" width="1.6" height="120" fill="#30e8d8"/>
</g>
<path d="M107.5 340V480M185.5 340V480M263.5 340V480M341.5 340V480M419.5 340V480M496.5 340V480M574.5 340V480M652.5 340V480M730.5 340V480M45 359.5H793M45 379.5H793M45 399.5H793M45 419.5H793M45 439.5H793M45 459.5H793" stroke="#b4b4b4" stroke-opacity="0.4" stroke-width="1" fill="none"/>
<path d="M107.5 480V473M107.5 340V347M185.5 480V473M185.5 340V347M263.5 480V473M263.5 340V347M341.5 480V473M341.5 340V347M419.5 480V473M419.5 340V347M496.5 480V473M496.5 340V347M574.5 480V473M574.5 340V347M652.5 480V473M652.5 340V347M730.5 480V473M730.5 340V347M45 359.5H52M793 359.5H786M45 379.5H52M793 379.5H786M45 399.5H52M793 399.5H786M45 419.5H52M793 419.5H786M45 439.5H52M793 439.5H786M45 459.5H52M793 459.5H786" stroke="#d0d0d0" stroke-width="1" fill="none"/>
<rect x="45.5" y="339.5" width="748" height="141" fill="none" stroke="#c4c4c4" stroke-width="1"/>
<g font-family='"Liberation Sans", sans-serif' font-size="9" fill="#b9b9b9"><text x="107.0" y="491" text-anchor="middle">-200</text><text x="184.9" y="491" text-anchor="middle">-150</text><text x="262.8" y="491" text-anchor="middle">-100</text><text x="340.6" y="491" text-anchor="middle">-50</text><text x="421.2" y="491" text-anchor="middle">0</text><text x="499.1" y="491" text-anchor="middle">50</text><text x="577.0" y="491" text-anchor="middle">100</text><text x="654.8" y="491" text-anchor="middle">150</text><text x="732.7" y="491" text-anchor="middle">200</text><text x="42" y="363.3" text-anchor="end">-100</text><text x="42" y="383.3" text-anchor="end">-200</text><text x="42" y="403.3" text-anchor="end">-300</text><text x="42" y="423.3" text-anchor="end">-400</text><text x="42" y="443.3" text-anchor="end">-500</text><text x="42" y="463.3" text-anchor="end">-600</text><text x="42" y="483.3" text-anchor="end">-700</text></g>
<text x="419" y="505" text-anchor="middle" font-family='"Liberation Sans", sans-serif' font-size="10.5" fill="#b9b9b9">Frequency (MHz)</text>
<text transform="translate(9.3 359) rotate(90)" font-family='"Liberation Sans", sans-serif' font-size="10.5" fill="#b9b9b9" textLength="83" lengthAdjust="spacing">Time History (us)</text>
<path d="M12.5 449V457.5M10.3 455.2L12.5 457.8L14.7 455.2" stroke="#b9b9b9" stroke-width="0.9" fill="none"/>
</svg>
<div class="a" style="left:6px;top:508px;width:801px;height:23px;background:#efefef"></div>
<div class="a" style="left:9px;top:513px;font-size:10.5px;line-height:12px;color:#000">Processing</div>
<div class="st" style="left:308px;width:108px;letter-spacing:0px">RBW=78.125 kHz</div>
<div class="st" style="left:418px;width:132px;letter-spacing:0.28px">Sample rate=480 MHz</div>
<div class="st" style="left:552px;width:110px;letter-spacing:0.18px">Time res.=12.8 us</div>
<div class="st" style="left:664px;width:100px;letter-spacing:0.37px">Offset=684.8 us</div>
<div class="st" style="left:766px;width:38px;letter-spacing:0.3px">T=0</div>
</body></html>
